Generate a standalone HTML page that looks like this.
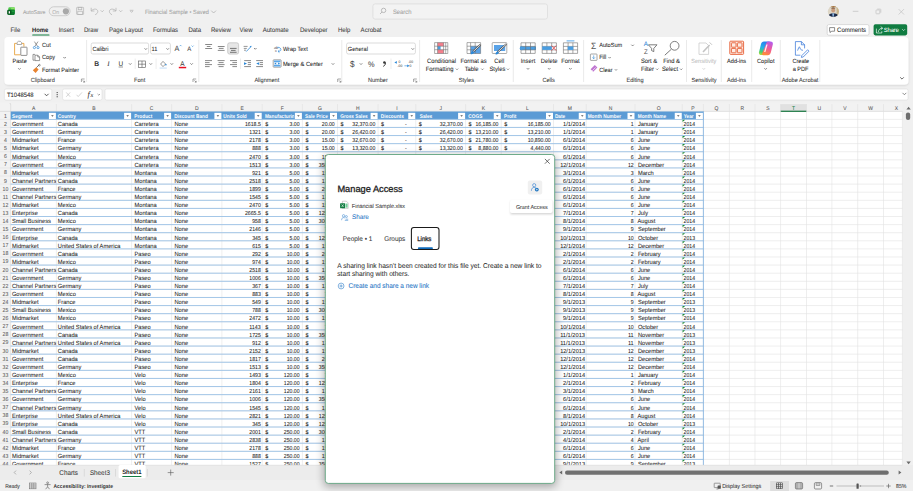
<!DOCTYPE html>
<html><head><meta charset="utf-8"><title>Excel - Manage Access</title>
<style>
html,body{margin:0;padding:0;width:913px;height:491px;overflow:hidden;background:#f0f0f0;}
svg{display:block;font-family:"Liberation Sans", sans-serif;text-rendering:geometricPrecision;}
</style></head><body>
<svg width="913" height="491" viewBox="0 0 913 491">
<defs>
<filter id="shd" x="-15%" y="-15%" width="130%" height="130%"><feGaussianBlur stdDeviation="4"/></filter>
<filter id="shd2" x="-20%" y="-20%" width="140%" height="140%"><feGaussianBlur stdDeviation="1.2"/></filter>
</defs>
<rect x="0.00" y="0.00" width="913.00" height="491.00" fill="#f0f0f0"/>
<rect x="8.40" y="7.30" width="6.50" height="3.40" fill="#52cc4a" rx="1.0"/>
<rect x="11.20" y="7.60" width="3.70" height="2.20" fill="#8ee36a" rx="0.6"/>
<rect x="7.60" y="9.50" width="7.30" height="5.40" fill="#0e7a2e" rx="1.1"/>
<rect x="11.40" y="10.60" width="3.50" height="1.40" fill="#1a9a3a"/>
<rect x="7.20" y="10.20" width="4.20" height="4.20" fill="#0a5a20" rx="0.6"/>
<rect x="8.70" y="11.20" width="1.30" height="2.30" fill="#f2f2f2"/>
<text x="22.90" y="13.80" font-size="5.584" fill="#a3a3a3" textLength="22.42" lengthAdjust="spacingAndGlyphs" stroke="#a3a3a3" stroke-width="0.06">AutoSave</text>
<rect x="49.20" y="6.80" width="20.90" height="8.90" fill="none" rx="4.45" stroke="#bdbdbd" stroke-width="0.7"/>
<text x="52.20" y="13.60" font-size="5.616" fill="#b5b5b5" textLength="6.94" lengthAdjust="spacingAndGlyphs" stroke="#b5b5b5" stroke-width="0.06">On</text>
<circle cx="65.9" cy="11.3" r="3.1" fill="#a9a9a9"/>
<g fill="none" stroke="#b3b3b3" stroke-width="0.7"><rect x="76.6" y="7.3" width="7" height="7.2" rx="0.6"/><rect x="78.2" y="7.3" width="3.6" height="2.4"/><rect x="77.8" y="11.2" width="4.6" height="3.3"/></g>
<g fill="none" stroke="#b3b3b3" stroke-width="0.75" stroke-linecap="round"><path d="M91.2 8.2 L91.2 11 L94 11"/><path d="M91.4 10.8 C93.5 8.2 97.8 8.5 97.8 11.6 C97.8 13 96.6 14 95.5 14.6"/><path d="M101 10.6 L102.2 11.8 L103.4 10.6"/><path d="M116 8.2 L116 11 L113.2 11"/><path d="M115.8 10.8 C113.7 8.2 109.4 8.5 109.4 11.6 C109.4 13 110.6 14 111.7 14.6"/><path d="M119.5 10.6 L120.7 11.8 L121.9 10.6"/><path d="M130.2 10.3 L133 10.3 M130.6 11.3 L131.6 12.4 L132.6 11.3"/></g>
<text x="144.90" y="13.90" font-size="6.059" fill="#a3a3a3" textLength="64.02" lengthAdjust="spacingAndGlyphs" stroke="#a3a3a3" stroke-width="0.06">Financial Sample • Saved</text>
<path d="M211.2 10.6 L213.6 13 L216 10.6" fill="none" stroke="#a8a8a8" stroke-width="0.7"/>
<rect x="372.90" y="3.90" width="174.60" height="15.20" fill="#f3f3f3" rx="2.2" stroke="#dadada" stroke-width="0.7"/>
<g fill="none" stroke="#a8a8a8" stroke-width="0.75"><circle cx="383.6" cy="10.4" r="2.2"/><path d="M382 12 L380 14"/></g>
<text x="392.90" y="13.60" font-size="6.34" fill="#a0a0a0" textLength="18.60" lengthAdjust="spacingAndGlyphs" stroke="#a0a0a0" stroke-width="0.06">Search</text>
<defs><clipPath id="avc"><circle cx="833.4" cy="11.6" r="5.6"/></clipPath></defs>
<g clip-path="url(#avc)"><rect x="827" y="5" width="13" height="13" fill="#ddd6c6"/><rect x="827" y="5" width="13" height="2.2" fill="#a7753f"/><rect x="836.6" y="7" width="3" height="8" fill="#c9b48a"/><ellipse cx="833.2" cy="10.2" rx="1.9" ry="2.4" fill="#c89a7c"/><path d="M831.2 8.6 C831.4 7.2 835 7.2 835.2 8.6 Z" fill="#6b4a33"/><path d="M828.4 16.8 C828.8 14.0 830.4 13.2 833.2 13.2 C836.0 13.2 837.8 14.0 838.4 16.8 Z" fill="#1a2a4a"/><path d="M832.2 13.3 L834.2 13.3 L833.8 16.8 L832.6 16.8 Z" fill="#8fb4dc"/></g>
<line x1="852.80" y1="11.30" x2="858.40" y2="11.30" stroke="#bfbfbf" stroke-width="0.7"/>
<g fill="none" stroke="#c2c2c2" stroke-width="0.7"><rect x="876" y="10" width="3.8" height="3.8" rx="0.5"/><path d="M877.2 9.1 L880.3 9.1 Q880.8 9.1 880.8 9.6 L880.8 12.7"/></g>
<path d="M898.6 9.1 L904 14.5 M904 9.1 L898.6 14.5" stroke="#c2c2c2" stroke-width="0.7"/>
<rect x="827.20" y="24.60" width="41.80" height="10.60" fill="#ffffff" rx="1.6" stroke="#c6c6c6" stroke-width="0.6"/>
<path d="M829.6 27.6 L834.6 27.6 L834.6 31.2 L831.6 31.2 L830.2 32.6 L830.2 31.2 L829.6 31.2 Z" fill="none" stroke="#424242" stroke-width="0.6"/>
<text x="837.10" y="32.00" font-size="6.48" fill="#242424" textLength="29.01" lengthAdjust="spacingAndGlyphs" stroke="#242424" stroke-width="0.06">Comments</text>
<rect x="873.60" y="24.20" width="33.60" height="11.20" fill="#107c41" rx="1.8"/>
<g fill="none" stroke="#fff" stroke-width="0.65" stroke-linecap="round" stroke-linejoin="round"><path d="M876.4 29.0 V33.0 H881.8 V31.6"/><path d="M878.4 31.6 C878.6 29.4 880.0 28.2 882.4 28.2"/><path d="M881.0 26.8 L882.5 28.2 L881.0 29.6"/></g>
<text x="883.70" y="32.00" font-size="6.188" fill="#ffffff" textLength="15.29" lengthAdjust="spacingAndGlyphs" stroke="#ffffff" stroke-width="0.06">Share</text>
<path d="M902.2 29.2 L903.6 30.6 L905 29.2" fill="none" stroke="#fff" stroke-width="0.6"/>
<text x="10.50" y="32.30" font-size="6.534" fill="#3b3b3b" textLength="9.75" lengthAdjust="spacingAndGlyphs" stroke="#3b3b3b" stroke-width="0.06">File</text>
<text x="58.70" y="32.30" font-size="6.534" fill="#3b3b3b" textLength="15.13" lengthAdjust="spacingAndGlyphs" stroke="#3b3b3b" stroke-width="0.06">Insert</text>
<text x="83.90" y="32.30" font-size="6.534" fill="#3b3b3b" textLength="14.12" lengthAdjust="spacingAndGlyphs" stroke="#3b3b3b" stroke-width="0.06">Draw</text>
<text x="108.90" y="32.30" font-size="6.534" fill="#3b3b3b" textLength="33.98" lengthAdjust="spacingAndGlyphs" stroke="#3b3b3b" stroke-width="0.06">Page Layout</text>
<text x="152.90" y="32.30" font-size="6.534" fill="#3b3b3b" textLength="25.21" lengthAdjust="spacingAndGlyphs" stroke="#3b3b3b" stroke-width="0.06">Formulas</text>
<text x="188.40" y="32.30" font-size="6.534" fill="#3b3b3b" textLength="12.78" lengthAdjust="spacingAndGlyphs" stroke="#3b3b3b" stroke-width="0.06">Data</text>
<text x="211.00" y="32.30" font-size="6.534" fill="#3b3b3b" textLength="19.84" lengthAdjust="spacingAndGlyphs" stroke="#3b3b3b" stroke-width="0.06">Review</text>
<text x="239.50" y="32.30" font-size="6.534" fill="#3b3b3b" textLength="13.00" lengthAdjust="spacingAndGlyphs" stroke="#3b3b3b" stroke-width="0.06">View</text>
<text x="262.70" y="32.30" font-size="6.534" fill="#3b3b3b" textLength="25.90" lengthAdjust="spacingAndGlyphs" stroke="#3b3b3b" stroke-width="0.06">Automate</text>
<text x="300.00" y="32.30" font-size="6.534" fill="#3b3b3b" textLength="27.58" lengthAdjust="spacingAndGlyphs" stroke="#3b3b3b" stroke-width="0.06">Developer</text>
<text x="338.00" y="32.30" font-size="6.534" fill="#3b3b3b" textLength="12.44" lengthAdjust="spacingAndGlyphs" stroke="#3b3b3b" stroke-width="0.06">Help</text>
<text x="360.60" y="32.30" font-size="6.534" fill="#3b3b3b" textLength="20.85" lengthAdjust="spacingAndGlyphs" stroke="#3b3b3b" stroke-width="0.06">Acrobat</text>
<text x="32.00" y="32.30" font-size="6.318" fill="#242424" font-weight="700" textLength="16.25" lengthAdjust="spacingAndGlyphs">Home</text>
<rect x="32.20" y="34.50" width="17.30" height="1.10" fill="#107c41" rx="0.5"/>
<rect x="5.00" y="38.80" width="903.60" height="46.80" fill="#000" rx="4" opacity="0.12" filter="url(#shd2)"/>
<rect x="4.30" y="37.00" width="904.30" height="47.80" fill="#ffffff" rx="3.8"/>
<line x1="86.60" y1="40.00" x2="86.60" y2="82.00" stroke="#e1e1e1" stroke-width="0.7"/>
<line x1="198.80" y1="40.00" x2="198.80" y2="82.00" stroke="#e1e1e1" stroke-width="0.7"/>
<line x1="341.80" y1="40.00" x2="341.80" y2="82.00" stroke="#e1e1e1" stroke-width="0.7"/>
<line x1="419.60" y1="40.00" x2="419.60" y2="82.00" stroke="#e1e1e1" stroke-width="0.7"/>
<line x1="513.30" y1="40.00" x2="513.30" y2="82.00" stroke="#e1e1e1" stroke-width="0.7"/>
<line x1="583.60" y1="40.00" x2="583.60" y2="82.00" stroke="#e1e1e1" stroke-width="0.7"/>
<line x1="686.50" y1="40.00" x2="686.50" y2="82.00" stroke="#e1e1e1" stroke-width="0.7"/>
<line x1="721.30" y1="40.00" x2="721.30" y2="82.00" stroke="#e1e1e1" stroke-width="0.7"/>
<line x1="751.70" y1="40.00" x2="751.70" y2="82.00" stroke="#e1e1e1" stroke-width="0.7"/>
<line x1="780.30" y1="40.00" x2="780.30" y2="82.00" stroke="#e1e1e1" stroke-width="0.7"/>
<line x1="819.80" y1="40.00" x2="819.80" y2="82.00" stroke="#e1e1e1" stroke-width="0.7"/>
<text x="30.80" y="82.20" font-size="6.048" fill="#3a3a3a" textLength="23.97" lengthAdjust="spacingAndGlyphs" stroke="#3a3a3a" stroke-width="0.06">Clipboard</text>
<text x="134.00" y="82.20" font-size="6.048" fill="#3a3a3a" textLength="11.21" lengthAdjust="spacingAndGlyphs" stroke="#3a3a3a" stroke-width="0.06">Font</text>
<text x="254.40" y="82.20" font-size="6.048" fill="#3a3a3a" textLength="24.90" lengthAdjust="spacingAndGlyphs" stroke="#3a3a3a" stroke-width="0.06">Alignment</text>
<text x="367.90" y="82.20" font-size="6.048" fill="#3a3a3a" textLength="19.92" lengthAdjust="spacingAndGlyphs" stroke="#3a3a3a" stroke-width="0.06">Number</text>
<text x="466.40" y="82.20" font-size="6.048" fill="#3a3a3a" text-anchor="middle" textLength="15.25" lengthAdjust="spacingAndGlyphs" stroke="#3a3a3a" stroke-width="0.06">Styles</text>
<text x="548.60" y="82.20" font-size="6.048" fill="#3a3a3a" text-anchor="middle" textLength="12.45" lengthAdjust="spacingAndGlyphs" stroke="#3a3a3a" stroke-width="0.06">Cells</text>
<text x="635.00" y="82.20" font-size="6.048" fill="#3a3a3a" text-anchor="middle" textLength="17.12" lengthAdjust="spacingAndGlyphs" stroke="#3a3a3a" stroke-width="0.06">Editing</text>
<text x="704.00" y="82.20" font-size="6.048" fill="#3a3a3a" text-anchor="middle" textLength="25.21" lengthAdjust="spacingAndGlyphs" stroke="#3a3a3a" stroke-width="0.06">Sensitivity</text>
<text x="736.50" y="82.20" font-size="6.048" fill="#3a3a3a" text-anchor="middle" textLength="18.99" lengthAdjust="spacingAndGlyphs" stroke="#3a3a3a" stroke-width="0.06">Add-ins</text>
<text x="800.00" y="82.20" font-size="6.048" fill="#3a3a3a" text-anchor="middle" textLength="36.74" lengthAdjust="spacingAndGlyphs" stroke="#3a3a3a" stroke-width="0.06">Adobe Acrobat</text>
<g fill="none" stroke="#6b6b6b" stroke-width="0.6"><path d="M81.4 82 L81.4 79 L84.6 79"/><path d="M82.8 80.4 L84.6 82.2 M84.6 80.8 L84.6 82.2 L83.2 82.2"/></g>
<g fill="none" stroke="#6b6b6b" stroke-width="0.6"><path d="M193.0 82 L193.0 79 L196.2 79"/><path d="M194.4 80.4 L196.2 82.2 M196.2 80.8 L196.2 82.2 L194.8 82.2"/></g>
<g fill="none" stroke="#6b6b6b" stroke-width="0.6"><path d="M337.7 82 L337.7 79 L340.9 79"/><path d="M339.1 80.4 L340.9 82.2 M340.9 80.8 L340.9 82.2 L339.5 82.2"/></g>
<g fill="none" stroke="#6b6b6b" stroke-width="0.6"><path d="M413.6 82 L413.6 79 L416.8 79"/><path d="M415.0 80.4 L416.8 82.2 M416.8 80.8 L416.8 82.2 L415.4 82.2"/></g>
<g fill="none" stroke-width="0.9"><path d="M16.8 43.4 L14.6 43.4 L14.6 54.8 L20.4 54.8" stroke="#e8a33d"/><path d="M21.8 43.4 L23.9 43.4 L23.9 46.6" stroke="#e8a33d"/><path d="M17 44.5 L17 42.6 L18.4 41.3 L20.3 41.3 L21.6 42.6 L21.6 44.5 Z" stroke="#8a8a8a" stroke-width="0.7"/><rect x="20.8" y="47.2" width="6.2" height="8.2" rx="0.4" stroke="#6e6e6e" stroke-width="0.75"/></g>
<text x="19.60" y="63.20" font-size="6.048" fill="#262626" text-anchor="middle" textLength="14.32" lengthAdjust="spacingAndGlyphs" stroke="#262626" stroke-width="0.06">Paste</text>
<path d="M18.15 68.20 L19.40 69.45 L20.65 68.20" fill="none" stroke="#5c5c5c" stroke-width="0.7"/>
<g fill="none" stroke-width="0.7"><path d="M34.4 41.6 L37.6 46.4 M38 41.6 L34.8 46.4" stroke="#6b6b6b"/><circle cx="34.4" cy="47.6" r="1.1" stroke="#2b88d8"/><circle cx="38.0" cy="47.6" r="1.1" stroke="#2b88d8"/></g>
<text x="42.00" y="47.20" font-size="6.048" fill="#262626" textLength="8.71" lengthAdjust="spacingAndGlyphs" stroke="#262626" stroke-width="0.06">Cut</text>
<g fill="none" stroke="#6b6b6b" stroke-width="0.7"><path d="M35 54.4 L33 54.4 L33 60.2 L34.8 60.2"/><path d="M35 55.2 L37.8 55.2 L39.6 57 L39.6 60.6 L35 60.6 Z"/><path d="M37.8 55.2 L37.8 57 L39.6 57"/></g>
<text x="42.00" y="59.40" font-size="6.048" fill="#262626" textLength="13.07" lengthAdjust="spacingAndGlyphs" stroke="#262626" stroke-width="0.06">Copy</text>
<path d="M63.35 57.00 L64.60 58.25 L65.85 57.00" fill="none" stroke="#5c5c5c" stroke-width="0.7"/>
<g><path d="M32.8 70.2 L36.2 67.2 L38.6 69.6 L35.6 73 Z" fill="#e8832f"/><path d="M36.4 67.6 L39.4 64.6" stroke="#555" stroke-width="0.8"/><circle cx="39.4" cy="65.2" r="0.9" fill="none" stroke="#555" stroke-width="0.5"/></g>
<text x="42.00" y="71.80" font-size="6.048" fill="#262626" textLength="37.03" lengthAdjust="spacingAndGlyphs" stroke="#262626" stroke-width="0.06">Format Painter</text>
<rect x="91.20" y="43.00" width="57.40" height="11.00" fill="#fff" rx="1.6" stroke="#c4c4c4" stroke-width="0.6"/>
<text x="92.40" y="50.60" font-size="6.102" fill="#262626" textLength="16.01" lengthAdjust="spacingAndGlyphs" stroke="#262626" stroke-width="0.06">Calibri</text>
<path d="M144.55 48.30 L145.80 49.55 L147.05 48.30" fill="none" stroke="#555" stroke-width="0.7"/>
<rect x="150.60" y="43.00" width="19.80" height="11.00" fill="#fff" rx="1.6" stroke="#c4c4c4" stroke-width="0.6"/>
<text x="151.60" y="50.60" font-size="6.102" fill="#262626" textLength="5.87" lengthAdjust="spacingAndGlyphs" stroke="#262626" stroke-width="0.06">11</text>
<path d="M166.45 48.30 L167.70 49.55 L168.95 48.30" fill="none" stroke="#555" stroke-width="0.7"/>
<text x="176.90" y="51.00" font-size="7.776" fill="#4a4a4a" text-anchor="middle" textLength="4.80" lengthAdjust="spacingAndGlyphs" stroke="#4a4a4a" stroke-width="0.06">A</text>
<path d="M179.6 46.2 L180.6 45.2 L181.6 46.2" fill="none" stroke="#2b88d8" stroke-width="0.6"/>
<text x="189.20" y="51.00" font-size="6.48" fill="#4a4a4a" text-anchor="middle" textLength="4.00" lengthAdjust="spacingAndGlyphs" stroke="#4a4a4a" stroke-width="0.06">A</text>
<path d="M191.6 45.6 L192.6 46.6 L193.6 45.6" fill="none" stroke="#2b88d8" stroke-width="0.6"/>
<text x="96.60" y="66.20" font-size="6.8" fill="#3a3a3a" font-weight="700" text-anchor="middle">B</text>
<text x="108.40" y="66.20" font-size="7.0" fill="#3a3a3a" text-anchor="middle" font-style="italic" font-family="Liberation Serif" stroke="#3a3a3a" stroke-width="0.06">I</text>
<text x="120.80" y="65.80" font-size="6.4" fill="#3a3a3a" text-anchor="middle" stroke="#3a3a3a" stroke-width="0.06">U</text>
<line x1="118.60" y1="67.00" x2="123.00" y2="67.00" stroke="#333" stroke-width="0.5"/>
<path d="M128.95 63.30 L130.20 64.55 L131.45 63.30" fill="none" stroke="#555" stroke-width="0.7"/>
<line x1="135.20" y1="58.50" x2="135.20" y2="69.00" stroke="#e1e1e1" stroke-width="0.6"/>
<g fill="none" stroke="#555" stroke-width="0.6"><rect x="138.4" y="61" width="7.2" height="6.4"/><path d="M142 61 L142 67.4 M138.4 64.2 L145.6 64.2"/></g>
<path d="M149.55 63.30 L150.80 64.55 L152.05 63.30" fill="none" stroke="#555" stroke-width="0.7"/>
<line x1="156.10" y1="58.50" x2="156.10" y2="69.00" stroke="#e1e1e1" stroke-width="0.6"/>
<g fill="none" stroke="#555" stroke-width="0.6"><path d="M160.6 64 L163 61.4 L165.6 64 L163 66.6 Z"/></g><circle cx="165.9" cy="64.8" r="0.8" fill="#2b88d8"/>
<rect x="159.60" y="67.60" width="7.20" height="0.90" fill="#b9d7f5"/>
<path d="M170.55 63.30 L171.80 64.55 L173.05 63.30" fill="none" stroke="#555" stroke-width="0.7"/>
<text x="182.50" y="66.00" font-size="6.912" fill="#333" text-anchor="middle" textLength="4.27" lengthAdjust="spacingAndGlyphs" stroke="#333" stroke-width="0.06">A</text>
<rect x="178.80" y="66.80" width="7.40" height="1.50" fill="#e81123"/>
<path d="M190.35 63.30 L191.60 64.55 L192.85 63.30" fill="none" stroke="#555" stroke-width="0.7"/>
<path d="M205.20 44.50 L212.10 44.50 M206.80 46.50 L210.50 46.50 M205.20 48.50 L212.10 48.50 " fill="none" stroke="#6a6a6a" stroke-width="0.8"/>
<path d="M217.80 46.50 L224.60 46.50 M218.80 48.40 L223.60 48.40 M217.80 50.40 L224.60 50.40 " fill="none" stroke="#6a6a6a" stroke-width="0.8"/>
<rect x="227.70" y="42.80" width="10.90" height="11.30" fill="#e6e6e6" rx="1.8" stroke="#bcbcbc" stroke-width="0.7"/>
<path d="M230.00 48.40 L236.60 48.40 M231.00 50.40 L235.60 50.40 M230.00 52.30 L236.60 52.30 " fill="none" stroke="#555" stroke-width="0.8"/>
<g fill="none" stroke-width="0.7"><path d="M243.6 46.4 L247.6 46.4 M243.8 48.4 L246.8 48.4 M244 50.2 L246 50.2" stroke="#6a6a6a"/><path d="M246.2 51.6 L251 46.6" stroke="#2b88d8" stroke-width="0.8"/></g><path d="M251.4 45.8 L249.6 46.2 L251 47.6Z" fill="#2b88d8"/>
<path d="M254.05 48.00 L255.30 49.25 L256.55 48.00" fill="none" stroke="#555" stroke-width="0.7"/>
<path d="M205.00 60.60 L212.00 60.60 M205.00 62.60 L209.60 62.60 M205.00 64.60 L212.00 64.60 M205.00 66.60 L209.60 66.60 " fill="none" stroke="#6a6a6a" stroke-width="0.8"/>
<path d="M217.60 60.60 L224.60 60.60 M218.60 62.60 L223.60 62.60 M217.60 64.60 L224.60 64.60 M218.60 66.60 L223.60 66.60 " fill="none" stroke="#6a6a6a" stroke-width="0.8"/>
<path d="M230.00 60.60 L237.00 60.60 M232.40 62.60 L237.00 62.60 M230.00 64.60 L237.00 64.60 M232.40 66.60 L237.00 66.60 " fill="none" stroke="#6a6a6a" stroke-width="0.8"/>
<line x1="240.50" y1="58.50" x2="240.50" y2="69.00" stroke="#e1e1e1" stroke-width="0.6"/>
<path d="M244.20 60.60 L251.00 60.60 M247.80 62.60 L251.00 62.60 M247.80 64.60 L251.00 64.60 M244.20 66.60 L251.00 66.60 " fill="none" stroke="#6a6a6a" stroke-width="0.8"/>
<path d="M244.0 62.2 L247.0 63.6 L244.0 65.0Z" fill="#2b88d8"/>
<path d="M256.20 60.60 L263.00 60.60 M259.80 62.60 L263.00 62.60 M259.80 64.60 L263.00 64.60 M256.20 66.60 L263.00 66.60 " fill="none" stroke="#6a6a6a" stroke-width="0.8"/>
<path d="M259.2 62.2 L256.2 63.6 L259.2 65.0Z" fill="#2b88d8"/>
<text x="274.00" y="48.60" font-size="3.8" fill="#6a6a6a" stroke="#6a6a6a" stroke-width="0.06">ab</text>
<text x="275.00" y="52.40" font-size="3.8" fill="#6a6a6a" stroke="#6a6a6a" stroke-width="0.06">c</text>
<path d="M277.4 47.2 C281.8 47.2 282.0 51.4 278.4 51.4" fill="none" stroke="#2b88d8" stroke-width="0.7"/><path d="M279.4 50.2 L278.0 51.4 L279.4 52.6" fill="none" stroke="#2b88d8" stroke-width="0.7"/>
<text x="282.90" y="51.20" font-size="5.994" fill="#262626" textLength="24.78" lengthAdjust="spacingAndGlyphs" stroke="#262626" stroke-width="0.06">Wrap Text</text>
<rect x="273.20" y="59.80" width="7.90" height="7.40" fill="#ffffff" rx="0.6" stroke="#6a6a6a" stroke-width="0.6"/>
<rect x="273.90" y="60.50" width="6.50" height="1.80" fill="#5aa7ea"/>
<rect x="273.90" y="64.70" width="6.50" height="1.80" fill="#5aa7ea"/>
<path d="M274.2 63.5 L276.2 62.6 L276.2 64.4Z M280.1 63.5 L278.1 62.6 L278.1 64.4Z" fill="#2b88d8"/>
<text x="282.90" y="65.90" font-size="6.124" fill="#262626" textLength="40.02" lengthAdjust="spacingAndGlyphs" stroke="#262626" stroke-width="0.06">Merge &amp; Center</text>
<path d="M331.75 63.30 L333.00 64.55 L334.25 63.30" fill="none" stroke="#555" stroke-width="0.7"/>
<rect x="346.60" y="43.00" width="68.80" height="11.00" fill="#fff" rx="1.6" stroke="#c4c4c4" stroke-width="0.6"/>
<text x="347.80" y="50.60" font-size="6.102" fill="#262626" textLength="20.10" lengthAdjust="spacingAndGlyphs" stroke="#262626" stroke-width="0.06">General</text>
<path d="M411.55 48.30 L412.80 49.55 L414.05 48.30" fill="none" stroke="#555" stroke-width="0.7"/>
<text x="352.20" y="66.90" font-size="8.856" fill="#4a4a4a" text-anchor="middle" textLength="4.56" lengthAdjust="spacingAndGlyphs" stroke="#4a4a4a" stroke-width="0.06">$</text>
<path d="M359.75 63.30 L361.00 64.55 L362.25 63.30" fill="none" stroke="#555" stroke-width="0.7"/>
<text x="371.40" y="66.60" font-size="7.992" fill="#4a4a4a" text-anchor="middle" textLength="6.58" lengthAdjust="spacingAndGlyphs" stroke="#4a4a4a" stroke-width="0.06">%</text>
<circle cx="384.4" cy="62.4" r="1.25" fill="#333"/><path d="M385.5 62.6 C385.6 64.6 384.6 65.8 383.2 66.4" fill="none" stroke="#333" stroke-width="0.9"/>
<line x1="391.00" y1="58.50" x2="391.00" y2="69.00" stroke="#e1e1e1" stroke-width="0.6"/>
<path d="M394.4 62.4 L396.8 61 L396.8 63.8Z" fill="#2b88d8"/>
<text x="398.40" y="63.00" font-size="3.672" fill="#555" textLength="1.89" lengthAdjust="spacingAndGlyphs" stroke="#555" stroke-width="0.06">0</text>
<text x="397.60" y="67.20" font-size="3.672" fill="#555" textLength="4.73" lengthAdjust="spacingAndGlyphs" stroke="#555" stroke-width="0.06">.00</text>
<text x="408.40" y="63.00" font-size="3.672" fill="#555" textLength="4.73" lengthAdjust="spacingAndGlyphs" stroke="#555" stroke-width="0.06">.00</text>
<text x="409.60" y="67.20" font-size="3.672" fill="#555" textLength="1.89" lengthAdjust="spacingAndGlyphs" stroke="#555" stroke-width="0.06">0</text>
<path d="M409.6 65.8 L407.2 64.4 L407.2 67.2Z" fill="#2b88d8"/>
<line x1="404.40" y1="65.80" x2="407.40" y2="65.80" stroke="#2b88d8" stroke-width="0.6"/>
<g><rect x="437.6" y="42.6" width="6.0" height="3.6" fill="#f47f8c"/><rect x="437.6" y="46.2" width="3.0" height="3.5" fill="#4a9de0"/><rect x="437.6" y="49.7" width="6.0" height="3.8" fill="#f47f8c"/><path d="M434.6 42.6 H447.8 V53.5 H434.6 Z M434.6 46.2 H447.8 M434.6 49.7 H447.8 M437.6 42.6 V53.5 M443.6 42.6 V53.5 M445.7 42.6 V53.5" fill="none" stroke="#6b6b6b" stroke-width="0.55"/></g>
<text x="441.50" y="63.20" font-size="6.264" fill="#262626" text-anchor="middle" textLength="29.02" lengthAdjust="spacingAndGlyphs" stroke="#262626" stroke-width="0.06">Conditional</text>
<text x="439.60" y="71.00" font-size="6.264" fill="#262626" text-anchor="middle" textLength="27.72" lengthAdjust="spacingAndGlyphs" stroke="#262626" stroke-width="0.06">Formatting</text>
<path d="M455.85 68.62 L457.00 69.78 L458.15 68.62" fill="none" stroke="#555" stroke-width="0.65"/>
<g><rect x="470.6" y="46.2" width="10.0" height="7.3" fill="#5aa3e8"/><path d="M467 42.6 H480.6 V53.5 H467 Z M467 46.2 H480.6 M467 49.8 H476 M470.6 42.6 V53.5 M475.2 42.6 V53.5" fill="none" stroke="#6b6b6b" stroke-width="0.55"/><path d="M473.2 51.6 L480.2 45.0" stroke="#555" stroke-width="1.9" stroke-linecap="round"/><path d="M473.2 51.6 L480.2 45.0" stroke="#fff" stroke-width="0.8" stroke-linecap="round"/><path d="M470.8 54.2 C470.6 52.4 471.6 51.0 473.2 51.2 C474.0 51.4 474.2 52.4 473.6 53.2 C472.8 54.0 471.8 54.4 470.8 54.2Z" fill="#2b88d8"/></g>
<text x="473.60" y="63.20" font-size="6.264" fill="#262626" text-anchor="middle" textLength="26.11" lengthAdjust="spacingAndGlyphs" stroke="#262626" stroke-width="0.06">Format as</text>
<text x="471.60" y="71.00" font-size="6.264" fill="#262626" text-anchor="middle" textLength="13.87" lengthAdjust="spacingAndGlyphs" stroke="#262626" stroke-width="0.06">Table</text>
<path d="M481.25 68.62 L482.40 69.78 L483.55 68.62" fill="none" stroke="#555" stroke-width="0.65"/>
<g><rect x="492.2" y="42.6" width="14.6" height="10.9" rx="0.8" fill="#fff" stroke="#6b6b6b" stroke-width="0.55"/><rect x="494.0" y="45.0" width="11.2" height="6.0" fill="#5aa3e8"/><path d="M498.0 51.8 L505.8 44.6" stroke="#555" stroke-width="1.9" stroke-linecap="round"/><path d="M498.0 51.8 L505.8 44.6" stroke="#fff" stroke-width="0.8" stroke-linecap="round"/><path d="M495.6 54.4 C495.4 52.6 496.4 51.2 498.0 51.4 C498.8 51.6 499.0 52.6 498.4 53.4 C497.6 54.2 496.6 54.6 495.6 54.4Z" fill="#2b88d8"/></g>
<text x="499.20" y="63.20" font-size="6.264" fill="#262626" text-anchor="middle" textLength="9.99" lengthAdjust="spacingAndGlyphs" stroke="#262626" stroke-width="0.06">Cell</text>
<text x="497.40" y="71.00" font-size="6.264" fill="#262626" text-anchor="middle" textLength="15.79" lengthAdjust="spacingAndGlyphs" stroke="#262626" stroke-width="0.06">Styles</text>
<path d="M506.85 68.62 L508.00 69.78 L509.15 68.62" fill="none" stroke="#555" stroke-width="0.65"/>
<rect x="520.00" y="46.40" width="16.00" height="3.50" fill="#4a9de0"/>
<path d="M521.00 42.8 H535.20 V53.4 H521.00 Z M521.00 46.4 H535.20 M521.00 49.9 H535.20 M525.70 42.8 V53.4 M530.50 42.8 V53.4" fill="none" stroke="#6b6b6b" stroke-width="0.6"/>
<path d="M519.4 48.15 L522.2 45.8 L522.2 50.5Z" fill="#4a9de0"/>
<path d="M542.20 42.8 H556.40 V53.4 H542.20 Z M542.20 46.4 H556.40 M542.20 49.9 H556.40 M546.90 42.8 V53.4 M551.70 42.8 V53.4" fill="none" stroke="#6b6b6b" stroke-width="0.6"/>
<rect x="542.20" y="46.40" width="9.50" height="3.50" fill="#4a9de0"/>
<path d="M551.6 45.6 L556.2 50.6 M556.2 45.6 L551.6 50.6" stroke="#e8474c" stroke-width="0.8"/>
<path d="M563.40 42.8 H577.60 V53.4 H563.40 Z M563.40 46.4 H577.60 M563.40 49.9 H577.60 M568.10 42.8 V53.4 M572.90 42.8 V53.4" fill="none" stroke="#6b6b6b" stroke-width="0.6"/>
<rect x="567.70" y="46.40" width="5.60" height="3.50" fill="#4a9de0"/>
<rect x="566.60" y="40.40" width="7.80" height="1.00" fill="#5aa7ea"/>
<text x="528.00" y="63.20" font-size="6.264" fill="#262626" text-anchor="middle" textLength="14.51" lengthAdjust="spacingAndGlyphs" stroke="#262626" stroke-width="0.06">Insert</text>
<path d="M526.75 68.10 L528.00 69.35 L529.25 68.10" fill="none" stroke="#555" stroke-width="0.7"/>
<text x="549.20" y="63.20" font-size="6.264" fill="#262626" text-anchor="middle" textLength="16.77" lengthAdjust="spacingAndGlyphs" stroke="#262626" stroke-width="0.06">Delete</text>
<path d="M547.95 68.10 L549.20 69.35 L550.45 68.10" fill="none" stroke="#555" stroke-width="0.7"/>
<text x="570.40" y="63.20" font-size="6.264" fill="#262626" text-anchor="middle" textLength="18.37" lengthAdjust="spacingAndGlyphs" stroke="#262626" stroke-width="0.06">Format</text>
<path d="M569.15 68.10 L570.40 69.35 L571.65 68.10" fill="none" stroke="#555" stroke-width="0.7"/>
<text x="593.60" y="48.60" font-size="9.072" fill="#555" text-anchor="middle" textLength="5.19" lengthAdjust="spacingAndGlyphs" stroke="#555" stroke-width="0.06">Σ</text>
<text x="599.20" y="47.40" font-size="6.048" fill="#262626" textLength="23.03" lengthAdjust="spacingAndGlyphs" stroke="#262626" stroke-width="0.06">AutoSum</text>
<path d="M631.35 44.70 L632.60 45.95 L633.85 44.70" fill="none" stroke="#555" stroke-width="0.7"/>
<rect x="590.4" y="54" width="6.6" height="6.4" rx="0.6" fill="none" stroke="#6b6b6b" stroke-width="0.6"/><path d="M593.7 55.4 L593.7 58.6 M592.4 57.4 L593.7 58.8 L595 57.4" fill="none" stroke="#2b88d8" stroke-width="0.6"/>
<text x="599.20" y="59.40" font-size="6.048" fill="#262626" textLength="7.15" lengthAdjust="spacingAndGlyphs" stroke="#262626" stroke-width="0.06">Fill</text>
<path d="M608.45 57.02 L609.60 58.18 L610.75 57.02" fill="none" stroke="#555" stroke-width="0.65"/>
<path d="M590.6 69.2 L594.8 65.0 L597.4 67.6 L593.2 71.8 Z" fill="#b45cc9" opacity="0.85"/><path d="M592.2 70.8 L595.6 67.4" stroke="#fff" stroke-width="0.6"/>
<text x="599.20" y="71.60" font-size="6.048" fill="#262626" textLength="13.38" lengthAdjust="spacingAndGlyphs" stroke="#262626" stroke-width="0.06">Clear</text>
<path d="M614.85 69.22 L616.00 70.38 L617.15 69.22" fill="none" stroke="#555" stroke-width="0.65"/>
<text x="645.80" y="46.40" font-size="6.696" fill="#2b88d8" text-anchor="middle" textLength="4.14" lengthAdjust="spacingAndGlyphs" stroke="#2b88d8" stroke-width="0.06">A</text>
<text x="645.80" y="54.20" font-size="6.696" fill="#555" text-anchor="middle" textLength="3.79" lengthAdjust="spacingAndGlyphs" stroke="#555" stroke-width="0.06">Z</text>
<path d="M648.4 44.8 L657.0 44.8 L653.8 48.4 L653.8 51.6 L651.6 50.6 L651.6 48.4 Z" fill="none" stroke="#555" stroke-width="0.75" stroke-linejoin="round"/>
<text x="649.00" y="63.20" font-size="6.264" fill="#262626" text-anchor="middle" textLength="16.12" lengthAdjust="spacingAndGlyphs" stroke="#262626" stroke-width="0.06">Sort &amp;</text>
<text x="647.40" y="71.00" font-size="6.264" fill="#262626" text-anchor="middle" textLength="12.89" lengthAdjust="spacingAndGlyphs" stroke="#262626" stroke-width="0.06">Filter</text>
<path d="M656.05 68.62 L657.20 69.78 L658.35 68.62" fill="none" stroke="#555" stroke-width="0.65"/>
<circle cx="674.6" cy="45.8" r="4.4" fill="none" stroke="#555" stroke-width="0.75"/><path d="M671.4 49.2 L664.8 55.2" stroke="#555" stroke-width="0.8"/>
<text x="671.60" y="63.20" font-size="6.264" fill="#262626" text-anchor="middle" textLength="16.76" lengthAdjust="spacingAndGlyphs" stroke="#262626" stroke-width="0.06">Find &amp;</text>
<text x="670.00" y="71.00" font-size="6.264" fill="#262626" text-anchor="middle" textLength="16.12" lengthAdjust="spacingAndGlyphs" stroke="#262626" stroke-width="0.06">Select</text>
<path d="M680.05 68.62 L681.20 69.78 L682.35 68.62" fill="none" stroke="#555" stroke-width="0.65"/>
<g fill="none" stroke="#c4c4c4" stroke-width="0.7"><path d="M699 43 L706 43 L708.6 45.6 L708.6 54.4 L699 54.4 Z"/><path d="M703 52 L709.6 45" stroke-width="1.6"/><path d="M709.6 42.4 L712 44.8" stroke-width="1.0"/></g>
<text x="703.80" y="63.20" font-size="5.994" fill="#bdbdbd" text-anchor="middle" textLength="24.98" lengthAdjust="spacingAndGlyphs" stroke="#bdbdbd" stroke-width="0.06">Sensitivity</text>
<path d="M702.55 68.20 L703.80 69.45 L705.05 68.20" fill="none" stroke="#c4c4c4" stroke-width="0.7"/>
<rect x="729.8" y="41.2" width="13.8" height="13.2" rx="0.8" fill="#fdebe3"/><g fill="none" stroke="#e8663f" stroke-width="0.95"><rect x="729.8" y="41.2" width="13.8" height="13.2" rx="0.8"/><rect x="731.4" y="42.8" width="4.6" height="4.4" rx="0.5"/><rect x="737.4" y="42.8" width="4.6" height="4.4" rx="0.5"/><rect x="731.4" y="48.4" width="4.6" height="4.4" rx="0.5"/><rect x="737.4" y="48.4" width="4.6" height="4.4" rx="0.5"/></g>
<text x="736.60" y="63.20" font-size="6.048" fill="#262626" text-anchor="middle" textLength="18.99" lengthAdjust="spacingAndGlyphs" stroke="#262626" stroke-width="0.06">Add-ins</text>
<defs><linearGradient id="cp1" x1="0.5" y1="0" x2="0.2" y2="1"><stop offset="0" stop-color="#2b7cf0"/><stop offset="0.45" stop-color="#22b0e8"/><stop offset="0.8" stop-color="#48cf6a"/><stop offset="1" stop-color="#b8dd3c"/></linearGradient><linearGradient id="cp2" x1="0.8" y1="0" x2="0.4" y2="1"><stop offset="0" stop-color="#b25cf0"/><stop offset="0.5" stop-color="#f0589a"/><stop offset="1" stop-color="#ff8a3a"/></linearGradient></defs>
<path d="M764.0 41.4 L768.8 41.4 C769.8 41.4 770.2 42.0 769.8 42.9 L765.4 53.6 C765.0 54.6 764.2 55.0 763.2 55.0 L761.2 55.0 C759.6 55.0 758.6 53.8 759.0 52.2 L761.0 44.0 C761.4 42.4 762.4 41.4 764.0 41.4Z" fill="url(#cp1)"/>
<path d="M767.8 55.2 L763.0 55.2 C762.0 55.2 761.6 54.6 762.0 53.7 L766.4 43.0 C766.8 42.0 767.6 41.6 768.6 41.6 L770.6 41.6 C772.2 41.6 773.2 42.8 772.8 44.4 L770.8 52.6 C770.4 54.2 769.4 55.2 767.8 55.2Z" fill="url(#cp2)"/>
<path d="M766.3 44.6 L767.6 44.6 L765.4 52.0 L764.1 52.0 Z" fill="#fff" opacity="0.9"/>
<text x="765.80" y="63.20" font-size="6.048" fill="#262626" text-anchor="middle" textLength="17.43" lengthAdjust="spacingAndGlyphs" stroke="#262626" stroke-width="0.06">Copilot</text>
<path d="M764.35 68.20 L765.60 69.45 L766.85 68.20" fill="none" stroke="#555" stroke-width="0.7"/>
<g fill="none" stroke="#2b6fd6" stroke-width="0.7"><path d="M795.4 41.6 L801.4 41.6 L804.6 44.8 L804.6 48.4 M795.4 41.6 L795.4 55.2 L800.4 55.2"/><path d="M801.4 41.6 L801.4 44.8 L804.6 44.8"/><path d="M797.6 50.6 C798.6 47.6 799.6 45.6 799.8 47.6 C800 49.6 802 50.4 803 50.2"/><path d="M801.8 55.6 L807.6 49.8 L809 51.2 L803.2 57 L801.4 57.4 Z"/></g>
<text x="800.80" y="63.20" font-size="6.048" fill="#262626" text-anchor="middle" textLength="16.81" lengthAdjust="spacingAndGlyphs" stroke="#262626" stroke-width="0.06">Create</text>
<text x="800.60" y="70.90" font-size="6.048" fill="#262626" text-anchor="middle" textLength="15.87" lengthAdjust="spacingAndGlyphs" stroke="#262626" stroke-width="0.06">a PDF</text>
<path d="M900.20 77.30 L902.00 79.10 L903.80 77.30" fill="none" stroke="#444" stroke-width="0.8"/>
<rect x="4.40" y="89.00" width="47.40" height="11.10" fill="#fff" rx="1.6" stroke="#d6d6d6" stroke-width="0.5"/>
<text x="7.00" y="96.90" font-size="6.35" fill="#262626" textLength="26.48" lengthAdjust="spacingAndGlyphs" stroke="#262626" stroke-width="0.06">T1048548</text>
<path d="M44.60 93.80 L46.60 95.80 L48.60 93.80" fill="none" stroke="#333" stroke-width="0.8"/>
<g fill="#555"><rect x="56.6" y="92.0" width="1.2" height="1.1"/><rect x="56.6" y="94.1" width="1.2" height="1.1"/><rect x="56.6" y="96.2" width="1.2" height="1.1"/></g>
<rect x="62.60" y="89.00" width="39.40" height="11.10" fill="#fff" rx="1.6" stroke="#d6d6d6" stroke-width="0.5"/>
<path d="M66.2 92.4 L70.2 96.8 M70.2 92.4 L66.2 96.8" stroke="#b8b8b8" stroke-width="0.6"/>
<path d="M76.6 94.8 L78.2 96.6 L82 92.4" fill="none" stroke="#b8b8b8" stroke-width="0.6"/>
<text x="87.60" y="97.40" font-size="8.0" fill="#333" font-style="italic" font-family="Liberation Serif" stroke="#333" stroke-width="0.06">f</text>
<text x="90.40" y="97.40" font-size="6.2" fill="#333" font-style="italic" font-family="Liberation Serif" stroke="#333" stroke-width="0.06">x</text>
<path d="M97.60 94.00 L98.80 95.20 L100.00 94.00" fill="none" stroke="#666" stroke-width="0.65"/>
<rect x="105.00" y="89.00" width="803.00" height="11.00" fill="#fff" rx="1.6" stroke="#d6d6d6" stroke-width="0.5"/>
<path d="M902.50 92.85 L904.40 94.75 L906.30 92.85" fill="none" stroke="#666" stroke-width="0.75"/>
<rect x="0.00" y="102.60" width="902.40" height="8.65" fill="#f2f2f2"/>
<rect x="0.00" y="111.25" width="10.70" height="353.95" fill="#f2f2f2"/>
<rect x="10.70" y="111.25" width="891.70" height="353.95" fill="#ffffff"/>
<rect x="780.60" y="104.10" width="25.90" height="7.50" fill="#e1e1e1"/>
<rect x="780.60" y="110.80" width="25.90" height="1.00" fill="#1e7b45"/>
<text x="33.55" y="109.90" font-size="5.4" fill="#555" text-anchor="middle" textLength="3.33" lengthAdjust="spacingAndGlyphs" stroke="#555" stroke-width="0.06">A</text>
<text x="94.00" y="109.90" font-size="5.4" fill="#555" text-anchor="middle" textLength="3.33" lengthAdjust="spacingAndGlyphs" stroke="#555" stroke-width="0.06">B</text>
<text x="151.60" y="109.90" font-size="5.4" fill="#555" text-anchor="middle" textLength="3.61" lengthAdjust="spacingAndGlyphs" stroke="#555" stroke-width="0.06">C</text>
<text x="196.75" y="109.90" font-size="5.4" fill="#555" text-anchor="middle" textLength="3.61" lengthAdjust="spacingAndGlyphs" stroke="#555" stroke-width="0.06">D</text>
<text x="242.05" y="109.90" font-size="5.4" fill="#555" text-anchor="middle" textLength="3.33" lengthAdjust="spacingAndGlyphs" stroke="#555" stroke-width="0.06">E</text>
<text x="282.30" y="109.90" font-size="5.4" fill="#555" text-anchor="middle" textLength="3.05" lengthAdjust="spacingAndGlyphs" stroke="#555" stroke-width="0.06">F</text>
<text x="319.95" y="109.90" font-size="5.4" fill="#555" text-anchor="middle" textLength="3.89" lengthAdjust="spacingAndGlyphs" stroke="#555" stroke-width="0.06">G</text>
<text x="357.80" y="109.90" font-size="5.4" fill="#555" text-anchor="middle" textLength="3.61" lengthAdjust="spacingAndGlyphs" stroke="#555" stroke-width="0.06">H</text>
<text x="396.93" y="109.90" font-size="5.4" fill="#555" text-anchor="middle" textLength="1.39" lengthAdjust="spacingAndGlyphs" stroke="#555" stroke-width="0.06">I</text>
<text x="440.68" y="109.90" font-size="5.4" fill="#555" text-anchor="middle" textLength="2.50" lengthAdjust="spacingAndGlyphs" stroke="#555" stroke-width="0.06">J</text>
<text x="483.43" y="109.90" font-size="5.4" fill="#555" text-anchor="middle" textLength="3.33" lengthAdjust="spacingAndGlyphs" stroke="#555" stroke-width="0.06">K</text>
<text x="527.38" y="109.90" font-size="5.4" fill="#555" text-anchor="middle" textLength="2.78" lengthAdjust="spacingAndGlyphs" stroke="#555" stroke-width="0.06">L</text>
<text x="569.88" y="109.90" font-size="5.4" fill="#555" text-anchor="middle" textLength="4.17" lengthAdjust="spacingAndGlyphs" stroke="#555" stroke-width="0.06">M</text>
<text x="610.62" y="109.90" font-size="5.4" fill="#555" text-anchor="middle" textLength="3.61" lengthAdjust="spacingAndGlyphs" stroke="#555" stroke-width="0.06">N</text>
<text x="658.62" y="109.90" font-size="5.4" fill="#555" text-anchor="middle" textLength="3.89" lengthAdjust="spacingAndGlyphs" stroke="#555" stroke-width="0.06">O</text>
<text x="692.83" y="109.90" font-size="5.4" fill="#555" text-anchor="middle" textLength="3.33" lengthAdjust="spacingAndGlyphs" stroke="#555" stroke-width="0.06">P</text>
<text x="716.40" y="109.90" font-size="5.4" fill="#555" text-anchor="middle" textLength="3.89" lengthAdjust="spacingAndGlyphs" stroke="#555" stroke-width="0.06">Q</text>
<text x="742.20" y="109.90" font-size="5.4" fill="#555" text-anchor="middle" textLength="3.61" lengthAdjust="spacingAndGlyphs" stroke="#555" stroke-width="0.06">R</text>
<text x="767.80" y="109.90" font-size="5.4" fill="#555" text-anchor="middle" textLength="3.33" lengthAdjust="spacingAndGlyphs" stroke="#555" stroke-width="0.06">S</text>
<text x="793.55" y="109.90" font-size="5.4" fill="#107c41" text-anchor="middle" textLength="3.05" lengthAdjust="spacingAndGlyphs" stroke="#107c41" stroke-width="0.06">T</text>
<text x="819.20" y="109.90" font-size="5.4" fill="#555" text-anchor="middle" textLength="3.61" lengthAdjust="spacingAndGlyphs" stroke="#555" stroke-width="0.06">U</text>
<text x="844.80" y="109.90" font-size="5.4" fill="#555" text-anchor="middle" textLength="3.33" lengthAdjust="spacingAndGlyphs" stroke="#555" stroke-width="0.06">V</text>
<text x="870.60" y="109.90" font-size="5.4" fill="#555" text-anchor="middle" textLength="4.72" lengthAdjust="spacingAndGlyphs" stroke="#555" stroke-width="0.06">W</text>
<text x="896.40" y="109.90" font-size="5.4" fill="#555" text-anchor="middle" textLength="3.33" lengthAdjust="spacingAndGlyphs" stroke="#555" stroke-width="0.06">X</text>
<line x1="56.40" y1="104.10" x2="56.40" y2="111.25" stroke="#dcdcdc" stroke-width="0.5"/>
<line x1="131.60" y1="104.10" x2="131.60" y2="111.25" stroke="#dcdcdc" stroke-width="0.5"/>
<line x1="171.60" y1="104.10" x2="171.60" y2="111.25" stroke="#dcdcdc" stroke-width="0.5"/>
<line x1="221.90" y1="104.10" x2="221.90" y2="111.25" stroke="#dcdcdc" stroke-width="0.5"/>
<line x1="262.20" y1="104.10" x2="262.20" y2="111.25" stroke="#dcdcdc" stroke-width="0.5"/>
<line x1="302.40" y1="104.10" x2="302.40" y2="111.25" stroke="#dcdcdc" stroke-width="0.5"/>
<line x1="337.50" y1="104.10" x2="337.50" y2="111.25" stroke="#dcdcdc" stroke-width="0.5"/>
<line x1="378.10" y1="104.10" x2="378.10" y2="111.25" stroke="#dcdcdc" stroke-width="0.5"/>
<line x1="415.75" y1="104.10" x2="415.75" y2="111.25" stroke="#dcdcdc" stroke-width="0.5"/>
<line x1="465.60" y1="104.10" x2="465.60" y2="111.25" stroke="#dcdcdc" stroke-width="0.5"/>
<line x1="501.25" y1="104.10" x2="501.25" y2="111.25" stroke="#dcdcdc" stroke-width="0.5"/>
<line x1="553.50" y1="104.10" x2="553.50" y2="111.25" stroke="#dcdcdc" stroke-width="0.5"/>
<line x1="586.25" y1="104.10" x2="586.25" y2="111.25" stroke="#dcdcdc" stroke-width="0.5"/>
<line x1="635.00" y1="104.10" x2="635.00" y2="111.25" stroke="#dcdcdc" stroke-width="0.5"/>
<line x1="682.25" y1="104.10" x2="682.25" y2="111.25" stroke="#dcdcdc" stroke-width="0.5"/>
<line x1="703.40" y1="104.10" x2="703.40" y2="111.25" stroke="#dcdcdc" stroke-width="0.5"/>
<line x1="729.40" y1="104.10" x2="729.40" y2="111.25" stroke="#dcdcdc" stroke-width="0.5"/>
<line x1="755.00" y1="104.10" x2="755.00" y2="111.25" stroke="#dcdcdc" stroke-width="0.5"/>
<line x1="780.60" y1="104.10" x2="780.60" y2="111.25" stroke="#dcdcdc" stroke-width="0.5"/>
<line x1="806.50" y1="104.10" x2="806.50" y2="111.25" stroke="#dcdcdc" stroke-width="0.5"/>
<line x1="831.90" y1="104.10" x2="831.90" y2="111.25" stroke="#dcdcdc" stroke-width="0.5"/>
<line x1="857.70" y1="104.10" x2="857.70" y2="111.25" stroke="#dcdcdc" stroke-width="0.5"/>
<line x1="883.50" y1="104.10" x2="883.50" y2="111.25" stroke="#dcdcdc" stroke-width="0.5"/>
<line x1="10.70" y1="104.10" x2="10.70" y2="465.20" stroke="#d0d0d0" stroke-width="0.5"/>
<line x1="0.00" y1="111.40" x2="902.40" y2="111.40" stroke="#cfcfcf" stroke-width="0.6"/>
<rect x="780.60" y="110.80" width="25.90" height="1.05" fill="#1e7b45"/>
<path d="M9.6 103.6 L10.4 103.6 L10.4 104.4Z" fill="#9a9a9a"/>
<line x1="56.40" y1="111.25" x2="56.40" y2="465.20" stroke="#e2e2e2" stroke-width="0.6"/>
<line x1="131.60" y1="111.25" x2="131.60" y2="465.20" stroke="#e2e2e2" stroke-width="0.6"/>
<line x1="171.60" y1="111.25" x2="171.60" y2="465.20" stroke="#e2e2e2" stroke-width="0.6"/>
<line x1="221.90" y1="111.25" x2="221.90" y2="465.20" stroke="#e2e2e2" stroke-width="0.6"/>
<line x1="262.20" y1="111.25" x2="262.20" y2="465.20" stroke="#e2e2e2" stroke-width="0.6"/>
<line x1="302.40" y1="111.25" x2="302.40" y2="465.20" stroke="#e2e2e2" stroke-width="0.6"/>
<line x1="337.50" y1="111.25" x2="337.50" y2="465.20" stroke="#e2e2e2" stroke-width="0.6"/>
<line x1="378.10" y1="111.25" x2="378.10" y2="465.20" stroke="#e2e2e2" stroke-width="0.6"/>
<line x1="415.75" y1="111.25" x2="415.75" y2="465.20" stroke="#e2e2e2" stroke-width="0.6"/>
<line x1="465.60" y1="111.25" x2="465.60" y2="465.20" stroke="#e2e2e2" stroke-width="0.6"/>
<line x1="501.25" y1="111.25" x2="501.25" y2="465.20" stroke="#e2e2e2" stroke-width="0.6"/>
<line x1="553.50" y1="111.25" x2="553.50" y2="465.20" stroke="#e2e2e2" stroke-width="0.6"/>
<line x1="586.25" y1="111.25" x2="586.25" y2="465.20" stroke="#e2e2e2" stroke-width="0.6"/>
<line x1="635.00" y1="111.25" x2="635.00" y2="465.20" stroke="#e2e2e2" stroke-width="0.6"/>
<line x1="682.25" y1="111.25" x2="682.25" y2="465.20" stroke="#e2e2e2" stroke-width="0.6"/>
<line x1="703.40" y1="111.25" x2="703.40" y2="465.20" stroke="#e2e2e2" stroke-width="0.6"/>
<line x1="729.40" y1="111.25" x2="729.40" y2="465.20" stroke="#e2e2e2" stroke-width="0.6"/>
<line x1="755.00" y1="111.25" x2="755.00" y2="465.20" stroke="#e2e2e2" stroke-width="0.6"/>
<line x1="780.60" y1="111.25" x2="780.60" y2="465.20" stroke="#e2e2e2" stroke-width="0.6"/>
<line x1="806.50" y1="111.25" x2="806.50" y2="465.20" stroke="#e2e2e2" stroke-width="0.6"/>
<line x1="831.90" y1="111.25" x2="831.90" y2="465.20" stroke="#e2e2e2" stroke-width="0.6"/>
<line x1="857.70" y1="111.25" x2="857.70" y2="465.20" stroke="#e2e2e2" stroke-width="0.6"/>
<line x1="883.50" y1="111.25" x2="883.50" y2="465.20" stroke="#e2e2e2" stroke-width="0.6"/>
<line x1="902.40" y1="111.25" x2="902.40" y2="465.20" stroke="#e2e2e2" stroke-width="0.6"/>
<path d="M10.70 119.35 L902.40 119.35 M10.70 127.44 L902.40 127.44 M10.70 135.54 L902.40 135.54 M10.70 143.64 L902.40 143.64 M10.70 151.74 L902.40 151.74 M10.70 159.83 L902.40 159.83 M10.70 167.93 L902.40 167.93 M10.70 176.03 L902.40 176.03 M10.70 184.12 L902.40 184.12 M10.70 192.22 L902.40 192.22 M10.70 200.32 L902.40 200.32 M10.70 208.41 L902.40 208.41 M10.70 216.51 L902.40 216.51 M10.70 224.61 L902.40 224.61 M10.70 232.70 L902.40 232.70 M10.70 240.80 L902.40 240.80 M10.70 248.90 L902.40 248.90 M10.70 257.00 L902.40 257.00 M10.70 265.09 L902.40 265.09 M10.70 273.19 L902.40 273.19 M10.70 281.29 L902.40 281.29 M10.70 289.38 L902.40 289.38 M10.70 297.48 L902.40 297.48 M10.70 305.58 L902.40 305.58 M10.70 313.67 L902.40 313.67 M10.70 321.77 L902.40 321.77 M10.70 329.87 L902.40 329.87 M10.70 337.97 L902.40 337.97 M10.70 346.06 L902.40 346.06 M10.70 354.16 L902.40 354.16 M10.70 362.26 L902.40 362.26 M10.70 370.35 L902.40 370.35 M10.70 378.45 L902.40 378.45 M10.70 386.55 L902.40 386.55 M10.70 394.64 L902.40 394.64 M10.70 402.74 L902.40 402.74 M10.70 410.84 L902.40 410.84 M10.70 418.94 L902.40 418.94 M10.70 427.03 L902.40 427.03 M10.70 435.13 L902.40 435.13 M10.70 443.23 L902.40 443.23 M10.70 451.32 L902.40 451.32 M10.70 459.42 L902.40 459.42 " stroke="#e2e2e2" stroke-width="0.6" fill="none"/>
<text x="5.40" y="117.75" font-size="5.72" fill="#606060" text-anchor="middle" textLength="2.89" lengthAdjust="spacingAndGlyphs" stroke="#606060" stroke-width="0.06">1</text>
<text x="5.40" y="125.84" font-size="5.72" fill="#606060" text-anchor="middle" textLength="2.89" lengthAdjust="spacingAndGlyphs" stroke="#606060" stroke-width="0.06">2</text>
<text x="5.40" y="133.94" font-size="5.72" fill="#606060" text-anchor="middle" textLength="2.89" lengthAdjust="spacingAndGlyphs" stroke="#606060" stroke-width="0.06">3</text>
<text x="5.40" y="142.04" font-size="5.72" fill="#606060" text-anchor="middle" textLength="2.89" lengthAdjust="spacingAndGlyphs" stroke="#606060" stroke-width="0.06">4</text>
<text x="5.40" y="150.14" font-size="5.72" fill="#606060" text-anchor="middle" textLength="2.89" lengthAdjust="spacingAndGlyphs" stroke="#606060" stroke-width="0.06">5</text>
<text x="5.40" y="158.23" font-size="5.72" fill="#606060" text-anchor="middle" textLength="2.89" lengthAdjust="spacingAndGlyphs" stroke="#606060" stroke-width="0.06">6</text>
<text x="5.40" y="166.33" font-size="5.72" fill="#606060" text-anchor="middle" textLength="2.89" lengthAdjust="spacingAndGlyphs" stroke="#606060" stroke-width="0.06">7</text>
<text x="5.40" y="174.43" font-size="5.72" fill="#606060" text-anchor="middle" textLength="2.89" lengthAdjust="spacingAndGlyphs" stroke="#606060" stroke-width="0.06">8</text>
<text x="5.40" y="182.52" font-size="5.72" fill="#606060" text-anchor="middle" textLength="2.89" lengthAdjust="spacingAndGlyphs" stroke="#606060" stroke-width="0.06">9</text>
<text x="5.40" y="190.62" font-size="5.72" fill="#606060" text-anchor="middle" textLength="5.78" lengthAdjust="spacingAndGlyphs" stroke="#606060" stroke-width="0.06">10</text>
<text x="5.40" y="198.72" font-size="5.72" fill="#606060" text-anchor="middle" textLength="5.40" lengthAdjust="spacingAndGlyphs" stroke="#606060" stroke-width="0.06">11</text>
<text x="5.40" y="206.81" font-size="5.72" fill="#606060" text-anchor="middle" textLength="5.78" lengthAdjust="spacingAndGlyphs" stroke="#606060" stroke-width="0.06">12</text>
<text x="5.40" y="214.91" font-size="5.72" fill="#606060" text-anchor="middle" textLength="5.78" lengthAdjust="spacingAndGlyphs" stroke="#606060" stroke-width="0.06">13</text>
<text x="5.40" y="223.01" font-size="5.72" fill="#606060" text-anchor="middle" textLength="5.78" lengthAdjust="spacingAndGlyphs" stroke="#606060" stroke-width="0.06">14</text>
<text x="5.40" y="231.10" font-size="5.72" fill="#606060" text-anchor="middle" textLength="5.78" lengthAdjust="spacingAndGlyphs" stroke="#606060" stroke-width="0.06">15</text>
<text x="5.40" y="239.20" font-size="5.72" fill="#606060" text-anchor="middle" textLength="5.78" lengthAdjust="spacingAndGlyphs" stroke="#606060" stroke-width="0.06">16</text>
<text x="5.40" y="247.30" font-size="5.72" fill="#606060" text-anchor="middle" textLength="5.78" lengthAdjust="spacingAndGlyphs" stroke="#606060" stroke-width="0.06">17</text>
<text x="5.40" y="255.40" font-size="5.72" fill="#606060" text-anchor="middle" textLength="5.78" lengthAdjust="spacingAndGlyphs" stroke="#606060" stroke-width="0.06">18</text>
<text x="5.40" y="263.49" font-size="5.72" fill="#606060" text-anchor="middle" textLength="5.78" lengthAdjust="spacingAndGlyphs" stroke="#606060" stroke-width="0.06">19</text>
<text x="5.40" y="271.59" font-size="5.72" fill="#606060" text-anchor="middle" textLength="5.78" lengthAdjust="spacingAndGlyphs" stroke="#606060" stroke-width="0.06">20</text>
<text x="5.40" y="279.69" font-size="5.72" fill="#606060" text-anchor="middle" textLength="5.78" lengthAdjust="spacingAndGlyphs" stroke="#606060" stroke-width="0.06">21</text>
<text x="5.40" y="287.78" font-size="5.72" fill="#606060" text-anchor="middle" textLength="5.78" lengthAdjust="spacingAndGlyphs" stroke="#606060" stroke-width="0.06">22</text>
<text x="5.40" y="295.88" font-size="5.72" fill="#606060" text-anchor="middle" textLength="5.78" lengthAdjust="spacingAndGlyphs" stroke="#606060" stroke-width="0.06">23</text>
<text x="5.40" y="303.98" font-size="5.72" fill="#606060" text-anchor="middle" textLength="5.78" lengthAdjust="spacingAndGlyphs" stroke="#606060" stroke-width="0.06">24</text>
<text x="5.40" y="312.07" font-size="5.72" fill="#606060" text-anchor="middle" textLength="5.78" lengthAdjust="spacingAndGlyphs" stroke="#606060" stroke-width="0.06">25</text>
<text x="5.40" y="320.17" font-size="5.72" fill="#606060" text-anchor="middle" textLength="5.78" lengthAdjust="spacingAndGlyphs" stroke="#606060" stroke-width="0.06">26</text>
<text x="5.40" y="328.27" font-size="5.72" fill="#606060" text-anchor="middle" textLength="5.78" lengthAdjust="spacingAndGlyphs" stroke="#606060" stroke-width="0.06">27</text>
<text x="5.40" y="336.37" font-size="5.72" fill="#606060" text-anchor="middle" textLength="5.78" lengthAdjust="spacingAndGlyphs" stroke="#606060" stroke-width="0.06">28</text>
<text x="5.40" y="344.46" font-size="5.72" fill="#606060" text-anchor="middle" textLength="5.78" lengthAdjust="spacingAndGlyphs" stroke="#606060" stroke-width="0.06">29</text>
<text x="5.40" y="352.56" font-size="5.72" fill="#606060" text-anchor="middle" textLength="5.78" lengthAdjust="spacingAndGlyphs" stroke="#606060" stroke-width="0.06">30</text>
<text x="5.40" y="360.66" font-size="5.72" fill="#606060" text-anchor="middle" textLength="5.78" lengthAdjust="spacingAndGlyphs" stroke="#606060" stroke-width="0.06">31</text>
<text x="5.40" y="368.75" font-size="5.72" fill="#606060" text-anchor="middle" textLength="5.78" lengthAdjust="spacingAndGlyphs" stroke="#606060" stroke-width="0.06">32</text>
<text x="5.40" y="376.85" font-size="5.72" fill="#606060" text-anchor="middle" textLength="5.78" lengthAdjust="spacingAndGlyphs" stroke="#606060" stroke-width="0.06">33</text>
<text x="5.40" y="384.95" font-size="5.72" fill="#606060" text-anchor="middle" textLength="5.78" lengthAdjust="spacingAndGlyphs" stroke="#606060" stroke-width="0.06">34</text>
<text x="5.40" y="393.04" font-size="5.72" fill="#606060" text-anchor="middle" textLength="5.78" lengthAdjust="spacingAndGlyphs" stroke="#606060" stroke-width="0.06">35</text>
<text x="5.40" y="401.14" font-size="5.72" fill="#606060" text-anchor="middle" textLength="5.78" lengthAdjust="spacingAndGlyphs" stroke="#606060" stroke-width="0.06">36</text>
<text x="5.40" y="409.24" font-size="5.72" fill="#606060" text-anchor="middle" textLength="5.78" lengthAdjust="spacingAndGlyphs" stroke="#606060" stroke-width="0.06">37</text>
<text x="5.40" y="417.34" font-size="5.72" fill="#606060" text-anchor="middle" textLength="5.78" lengthAdjust="spacingAndGlyphs" stroke="#606060" stroke-width="0.06">38</text>
<text x="5.40" y="425.43" font-size="5.72" fill="#606060" text-anchor="middle" textLength="5.78" lengthAdjust="spacingAndGlyphs" stroke="#606060" stroke-width="0.06">39</text>
<text x="5.40" y="433.53" font-size="5.72" fill="#606060" text-anchor="middle" textLength="5.78" lengthAdjust="spacingAndGlyphs" stroke="#606060" stroke-width="0.06">40</text>
<text x="5.40" y="441.63" font-size="5.72" fill="#606060" text-anchor="middle" textLength="5.78" lengthAdjust="spacingAndGlyphs" stroke="#606060" stroke-width="0.06">41</text>
<text x="5.40" y="449.72" font-size="5.72" fill="#606060" text-anchor="middle" textLength="5.78" lengthAdjust="spacingAndGlyphs" stroke="#606060" stroke-width="0.06">42</text>
<text x="5.40" y="457.82" font-size="5.72" fill="#606060" text-anchor="middle" textLength="5.78" lengthAdjust="spacingAndGlyphs" stroke="#606060" stroke-width="0.06">43</text>
<text x="5.40" y="465.92" font-size="5.72" fill="#606060" text-anchor="middle" textLength="5.78" lengthAdjust="spacingAndGlyphs" stroke="#606060" stroke-width="0.06">44</text>
<path d="M0 119.35 L10.70 119.35 M0 127.44 L10.70 127.44 M0 135.54 L10.70 135.54 M0 143.64 L10.70 143.64 M0 151.74 L10.70 151.74 M0 159.83 L10.70 159.83 M0 167.93 L10.70 167.93 M0 176.03 L10.70 176.03 M0 184.12 L10.70 184.12 M0 192.22 L10.70 192.22 M0 200.32 L10.70 200.32 M0 208.41 L10.70 208.41 M0 216.51 L10.70 216.51 M0 224.61 L10.70 224.61 M0 232.70 L10.70 232.70 M0 240.80 L10.70 240.80 M0 248.90 L10.70 248.90 M0 257.00 L10.70 257.00 M0 265.09 L10.70 265.09 M0 273.19 L10.70 273.19 M0 281.29 L10.70 281.29 M0 289.38 L10.70 289.38 M0 297.48 L10.70 297.48 M0 305.58 L10.70 305.58 M0 313.67 L10.70 313.67 M0 321.77 L10.70 321.77 M0 329.87 L10.70 329.87 M0 337.97 L10.70 337.97 M0 346.06 L10.70 346.06 M0 354.16 L10.70 354.16 M0 362.26 L10.70 362.26 M0 370.35 L10.70 370.35 M0 378.45 L10.70 378.45 M0 386.55 L10.70 386.55 M0 394.64 L10.70 394.64 M0 402.74 L10.70 402.74 M0 410.84 L10.70 410.84 M0 418.94 L10.70 418.94 M0 427.03 L10.70 427.03 M0 435.13 L10.70 435.13 M0 443.23 L10.70 443.23 M0 451.32 L10.70 451.32 M0 459.42 L10.70 459.42 " stroke="#dedede" stroke-width="0.5" fill="none"/>
<rect x="10.70" y="111.50" width="692.70" height="7.85" fill="#5b9bd5"/>
<path d="M10.70 119.35 L703.40 119.35 M10.70 127.44 L703.40 127.44 M10.70 135.54 L703.40 135.54 M10.70 143.64 L703.40 143.64 M10.70 151.74 L703.40 151.74 M10.70 159.83 L703.40 159.83 M10.70 167.93 L703.40 167.93 M10.70 176.03 L703.40 176.03 M10.70 184.12 L703.40 184.12 M10.70 192.22 L703.40 192.22 M10.70 200.32 L703.40 200.32 M10.70 208.41 L703.40 208.41 M10.70 216.51 L703.40 216.51 M10.70 224.61 L703.40 224.61 M10.70 232.70 L703.40 232.70 M10.70 240.80 L703.40 240.80 M10.70 248.90 L703.40 248.90 M10.70 257.00 L703.40 257.00 M10.70 265.09 L703.40 265.09 M10.70 273.19 L703.40 273.19 M10.70 281.29 L703.40 281.29 M10.70 289.38 L703.40 289.38 M10.70 297.48 L703.40 297.48 M10.70 305.58 L703.40 305.58 M10.70 313.67 L703.40 313.67 M10.70 321.77 L703.40 321.77 M10.70 329.87 L703.40 329.87 M10.70 337.97 L703.40 337.97 M10.70 346.06 L703.40 346.06 M10.70 354.16 L703.40 354.16 M10.70 362.26 L703.40 362.26 M10.70 370.35 L703.40 370.35 M10.70 378.45 L703.40 378.45 M10.70 386.55 L703.40 386.55 M10.70 394.64 L703.40 394.64 M10.70 402.74 L703.40 402.74 M10.70 410.84 L703.40 410.84 M10.70 418.94 L703.40 418.94 M10.70 427.03 L703.40 427.03 M10.70 435.13 L703.40 435.13 M10.70 443.23 L703.40 443.23 M10.70 451.32 L703.40 451.32 M10.70 459.42 L703.40 459.42 " stroke="#9bc2e6" stroke-width="0.9" fill="none"/>
<line x1="703.40" y1="111.25" x2="703.40" y2="465.20" stroke="#7fb0e0" stroke-width="0.8"/>
<defs><clipPath id="hc0"><rect x="10.70" y="111.25" width="37.70" height="8.10"/></clipPath><clipPath id="hc1"><rect x="56.40" y="111.25" width="67.20" height="8.10"/></clipPath><clipPath id="hc2"><rect x="131.60" y="111.25" width="32.00" height="8.10"/></clipPath><clipPath id="hc3"><rect x="171.60" y="111.25" width="42.30" height="8.10"/></clipPath><clipPath id="hc4"><rect x="221.90" y="111.25" width="32.30" height="8.10"/></clipPath><clipPath id="hc5"><rect x="262.20" y="111.25" width="32.20" height="8.10"/></clipPath><clipPath id="hc6"><rect x="302.40" y="111.25" width="27.10" height="8.10"/></clipPath><clipPath id="hc7"><rect x="337.50" y="111.25" width="32.60" height="8.10"/></clipPath><clipPath id="hc8"><rect x="378.10" y="111.25" width="29.65" height="8.10"/></clipPath><clipPath id="hc9"><rect x="415.75" y="111.25" width="41.85" height="8.10"/></clipPath><clipPath id="hc10"><rect x="465.60" y="111.25" width="27.65" height="8.10"/></clipPath><clipPath id="hc11"><rect x="501.25" y="111.25" width="44.25" height="8.10"/></clipPath><clipPath id="hc12"><rect x="553.50" y="111.25" width="24.75" height="8.10"/></clipPath><clipPath id="hc13"><rect x="586.25" y="111.25" width="40.75" height="8.10"/></clipPath><clipPath id="hc14"><rect x="635.00" y="111.25" width="39.25" height="8.10"/></clipPath><clipPath id="hc15"><rect x="682.25" y="111.25" width="13.15" height="8.10"/></clipPath></defs>
<text x="12.10" y="117.75" font-size="5.32" fill="#ffffff" font-weight="700" clip-path="url(#hc0)" xml:space="preserve" textLength="20.06" lengthAdjust="spacingAndGlyphs">Segment</text>
<rect x="48.90" y="112.80" width="7.00" height="6.30" fill="#ffffff"/>
<path d="M51.10 115.2 L53.70 115.2 L52.40 116.8Z" fill="#555"/>
<text x="57.80" y="117.75" font-size="5.32" fill="#ffffff" font-weight="700" clip-path="url(#hc1)" xml:space="preserve" textLength="18.21" lengthAdjust="spacingAndGlyphs">Country</text>
<rect x="124.10" y="112.80" width="7.00" height="6.30" fill="#ffffff"/>
<path d="M126.30 115.2 L128.90 115.2 L127.60 116.8Z" fill="#555"/>
<text x="133.00" y="117.75" font-size="5.32" fill="#ffffff" font-weight="700" clip-path="url(#hc2)" xml:space="preserve" textLength="19.26" lengthAdjust="spacingAndGlyphs"> Product</text>
<rect x="164.10" y="112.80" width="7.00" height="6.30" fill="#ffffff"/>
<path d="M166.30 115.2 L168.90 115.2 L167.60 116.8Z" fill="#555"/>
<text x="173.00" y="117.75" font-size="5.32" fill="#ffffff" font-weight="700" clip-path="url(#hc3)" xml:space="preserve" textLength="34.83" lengthAdjust="spacingAndGlyphs"> Discount Band</text>
<rect x="214.40" y="112.80" width="7.00" height="6.30" fill="#ffffff"/>
<path d="M216.60 115.2 L219.20 115.2 L217.90 116.8Z" fill="#555"/>
<text x="223.30" y="117.75" font-size="5.32" fill="#ffffff" font-weight="700" clip-path="url(#hc4)" xml:space="preserve" textLength="23.49" lengthAdjust="spacingAndGlyphs">Units Sold</text>
<rect x="254.70" y="112.80" width="7.00" height="6.30" fill="#ffffff"/>
<path d="M256.90 115.2 L259.50 115.2 L258.20 116.8Z" fill="#555"/>
<text x="263.60" y="117.75" font-size="5.32" fill="#ffffff" font-weight="700" clip-path="url(#hc5)" xml:space="preserve" textLength="46.98" lengthAdjust="spacingAndGlyphs"> Manufacturing Price</text>
<rect x="294.90" y="112.80" width="7.00" height="6.30" fill="#ffffff"/>
<path d="M297.10 115.2 L299.70 115.2 L298.40 116.8Z" fill="#555"/>
<text x="303.80" y="117.75" font-size="5.32" fill="#ffffff" font-weight="700" clip-path="url(#hc6)" xml:space="preserve" textLength="24.03" lengthAdjust="spacingAndGlyphs"> Sale Price</text>
<rect x="330.00" y="112.80" width="7.00" height="6.30" fill="#ffffff"/>
<path d="M332.20 115.2 L334.80 115.2 L333.50 116.8Z" fill="#555"/>
<text x="338.90" y="117.75" font-size="5.32" fill="#ffffff" font-weight="700" clip-path="url(#hc7)" xml:space="preserve" textLength="28.78" lengthAdjust="spacingAndGlyphs"> Gross Sales</text>
<rect x="370.60" y="112.80" width="7.00" height="6.30" fill="#ffffff"/>
<path d="M372.80 115.2 L375.40 115.2 L374.10 116.8Z" fill="#555"/>
<text x="379.50" y="117.75" font-size="5.32" fill="#ffffff" font-weight="700" clip-path="url(#hc8)" xml:space="preserve" textLength="24.28" lengthAdjust="spacingAndGlyphs"> Discounts</text>
<rect x="408.25" y="112.80" width="7.00" height="6.30" fill="#ffffff"/>
<path d="M410.45 115.2 L413.05 115.2 L411.75 116.8Z" fill="#555"/>
<text x="417.15" y="117.75" font-size="5.32" fill="#ffffff" font-weight="700" clip-path="url(#hc9)" xml:space="preserve" textLength="15.05" lengthAdjust="spacingAndGlyphs">  Sales</text>
<rect x="458.10" y="112.80" width="7.00" height="6.30" fill="#ffffff"/>
<path d="M460.30 115.2 L462.90 115.2 L461.60 116.8Z" fill="#555"/>
<text x="467.00" y="117.75" font-size="5.32" fill="#ffffff" font-weight="700" clip-path="url(#hc10)" xml:space="preserve" textLength="15.31" lengthAdjust="spacingAndGlyphs"> COGS</text>
<rect x="493.75" y="112.80" width="7.00" height="6.30" fill="#ffffff"/>
<path d="M495.95 115.2 L498.55 115.2 L497.25 116.8Z" fill="#555"/>
<text x="502.65" y="117.75" font-size="5.32" fill="#ffffff" font-weight="700" clip-path="url(#hc11)" xml:space="preserve" textLength="13.72" lengthAdjust="spacingAndGlyphs"> Profit</text>
<rect x="546.00" y="112.80" width="7.00" height="6.30" fill="#ffffff"/>
<path d="M548.20 115.2 L550.80 115.2 L549.50 116.8Z" fill="#555"/>
<text x="554.90" y="117.75" font-size="5.32" fill="#ffffff" font-weight="700" clip-path="url(#hc12)" xml:space="preserve" textLength="10.30" lengthAdjust="spacingAndGlyphs">Date</text>
<rect x="578.75" y="112.80" width="7.00" height="6.30" fill="#ffffff"/>
<path d="M580.95 115.2 L583.55 115.2 L582.25 116.8Z" fill="#555"/>
<text x="587.65" y="117.75" font-size="5.32" fill="#ffffff" font-weight="700" clip-path="url(#hc13)" xml:space="preserve" textLength="33.51" lengthAdjust="spacingAndGlyphs">Month Number</text>
<rect x="627.50" y="112.80" width="7.00" height="6.30" fill="#ffffff"/>
<path d="M629.70 115.2 L632.30 115.2 L631.00 116.8Z" fill="#555"/>
<text x="636.40" y="117.75" font-size="5.32" fill="#ffffff" font-weight="700" clip-path="url(#hc14)" xml:space="preserve" textLength="29.82" lengthAdjust="spacingAndGlyphs"> Month Name</text>
<rect x="674.75" y="112.80" width="7.00" height="6.30" fill="#ffffff"/>
<path d="M676.95 115.2 L679.55 115.2 L678.25 116.8Z" fill="#555"/>
<text x="683.65" y="117.75" font-size="5.32" fill="#ffffff" font-weight="700" clip-path="url(#hc15)" xml:space="preserve" textLength="10.04" lengthAdjust="spacingAndGlyphs">Year</text>
<rect x="695.90" y="112.80" width="7.00" height="6.30" fill="#ffffff"/>
<path d="M698.10 115.2 L700.70 115.2 L699.40 116.8Z" fill="#555"/>
<defs><clipPath id="cc0"><rect x="10.70" y="111.25" width="45.70" height="353.95"/></clipPath><clipPath id="cc1"><rect x="56.40" y="111.25" width="75.20" height="353.95"/></clipPath><clipPath id="cc2"><rect x="131.60" y="111.25" width="40.00" height="353.95"/></clipPath><clipPath id="cc3"><rect x="171.60" y="111.25" width="50.30" height="353.95"/></clipPath><clipPath id="cc4"><rect x="221.90" y="111.25" width="40.30" height="353.95"/></clipPath><clipPath id="cc5"><rect x="262.20" y="111.25" width="40.20" height="353.95"/></clipPath><clipPath id="cc6"><rect x="302.40" y="111.25" width="35.10" height="353.95"/></clipPath><clipPath id="cc7"><rect x="337.50" y="111.25" width="40.60" height="353.95"/></clipPath><clipPath id="cc8"><rect x="378.10" y="111.25" width="37.65" height="353.95"/></clipPath><clipPath id="cc9"><rect x="415.75" y="111.25" width="49.85" height="353.95"/></clipPath><clipPath id="cc10"><rect x="465.60" y="111.25" width="35.65" height="353.95"/></clipPath><clipPath id="cc11"><rect x="501.25" y="111.25" width="52.25" height="353.95"/></clipPath><clipPath id="cc12"><rect x="553.50" y="111.25" width="32.75" height="353.95"/></clipPath><clipPath id="cc13"><rect x="586.25" y="111.25" width="48.75" height="353.95"/></clipPath><clipPath id="cc14"><rect x="635.00" y="111.25" width="47.25" height="353.95"/></clipPath><clipPath id="cc15"><rect x="682.25" y="111.25" width="21.15" height="353.95"/></clipPath><clipPath id="cc16"><rect x="703.40" y="111.25" width="26.00" height="353.95"/></clipPath><clipPath id="cc17"><rect x="729.40" y="111.25" width="25.60" height="353.95"/></clipPath><clipPath id="cc18"><rect x="755.00" y="111.25" width="25.60" height="353.95"/></clipPath><clipPath id="cc19"><rect x="780.60" y="111.25" width="25.90" height="353.95"/></clipPath><clipPath id="cc20"><rect x="806.50" y="111.25" width="25.40" height="353.95"/></clipPath><clipPath id="cc21"><rect x="831.90" y="111.25" width="25.80" height="353.95"/></clipPath><clipPath id="cc22"><rect x="857.70" y="111.25" width="25.80" height="353.95"/></clipPath><clipPath id="cc23"><rect x="883.50" y="111.25" width="18.90" height="353.95"/></clipPath></defs>
<g clip-path="url(#gridclip)">
<defs><clipPath id="gridclip"><rect x="10.7" y="111.25" width="891.6999999999999" height="353.95"/></clipPath></defs>
<text x="11.90" y="126.14" font-size="5.985" fill="#1a1a1a" clip-path="url(#cc0)" textLength="31.36" lengthAdjust="spacingAndGlyphs" stroke="#1a1a1a" stroke-width="0.05">Government</text>
<text x="57.80" y="126.14" font-size="5.985" fill="#1a1a1a" clip-path="url(#cc1)" textLength="19.97" lengthAdjust="spacingAndGlyphs" stroke="#1a1a1a" stroke-width="0.05">Canada</text>
<text x="132.90" y="126.14" font-size="5.985" fill="#1a1a1a" xml:space="preserve" textLength="25.66" lengthAdjust="spacingAndGlyphs" stroke="#1a1a1a" stroke-width="0.05"> Carretera</text>
<text x="172.90" y="126.14" font-size="5.985" fill="#1a1a1a" xml:space="preserve" textLength="15.21" lengthAdjust="spacingAndGlyphs" stroke="#1a1a1a" stroke-width="0.05"> None</text>
<text x="260.80" y="126.14" font-size="5.7225" fill="#1a1a1a" text-anchor="end" textLength="15.83" lengthAdjust="spacingAndGlyphs" stroke="#1a1a1a" stroke-width="0.05">1618.5</text>
<text x="265.20" y="126.14" font-size="5.723" fill="#1a1a1a" textLength="3.03" lengthAdjust="spacingAndGlyphs" stroke="#1a1a1a" stroke-width="0.05">$</text>
<text x="299.60" y="126.14" font-size="5.7225" fill="#1a1a1a" text-anchor="end" textLength="10.07" lengthAdjust="spacingAndGlyphs" stroke="#1a1a1a" stroke-width="0.05">3.00</text>
<text x="305.40" y="126.14" font-size="5.723" fill="#1a1a1a" textLength="3.03" lengthAdjust="spacingAndGlyphs" stroke="#1a1a1a" stroke-width="0.05">$</text>
<text x="334.70" y="126.14" font-size="5.7225" fill="#1a1a1a" text-anchor="end" textLength="12.95" lengthAdjust="spacingAndGlyphs" stroke="#1a1a1a" stroke-width="0.05">20.00</text>
<text x="340.50" y="126.14" font-size="5.723" fill="#1a1a1a" textLength="3.03" lengthAdjust="spacingAndGlyphs" stroke="#1a1a1a" stroke-width="0.05">$</text>
<text x="375.30" y="126.14" font-size="5.7225" fill="#1a1a1a" text-anchor="end" textLength="23.00" lengthAdjust="spacingAndGlyphs" stroke="#1a1a1a" stroke-width="0.05">32,370.00</text>
<text x="418.75" y="126.14" font-size="5.723" fill="#1a1a1a" textLength="3.03" lengthAdjust="spacingAndGlyphs" stroke="#1a1a1a" stroke-width="0.05">$</text>
<text x="462.80" y="126.14" font-size="5.7225" fill="#1a1a1a" text-anchor="end" textLength="23.00" lengthAdjust="spacingAndGlyphs" stroke="#1a1a1a" stroke-width="0.05">32,370.00</text>
<text x="381.10" y="126.14" font-size="5.723" fill="#1a1a1a" textLength="3.03" lengthAdjust="spacingAndGlyphs" stroke="#1a1a1a" stroke-width="0.05">$</text>
<text x="406.75" y="126.14" font-size="5.7225" fill="#1a1a1a" text-anchor="end" textLength="1.74" lengthAdjust="spacingAndGlyphs" stroke="#1a1a1a" stroke-width="0.05">-</text>
<text x="468.60" y="126.14" font-size="5.723" fill="#1a1a1a" textLength="3.03" lengthAdjust="spacingAndGlyphs" stroke="#1a1a1a" stroke-width="0.05">$</text>
<text x="498.45" y="126.14" font-size="5.7225" fill="#1a1a1a" text-anchor="end" textLength="23.00" lengthAdjust="spacingAndGlyphs" stroke="#1a1a1a" stroke-width="0.05">16,185.00</text>
<text x="504.25" y="126.14" font-size="5.723" fill="#1a1a1a" textLength="3.03" lengthAdjust="spacingAndGlyphs" stroke="#1a1a1a" stroke-width="0.05">$</text>
<text x="550.70" y="126.14" font-size="5.7225" fill="#1a1a1a" text-anchor="end" textLength="23.00" lengthAdjust="spacingAndGlyphs" stroke="#1a1a1a" stroke-width="0.05">16,185.00</text>
<text x="585.05" y="126.14" font-size="5.7225" fill="#1a1a1a" text-anchor="end" textLength="22.04" lengthAdjust="spacingAndGlyphs" stroke="#1a1a1a" stroke-width="0.05">1/1/2014</text>
<text x="633.70" y="126.14" font-size="5.7225" fill="#1a1a1a" text-anchor="end" textLength="2.88" lengthAdjust="spacingAndGlyphs" stroke="#1a1a1a" stroke-width="0.05">1</text>
<text x="636.30" y="126.14" font-size="5.985" fill="#1a1a1a" xml:space="preserve" textLength="21.86" lengthAdjust="spacingAndGlyphs" stroke="#1a1a1a" stroke-width="0.05"> January</text>
<text x="683.55" y="126.14" font-size="5.7225" fill="#1a1a1a" textLength="11.51" lengthAdjust="spacingAndGlyphs" stroke="#1a1a1a" stroke-width="0.05">2014</text>
<path d="M682.55 119.80 L685.15 119.80 L682.55 121.95Z" fill="#1a8a36"/>
<text x="11.90" y="134.24" font-size="5.985" fill="#1a1a1a" clip-path="url(#cc0)" textLength="31.36" lengthAdjust="spacingAndGlyphs" stroke="#1a1a1a" stroke-width="0.05">Government</text>
<text x="57.80" y="134.24" font-size="5.985" fill="#1a1a1a" clip-path="url(#cc1)" textLength="23.44" lengthAdjust="spacingAndGlyphs" stroke="#1a1a1a" stroke-width="0.05">Germany</text>
<text x="132.90" y="134.24" font-size="5.985" fill="#1a1a1a" xml:space="preserve" textLength="25.66" lengthAdjust="spacingAndGlyphs" stroke="#1a1a1a" stroke-width="0.05"> Carretera</text>
<text x="172.90" y="134.24" font-size="5.985" fill="#1a1a1a" xml:space="preserve" textLength="15.21" lengthAdjust="spacingAndGlyphs" stroke="#1a1a1a" stroke-width="0.05"> None</text>
<text x="260.80" y="134.24" font-size="5.7225" fill="#1a1a1a" text-anchor="end" textLength="11.51" lengthAdjust="spacingAndGlyphs" stroke="#1a1a1a" stroke-width="0.05">1321</text>
<text x="265.20" y="134.24" font-size="5.723" fill="#1a1a1a" textLength="3.03" lengthAdjust="spacingAndGlyphs" stroke="#1a1a1a" stroke-width="0.05">$</text>
<text x="299.60" y="134.24" font-size="5.7225" fill="#1a1a1a" text-anchor="end" textLength="10.07" lengthAdjust="spacingAndGlyphs" stroke="#1a1a1a" stroke-width="0.05">3.00</text>
<text x="305.40" y="134.24" font-size="5.723" fill="#1a1a1a" textLength="3.03" lengthAdjust="spacingAndGlyphs" stroke="#1a1a1a" stroke-width="0.05">$</text>
<text x="334.70" y="134.24" font-size="5.7225" fill="#1a1a1a" text-anchor="end" textLength="12.95" lengthAdjust="spacingAndGlyphs" stroke="#1a1a1a" stroke-width="0.05">20.00</text>
<text x="340.50" y="134.24" font-size="5.723" fill="#1a1a1a" textLength="3.03" lengthAdjust="spacingAndGlyphs" stroke="#1a1a1a" stroke-width="0.05">$</text>
<text x="375.30" y="134.24" font-size="5.7225" fill="#1a1a1a" text-anchor="end" textLength="23.00" lengthAdjust="spacingAndGlyphs" stroke="#1a1a1a" stroke-width="0.05">26,420.00</text>
<text x="418.75" y="134.24" font-size="5.723" fill="#1a1a1a" textLength="3.03" lengthAdjust="spacingAndGlyphs" stroke="#1a1a1a" stroke-width="0.05">$</text>
<text x="462.80" y="134.24" font-size="5.7225" fill="#1a1a1a" text-anchor="end" textLength="23.00" lengthAdjust="spacingAndGlyphs" stroke="#1a1a1a" stroke-width="0.05">26,420.00</text>
<text x="381.10" y="134.24" font-size="5.723" fill="#1a1a1a" textLength="3.03" lengthAdjust="spacingAndGlyphs" stroke="#1a1a1a" stroke-width="0.05">$</text>
<text x="406.75" y="134.24" font-size="5.7225" fill="#1a1a1a" text-anchor="end" textLength="1.74" lengthAdjust="spacingAndGlyphs" stroke="#1a1a1a" stroke-width="0.05">-</text>
<text x="468.60" y="134.24" font-size="5.723" fill="#1a1a1a" textLength="3.03" lengthAdjust="spacingAndGlyphs" stroke="#1a1a1a" stroke-width="0.05">$</text>
<text x="498.45" y="134.24" font-size="5.7225" fill="#1a1a1a" text-anchor="end" textLength="23.00" lengthAdjust="spacingAndGlyphs" stroke="#1a1a1a" stroke-width="0.05">13,210.00</text>
<text x="504.25" y="134.24" font-size="5.723" fill="#1a1a1a" textLength="3.03" lengthAdjust="spacingAndGlyphs" stroke="#1a1a1a" stroke-width="0.05">$</text>
<text x="550.70" y="134.24" font-size="5.7225" fill="#1a1a1a" text-anchor="end" textLength="23.00" lengthAdjust="spacingAndGlyphs" stroke="#1a1a1a" stroke-width="0.05">13,210.00</text>
<text x="585.05" y="134.24" font-size="5.7225" fill="#1a1a1a" text-anchor="end" textLength="22.04" lengthAdjust="spacingAndGlyphs" stroke="#1a1a1a" stroke-width="0.05">1/1/2014</text>
<text x="633.70" y="134.24" font-size="5.7225" fill="#1a1a1a" text-anchor="end" textLength="2.88" lengthAdjust="spacingAndGlyphs" stroke="#1a1a1a" stroke-width="0.05">1</text>
<text x="636.30" y="134.24" font-size="5.985" fill="#1a1a1a" xml:space="preserve" textLength="21.86" lengthAdjust="spacingAndGlyphs" stroke="#1a1a1a" stroke-width="0.05"> January</text>
<text x="683.55" y="134.24" font-size="5.7225" fill="#1a1a1a" textLength="11.51" lengthAdjust="spacingAndGlyphs" stroke="#1a1a1a" stroke-width="0.05">2014</text>
<path d="M682.55 127.89 L685.15 127.89 L682.55 130.04Z" fill="#1a8a36"/>
<text x="11.90" y="142.34" font-size="5.985" fill="#1a1a1a" clip-path="url(#cc0)" textLength="26.60" lengthAdjust="spacingAndGlyphs" stroke="#1a1a1a" stroke-width="0.05">Midmarket</text>
<text x="57.80" y="142.34" font-size="5.985" fill="#1a1a1a" clip-path="url(#cc1)" textLength="17.74" lengthAdjust="spacingAndGlyphs" stroke="#1a1a1a" stroke-width="0.05">France</text>
<text x="132.90" y="142.34" font-size="5.985" fill="#1a1a1a" xml:space="preserve" textLength="25.66" lengthAdjust="spacingAndGlyphs" stroke="#1a1a1a" stroke-width="0.05"> Carretera</text>
<text x="172.90" y="142.34" font-size="5.985" fill="#1a1a1a" xml:space="preserve" textLength="15.21" lengthAdjust="spacingAndGlyphs" stroke="#1a1a1a" stroke-width="0.05"> None</text>
<text x="260.80" y="142.34" font-size="5.7225" fill="#1a1a1a" text-anchor="end" textLength="11.51" lengthAdjust="spacingAndGlyphs" stroke="#1a1a1a" stroke-width="0.05">2178</text>
<text x="265.20" y="142.34" font-size="5.723" fill="#1a1a1a" textLength="3.03" lengthAdjust="spacingAndGlyphs" stroke="#1a1a1a" stroke-width="0.05">$</text>
<text x="299.60" y="142.34" font-size="5.7225" fill="#1a1a1a" text-anchor="end" textLength="10.07" lengthAdjust="spacingAndGlyphs" stroke="#1a1a1a" stroke-width="0.05">3.00</text>
<text x="305.40" y="142.34" font-size="5.723" fill="#1a1a1a" textLength="3.03" lengthAdjust="spacingAndGlyphs" stroke="#1a1a1a" stroke-width="0.05">$</text>
<text x="334.70" y="142.34" font-size="5.7225" fill="#1a1a1a" text-anchor="end" textLength="12.95" lengthAdjust="spacingAndGlyphs" stroke="#1a1a1a" stroke-width="0.05">15.00</text>
<text x="340.50" y="142.34" font-size="5.723" fill="#1a1a1a" textLength="3.03" lengthAdjust="spacingAndGlyphs" stroke="#1a1a1a" stroke-width="0.05">$</text>
<text x="375.30" y="142.34" font-size="5.7225" fill="#1a1a1a" text-anchor="end" textLength="23.00" lengthAdjust="spacingAndGlyphs" stroke="#1a1a1a" stroke-width="0.05">32,670.00</text>
<text x="418.75" y="142.34" font-size="5.723" fill="#1a1a1a" textLength="3.03" lengthAdjust="spacingAndGlyphs" stroke="#1a1a1a" stroke-width="0.05">$</text>
<text x="462.80" y="142.34" font-size="5.7225" fill="#1a1a1a" text-anchor="end" textLength="23.00" lengthAdjust="spacingAndGlyphs" stroke="#1a1a1a" stroke-width="0.05">32,670.00</text>
<text x="381.10" y="142.34" font-size="5.723" fill="#1a1a1a" textLength="3.03" lengthAdjust="spacingAndGlyphs" stroke="#1a1a1a" stroke-width="0.05">$</text>
<text x="406.75" y="142.34" font-size="5.7225" fill="#1a1a1a" text-anchor="end" textLength="1.74" lengthAdjust="spacingAndGlyphs" stroke="#1a1a1a" stroke-width="0.05">-</text>
<text x="468.60" y="142.34" font-size="5.723" fill="#1a1a1a" textLength="3.03" lengthAdjust="spacingAndGlyphs" stroke="#1a1a1a" stroke-width="0.05">$</text>
<text x="498.45" y="142.34" font-size="5.7225" fill="#1a1a1a" text-anchor="end" textLength="23.00" lengthAdjust="spacingAndGlyphs" stroke="#1a1a1a" stroke-width="0.05">21,780.00</text>
<text x="504.25" y="142.34" font-size="5.723" fill="#1a1a1a" textLength="3.03" lengthAdjust="spacingAndGlyphs" stroke="#1a1a1a" stroke-width="0.05">$</text>
<text x="550.70" y="142.34" font-size="5.7225" fill="#1a1a1a" text-anchor="end" textLength="23.00" lengthAdjust="spacingAndGlyphs" stroke="#1a1a1a" stroke-width="0.05">10,890.00</text>
<text x="585.05" y="142.34" font-size="5.7225" fill="#1a1a1a" text-anchor="end" textLength="22.04" lengthAdjust="spacingAndGlyphs" stroke="#1a1a1a" stroke-width="0.05">6/1/2014</text>
<text x="633.70" y="142.34" font-size="5.7225" fill="#1a1a1a" text-anchor="end" textLength="2.88" lengthAdjust="spacingAndGlyphs" stroke="#1a1a1a" stroke-width="0.05">6</text>
<text x="636.30" y="142.34" font-size="5.985" fill="#1a1a1a" xml:space="preserve" textLength="13.94" lengthAdjust="spacingAndGlyphs" stroke="#1a1a1a" stroke-width="0.05"> June</text>
<text x="683.55" y="142.34" font-size="5.7225" fill="#1a1a1a" textLength="11.51" lengthAdjust="spacingAndGlyphs" stroke="#1a1a1a" stroke-width="0.05">2014</text>
<path d="M682.55 135.99 L685.15 135.99 L682.55 138.14Z" fill="#1a8a36"/>
<text x="11.90" y="150.44" font-size="5.985" fill="#1a1a1a" clip-path="url(#cc0)" textLength="26.60" lengthAdjust="spacingAndGlyphs" stroke="#1a1a1a" stroke-width="0.05">Midmarket</text>
<text x="57.80" y="150.44" font-size="5.985" fill="#1a1a1a" clip-path="url(#cc1)" textLength="23.44" lengthAdjust="spacingAndGlyphs" stroke="#1a1a1a" stroke-width="0.05">Germany</text>
<text x="132.90" y="150.44" font-size="5.985" fill="#1a1a1a" xml:space="preserve" textLength="25.66" lengthAdjust="spacingAndGlyphs" stroke="#1a1a1a" stroke-width="0.05"> Carretera</text>
<text x="172.90" y="150.44" font-size="5.985" fill="#1a1a1a" xml:space="preserve" textLength="15.21" lengthAdjust="spacingAndGlyphs" stroke="#1a1a1a" stroke-width="0.05"> None</text>
<text x="260.80" y="150.44" font-size="5.7225" fill="#1a1a1a" text-anchor="end" textLength="8.64" lengthAdjust="spacingAndGlyphs" stroke="#1a1a1a" stroke-width="0.05">888</text>
<text x="265.20" y="150.44" font-size="5.723" fill="#1a1a1a" textLength="3.03" lengthAdjust="spacingAndGlyphs" stroke="#1a1a1a" stroke-width="0.05">$</text>
<text x="299.60" y="150.44" font-size="5.7225" fill="#1a1a1a" text-anchor="end" textLength="10.07" lengthAdjust="spacingAndGlyphs" stroke="#1a1a1a" stroke-width="0.05">3.00</text>
<text x="305.40" y="150.44" font-size="5.723" fill="#1a1a1a" textLength="3.03" lengthAdjust="spacingAndGlyphs" stroke="#1a1a1a" stroke-width="0.05">$</text>
<text x="334.70" y="150.44" font-size="5.7225" fill="#1a1a1a" text-anchor="end" textLength="12.95" lengthAdjust="spacingAndGlyphs" stroke="#1a1a1a" stroke-width="0.05">15.00</text>
<text x="340.50" y="150.44" font-size="5.723" fill="#1a1a1a" textLength="3.03" lengthAdjust="spacingAndGlyphs" stroke="#1a1a1a" stroke-width="0.05">$</text>
<text x="375.30" y="150.44" font-size="5.7225" fill="#1a1a1a" text-anchor="end" textLength="23.00" lengthAdjust="spacingAndGlyphs" stroke="#1a1a1a" stroke-width="0.05">13,320.00</text>
<text x="418.75" y="150.44" font-size="5.723" fill="#1a1a1a" textLength="3.03" lengthAdjust="spacingAndGlyphs" stroke="#1a1a1a" stroke-width="0.05">$</text>
<text x="462.80" y="150.44" font-size="5.7225" fill="#1a1a1a" text-anchor="end" textLength="23.00" lengthAdjust="spacingAndGlyphs" stroke="#1a1a1a" stroke-width="0.05">13,320.00</text>
<text x="381.10" y="150.44" font-size="5.723" fill="#1a1a1a" textLength="3.03" lengthAdjust="spacingAndGlyphs" stroke="#1a1a1a" stroke-width="0.05">$</text>
<text x="406.75" y="150.44" font-size="5.7225" fill="#1a1a1a" text-anchor="end" textLength="1.74" lengthAdjust="spacingAndGlyphs" stroke="#1a1a1a" stroke-width="0.05">-</text>
<text x="468.60" y="150.44" font-size="5.723" fill="#1a1a1a" textLength="3.03" lengthAdjust="spacingAndGlyphs" stroke="#1a1a1a" stroke-width="0.05">$</text>
<text x="498.45" y="150.44" font-size="5.7225" fill="#1a1a1a" text-anchor="end" textLength="20.12" lengthAdjust="spacingAndGlyphs" stroke="#1a1a1a" stroke-width="0.05">8,880.00</text>
<text x="504.25" y="150.44" font-size="5.723" fill="#1a1a1a" textLength="3.03" lengthAdjust="spacingAndGlyphs" stroke="#1a1a1a" stroke-width="0.05">$</text>
<text x="550.70" y="150.44" font-size="5.7225" fill="#1a1a1a" text-anchor="end" textLength="20.12" lengthAdjust="spacingAndGlyphs" stroke="#1a1a1a" stroke-width="0.05">4,440.00</text>
<text x="585.05" y="150.44" font-size="5.7225" fill="#1a1a1a" text-anchor="end" textLength="22.04" lengthAdjust="spacingAndGlyphs" stroke="#1a1a1a" stroke-width="0.05">6/1/2014</text>
<text x="633.70" y="150.44" font-size="5.7225" fill="#1a1a1a" text-anchor="end" textLength="2.88" lengthAdjust="spacingAndGlyphs" stroke="#1a1a1a" stroke-width="0.05">6</text>
<text x="636.30" y="150.44" font-size="5.985" fill="#1a1a1a" xml:space="preserve" textLength="13.94" lengthAdjust="spacingAndGlyphs" stroke="#1a1a1a" stroke-width="0.05"> June</text>
<text x="683.55" y="150.44" font-size="5.7225" fill="#1a1a1a" textLength="11.51" lengthAdjust="spacingAndGlyphs" stroke="#1a1a1a" stroke-width="0.05">2014</text>
<path d="M682.55 144.09 L685.15 144.09 L682.55 146.24Z" fill="#1a8a36"/>
<text x="11.90" y="158.53" font-size="5.985" fill="#1a1a1a" clip-path="url(#cc0)" textLength="26.60" lengthAdjust="spacingAndGlyphs" stroke="#1a1a1a" stroke-width="0.05">Midmarket</text>
<text x="57.80" y="158.53" font-size="5.985" fill="#1a1a1a" clip-path="url(#cc1)" textLength="18.05" lengthAdjust="spacingAndGlyphs" stroke="#1a1a1a" stroke-width="0.05">Mexico</text>
<text x="132.90" y="158.53" font-size="5.985" fill="#1a1a1a" xml:space="preserve" textLength="25.66" lengthAdjust="spacingAndGlyphs" stroke="#1a1a1a" stroke-width="0.05"> Carretera</text>
<text x="172.90" y="158.53" font-size="5.985" fill="#1a1a1a" xml:space="preserve" textLength="15.21" lengthAdjust="spacingAndGlyphs" stroke="#1a1a1a" stroke-width="0.05"> None</text>
<text x="260.80" y="158.53" font-size="5.7225" fill="#1a1a1a" text-anchor="end" textLength="11.51" lengthAdjust="spacingAndGlyphs" stroke="#1a1a1a" stroke-width="0.05">2470</text>
<text x="265.20" y="158.53" font-size="5.723" fill="#1a1a1a" textLength="3.03" lengthAdjust="spacingAndGlyphs" stroke="#1a1a1a" stroke-width="0.05">$</text>
<text x="299.60" y="158.53" font-size="5.7225" fill="#1a1a1a" text-anchor="end" textLength="10.07" lengthAdjust="spacingAndGlyphs" stroke="#1a1a1a" stroke-width="0.05">3.00</text>
<text x="305.40" y="158.53" font-size="5.723" fill="#1a1a1a" textLength="3.03" lengthAdjust="spacingAndGlyphs" stroke="#1a1a1a" stroke-width="0.05">$</text>
<text x="334.70" y="158.53" font-size="5.7225" fill="#1a1a1a" text-anchor="end" textLength="12.95" lengthAdjust="spacingAndGlyphs" stroke="#1a1a1a" stroke-width="0.05">15.00</text>
<text x="340.50" y="158.53" font-size="5.723" fill="#1a1a1a" textLength="3.03" lengthAdjust="spacingAndGlyphs" stroke="#1a1a1a" stroke-width="0.05">$</text>
<text x="375.30" y="158.53" font-size="5.7225" fill="#1a1a1a" text-anchor="end" textLength="23.00" lengthAdjust="spacingAndGlyphs" stroke="#1a1a1a" stroke-width="0.05">37,050.00</text>
<text x="418.75" y="158.53" font-size="5.723" fill="#1a1a1a" textLength="3.03" lengthAdjust="spacingAndGlyphs" stroke="#1a1a1a" stroke-width="0.05">$</text>
<text x="462.80" y="158.53" font-size="5.7225" fill="#1a1a1a" text-anchor="end" textLength="23.00" lengthAdjust="spacingAndGlyphs" stroke="#1a1a1a" stroke-width="0.05">37,050.00</text>
<text x="381.10" y="158.53" font-size="5.723" fill="#1a1a1a" textLength="3.03" lengthAdjust="spacingAndGlyphs" stroke="#1a1a1a" stroke-width="0.05">$</text>
<text x="406.75" y="158.53" font-size="5.7225" fill="#1a1a1a" text-anchor="end" textLength="1.74" lengthAdjust="spacingAndGlyphs" stroke="#1a1a1a" stroke-width="0.05">-</text>
<text x="468.60" y="158.53" font-size="5.723" fill="#1a1a1a" textLength="3.03" lengthAdjust="spacingAndGlyphs" stroke="#1a1a1a" stroke-width="0.05">$</text>
<text x="498.45" y="158.53" font-size="5.7225" fill="#1a1a1a" text-anchor="end" textLength="23.00" lengthAdjust="spacingAndGlyphs" stroke="#1a1a1a" stroke-width="0.05">24,700.00</text>
<text x="504.25" y="158.53" font-size="5.723" fill="#1a1a1a" textLength="3.03" lengthAdjust="spacingAndGlyphs" stroke="#1a1a1a" stroke-width="0.05">$</text>
<text x="550.70" y="158.53" font-size="5.7225" fill="#1a1a1a" text-anchor="end" textLength="23.00" lengthAdjust="spacingAndGlyphs" stroke="#1a1a1a" stroke-width="0.05">12,350.00</text>
<text x="585.05" y="158.53" font-size="5.7225" fill="#1a1a1a" text-anchor="end" textLength="22.04" lengthAdjust="spacingAndGlyphs" stroke="#1a1a1a" stroke-width="0.05">6/1/2014</text>
<text x="633.70" y="158.53" font-size="5.7225" fill="#1a1a1a" text-anchor="end" textLength="2.88" lengthAdjust="spacingAndGlyphs" stroke="#1a1a1a" stroke-width="0.05">6</text>
<text x="636.30" y="158.53" font-size="5.985" fill="#1a1a1a" xml:space="preserve" textLength="13.94" lengthAdjust="spacingAndGlyphs" stroke="#1a1a1a" stroke-width="0.05"> June</text>
<text x="683.55" y="158.53" font-size="5.7225" fill="#1a1a1a" textLength="11.51" lengthAdjust="spacingAndGlyphs" stroke="#1a1a1a" stroke-width="0.05">2014</text>
<path d="M682.55 152.19 L685.15 152.19 L682.55 154.34Z" fill="#1a8a36"/>
<text x="11.90" y="166.63" font-size="5.985" fill="#1a1a1a" clip-path="url(#cc0)" textLength="31.36" lengthAdjust="spacingAndGlyphs" stroke="#1a1a1a" stroke-width="0.05">Government</text>
<text x="57.80" y="166.63" font-size="5.985" fill="#1a1a1a" clip-path="url(#cc1)" textLength="23.44" lengthAdjust="spacingAndGlyphs" stroke="#1a1a1a" stroke-width="0.05">Germany</text>
<text x="132.90" y="166.63" font-size="5.985" fill="#1a1a1a" xml:space="preserve" textLength="25.66" lengthAdjust="spacingAndGlyphs" stroke="#1a1a1a" stroke-width="0.05"> Carretera</text>
<text x="172.90" y="166.63" font-size="5.985" fill="#1a1a1a" xml:space="preserve" textLength="15.21" lengthAdjust="spacingAndGlyphs" stroke="#1a1a1a" stroke-width="0.05"> None</text>
<text x="260.80" y="166.63" font-size="5.7225" fill="#1a1a1a" text-anchor="end" textLength="11.51" lengthAdjust="spacingAndGlyphs" stroke="#1a1a1a" stroke-width="0.05">1513</text>
<text x="265.20" y="166.63" font-size="5.723" fill="#1a1a1a" textLength="3.03" lengthAdjust="spacingAndGlyphs" stroke="#1a1a1a" stroke-width="0.05">$</text>
<text x="299.60" y="166.63" font-size="5.7225" fill="#1a1a1a" text-anchor="end" textLength="10.07" lengthAdjust="spacingAndGlyphs" stroke="#1a1a1a" stroke-width="0.05">3.00</text>
<text x="305.40" y="166.63" font-size="5.723" fill="#1a1a1a" textLength="3.03" lengthAdjust="spacingAndGlyphs" stroke="#1a1a1a" stroke-width="0.05">$</text>
<text x="334.70" y="166.63" font-size="5.7225" fill="#1a1a1a" text-anchor="end" textLength="15.83" lengthAdjust="spacingAndGlyphs" stroke="#1a1a1a" stroke-width="0.05">350.00</text>
<text x="340.50" y="166.63" font-size="5.723" fill="#1a1a1a" textLength="3.03" lengthAdjust="spacingAndGlyphs" stroke="#1a1a1a" stroke-width="0.05">$</text>
<text x="375.30" y="166.63" font-size="5.7225" fill="#1a1a1a" text-anchor="end" textLength="25.88" lengthAdjust="spacingAndGlyphs" stroke="#1a1a1a" stroke-width="0.05">529,550.00</text>
<text x="418.75" y="166.63" font-size="5.723" fill="#1a1a1a" textLength="3.03" lengthAdjust="spacingAndGlyphs" stroke="#1a1a1a" stroke-width="0.05">$</text>
<text x="462.80" y="166.63" font-size="5.7225" fill="#1a1a1a" text-anchor="end" textLength="25.88" lengthAdjust="spacingAndGlyphs" stroke="#1a1a1a" stroke-width="0.05">529,550.00</text>
<text x="381.10" y="166.63" font-size="5.723" fill="#1a1a1a" textLength="3.03" lengthAdjust="spacingAndGlyphs" stroke="#1a1a1a" stroke-width="0.05">$</text>
<text x="406.75" y="166.63" font-size="5.7225" fill="#1a1a1a" text-anchor="end" textLength="1.74" lengthAdjust="spacingAndGlyphs" stroke="#1a1a1a" stroke-width="0.05">-</text>
<text x="468.60" y="166.63" font-size="5.723" fill="#1a1a1a" textLength="3.03" lengthAdjust="spacingAndGlyphs" stroke="#1a1a1a" stroke-width="0.05">$</text>
<text x="498.45" y="166.63" font-size="5.7225" fill="#1a1a1a" text-anchor="end" textLength="23.00" lengthAdjust="spacingAndGlyphs" stroke="#1a1a1a" stroke-width="0.05">15,130.00</text>
<text x="504.25" y="166.63" font-size="5.723" fill="#1a1a1a" textLength="3.03" lengthAdjust="spacingAndGlyphs" stroke="#1a1a1a" stroke-width="0.05">$</text>
<text x="550.70" y="166.63" font-size="5.7225" fill="#1a1a1a" text-anchor="end" textLength="25.88" lengthAdjust="spacingAndGlyphs" stroke="#1a1a1a" stroke-width="0.05">514,420.00</text>
<text x="585.05" y="166.63" font-size="5.7225" fill="#1a1a1a" text-anchor="end" textLength="24.92" lengthAdjust="spacingAndGlyphs" stroke="#1a1a1a" stroke-width="0.05">12/1/2014</text>
<text x="633.70" y="166.63" font-size="5.7225" fill="#1a1a1a" text-anchor="end" textLength="5.76" lengthAdjust="spacingAndGlyphs" stroke="#1a1a1a" stroke-width="0.05">12</text>
<text x="636.30" y="166.63" font-size="5.985" fill="#1a1a1a" xml:space="preserve" textLength="27.88" lengthAdjust="spacingAndGlyphs" stroke="#1a1a1a" stroke-width="0.05"> December</text>
<text x="683.55" y="166.63" font-size="5.7225" fill="#1a1a1a" textLength="11.51" lengthAdjust="spacingAndGlyphs" stroke="#1a1a1a" stroke-width="0.05">2014</text>
<path d="M682.55 160.28 L685.15 160.28 L682.55 162.43Z" fill="#1a8a36"/>
<text x="11.90" y="174.73" font-size="5.985" fill="#1a1a1a" clip-path="url(#cc0)" textLength="26.60" lengthAdjust="spacingAndGlyphs" stroke="#1a1a1a" stroke-width="0.05">Midmarket</text>
<text x="57.80" y="174.73" font-size="5.985" fill="#1a1a1a" clip-path="url(#cc1)" textLength="23.44" lengthAdjust="spacingAndGlyphs" stroke="#1a1a1a" stroke-width="0.05">Germany</text>
<text x="132.90" y="174.73" font-size="5.985" fill="#1a1a1a" xml:space="preserve" textLength="23.77" lengthAdjust="spacingAndGlyphs" stroke="#1a1a1a" stroke-width="0.05"> Montana</text>
<text x="172.90" y="174.73" font-size="5.985" fill="#1a1a1a" xml:space="preserve" textLength="15.21" lengthAdjust="spacingAndGlyphs" stroke="#1a1a1a" stroke-width="0.05"> None</text>
<text x="260.80" y="174.73" font-size="5.7225" fill="#1a1a1a" text-anchor="end" textLength="8.64" lengthAdjust="spacingAndGlyphs" stroke="#1a1a1a" stroke-width="0.05">921</text>
<text x="265.20" y="174.73" font-size="5.723" fill="#1a1a1a" textLength="3.03" lengthAdjust="spacingAndGlyphs" stroke="#1a1a1a" stroke-width="0.05">$</text>
<text x="299.60" y="174.73" font-size="5.7225" fill="#1a1a1a" text-anchor="end" textLength="10.07" lengthAdjust="spacingAndGlyphs" stroke="#1a1a1a" stroke-width="0.05">5.00</text>
<text x="305.40" y="174.73" font-size="5.723" fill="#1a1a1a" textLength="3.03" lengthAdjust="spacingAndGlyphs" stroke="#1a1a1a" stroke-width="0.05">$</text>
<text x="334.70" y="174.73" font-size="5.7225" fill="#1a1a1a" text-anchor="end" textLength="12.95" lengthAdjust="spacingAndGlyphs" stroke="#1a1a1a" stroke-width="0.05">15.00</text>
<text x="340.50" y="174.73" font-size="5.723" fill="#1a1a1a" textLength="3.03" lengthAdjust="spacingAndGlyphs" stroke="#1a1a1a" stroke-width="0.05">$</text>
<text x="375.30" y="174.73" font-size="5.7225" fill="#1a1a1a" text-anchor="end" textLength="23.00" lengthAdjust="spacingAndGlyphs" stroke="#1a1a1a" stroke-width="0.05">13,815.00</text>
<text x="418.75" y="174.73" font-size="5.723" fill="#1a1a1a" textLength="3.03" lengthAdjust="spacingAndGlyphs" stroke="#1a1a1a" stroke-width="0.05">$</text>
<text x="462.80" y="174.73" font-size="5.7225" fill="#1a1a1a" text-anchor="end" textLength="23.00" lengthAdjust="spacingAndGlyphs" stroke="#1a1a1a" stroke-width="0.05">13,815.00</text>
<text x="381.10" y="174.73" font-size="5.723" fill="#1a1a1a" textLength="3.03" lengthAdjust="spacingAndGlyphs" stroke="#1a1a1a" stroke-width="0.05">$</text>
<text x="406.75" y="174.73" font-size="5.7225" fill="#1a1a1a" text-anchor="end" textLength="1.74" lengthAdjust="spacingAndGlyphs" stroke="#1a1a1a" stroke-width="0.05">-</text>
<text x="468.60" y="174.73" font-size="5.723" fill="#1a1a1a" textLength="3.03" lengthAdjust="spacingAndGlyphs" stroke="#1a1a1a" stroke-width="0.05">$</text>
<text x="498.45" y="174.73" font-size="5.7225" fill="#1a1a1a" text-anchor="end" textLength="20.12" lengthAdjust="spacingAndGlyphs" stroke="#1a1a1a" stroke-width="0.05">4,605.00</text>
<text x="504.25" y="174.73" font-size="5.723" fill="#1a1a1a" textLength="3.03" lengthAdjust="spacingAndGlyphs" stroke="#1a1a1a" stroke-width="0.05">$</text>
<text x="550.70" y="174.73" font-size="5.7225" fill="#1a1a1a" text-anchor="end" textLength="20.12" lengthAdjust="spacingAndGlyphs" stroke="#1a1a1a" stroke-width="0.05">9,210.00</text>
<text x="585.05" y="174.73" font-size="5.7225" fill="#1a1a1a" text-anchor="end" textLength="22.04" lengthAdjust="spacingAndGlyphs" stroke="#1a1a1a" stroke-width="0.05">3/1/2014</text>
<text x="633.70" y="174.73" font-size="5.7225" fill="#1a1a1a" text-anchor="end" textLength="2.88" lengthAdjust="spacingAndGlyphs" stroke="#1a1a1a" stroke-width="0.05">3</text>
<text x="636.30" y="174.73" font-size="5.985" fill="#1a1a1a" xml:space="preserve" textLength="17.42" lengthAdjust="spacingAndGlyphs" stroke="#1a1a1a" stroke-width="0.05"> March</text>
<text x="683.55" y="174.73" font-size="5.7225" fill="#1a1a1a" textLength="11.51" lengthAdjust="spacingAndGlyphs" stroke="#1a1a1a" stroke-width="0.05">2014</text>
<path d="M682.55 168.38 L685.15 168.38 L682.55 170.53Z" fill="#1a8a36"/>
<text x="11.90" y="182.82" font-size="5.985" fill="#1a1a1a" clip-path="url(#cc0)" textLength="44.36" lengthAdjust="spacingAndGlyphs" stroke="#1a1a1a" stroke-width="0.05">Channel Partners</text>
<text x="57.80" y="182.82" font-size="5.985" fill="#1a1a1a" clip-path="url(#cc1)" textLength="19.97" lengthAdjust="spacingAndGlyphs" stroke="#1a1a1a" stroke-width="0.05">Canada</text>
<text x="132.90" y="182.82" font-size="5.985" fill="#1a1a1a" xml:space="preserve" textLength="23.77" lengthAdjust="spacingAndGlyphs" stroke="#1a1a1a" stroke-width="0.05"> Montana</text>
<text x="172.90" y="182.82" font-size="5.985" fill="#1a1a1a" xml:space="preserve" textLength="15.21" lengthAdjust="spacingAndGlyphs" stroke="#1a1a1a" stroke-width="0.05"> None</text>
<text x="260.80" y="182.82" font-size="5.7225" fill="#1a1a1a" text-anchor="end" textLength="11.51" lengthAdjust="spacingAndGlyphs" stroke="#1a1a1a" stroke-width="0.05">2518</text>
<text x="265.20" y="182.82" font-size="5.723" fill="#1a1a1a" textLength="3.03" lengthAdjust="spacingAndGlyphs" stroke="#1a1a1a" stroke-width="0.05">$</text>
<text x="299.60" y="182.82" font-size="5.7225" fill="#1a1a1a" text-anchor="end" textLength="10.07" lengthAdjust="spacingAndGlyphs" stroke="#1a1a1a" stroke-width="0.05">5.00</text>
<text x="305.40" y="182.82" font-size="5.723" fill="#1a1a1a" textLength="3.03" lengthAdjust="spacingAndGlyphs" stroke="#1a1a1a" stroke-width="0.05">$</text>
<text x="334.70" y="182.82" font-size="5.7225" fill="#1a1a1a" text-anchor="end" textLength="12.95" lengthAdjust="spacingAndGlyphs" stroke="#1a1a1a" stroke-width="0.05">12.00</text>
<text x="340.50" y="182.82" font-size="5.723" fill="#1a1a1a" textLength="3.03" lengthAdjust="spacingAndGlyphs" stroke="#1a1a1a" stroke-width="0.05">$</text>
<text x="375.30" y="182.82" font-size="5.7225" fill="#1a1a1a" text-anchor="end" textLength="23.00" lengthAdjust="spacingAndGlyphs" stroke="#1a1a1a" stroke-width="0.05">30,216.00</text>
<text x="418.75" y="182.82" font-size="5.723" fill="#1a1a1a" textLength="3.03" lengthAdjust="spacingAndGlyphs" stroke="#1a1a1a" stroke-width="0.05">$</text>
<text x="462.80" y="182.82" font-size="5.7225" fill="#1a1a1a" text-anchor="end" textLength="23.00" lengthAdjust="spacingAndGlyphs" stroke="#1a1a1a" stroke-width="0.05">30,216.00</text>
<text x="381.10" y="182.82" font-size="5.723" fill="#1a1a1a" textLength="3.03" lengthAdjust="spacingAndGlyphs" stroke="#1a1a1a" stroke-width="0.05">$</text>
<text x="406.75" y="182.82" font-size="5.7225" fill="#1a1a1a" text-anchor="end" textLength="1.74" lengthAdjust="spacingAndGlyphs" stroke="#1a1a1a" stroke-width="0.05">-</text>
<text x="468.60" y="182.82" font-size="5.723" fill="#1a1a1a" textLength="3.03" lengthAdjust="spacingAndGlyphs" stroke="#1a1a1a" stroke-width="0.05">$</text>
<text x="498.45" y="182.82" font-size="5.7225" fill="#1a1a1a" text-anchor="end" textLength="23.00" lengthAdjust="spacingAndGlyphs" stroke="#1a1a1a" stroke-width="0.05">12,590.00</text>
<text x="504.25" y="182.82" font-size="5.723" fill="#1a1a1a" textLength="3.03" lengthAdjust="spacingAndGlyphs" stroke="#1a1a1a" stroke-width="0.05">$</text>
<text x="550.70" y="182.82" font-size="5.7225" fill="#1a1a1a" text-anchor="end" textLength="23.00" lengthAdjust="spacingAndGlyphs" stroke="#1a1a1a" stroke-width="0.05">17,626.00</text>
<text x="585.05" y="182.82" font-size="5.7225" fill="#1a1a1a" text-anchor="end" textLength="22.04" lengthAdjust="spacingAndGlyphs" stroke="#1a1a1a" stroke-width="0.05">6/1/2014</text>
<text x="633.70" y="182.82" font-size="5.7225" fill="#1a1a1a" text-anchor="end" textLength="2.88" lengthAdjust="spacingAndGlyphs" stroke="#1a1a1a" stroke-width="0.05">6</text>
<text x="636.30" y="182.82" font-size="5.985" fill="#1a1a1a" xml:space="preserve" textLength="13.94" lengthAdjust="spacingAndGlyphs" stroke="#1a1a1a" stroke-width="0.05"> June</text>
<text x="683.55" y="182.82" font-size="5.7225" fill="#1a1a1a" textLength="11.51" lengthAdjust="spacingAndGlyphs" stroke="#1a1a1a" stroke-width="0.05">2014</text>
<path d="M682.55 176.48 L685.15 176.48 L682.55 178.63Z" fill="#1a8a36"/>
<text x="11.90" y="190.92" font-size="5.985" fill="#1a1a1a" clip-path="url(#cc0)" textLength="31.36" lengthAdjust="spacingAndGlyphs" stroke="#1a1a1a" stroke-width="0.05">Government</text>
<text x="57.80" y="190.92" font-size="5.985" fill="#1a1a1a" clip-path="url(#cc1)" textLength="17.74" lengthAdjust="spacingAndGlyphs" stroke="#1a1a1a" stroke-width="0.05">France</text>
<text x="132.90" y="190.92" font-size="5.985" fill="#1a1a1a" xml:space="preserve" textLength="23.77" lengthAdjust="spacingAndGlyphs" stroke="#1a1a1a" stroke-width="0.05"> Montana</text>
<text x="172.90" y="190.92" font-size="5.985" fill="#1a1a1a" xml:space="preserve" textLength="15.21" lengthAdjust="spacingAndGlyphs" stroke="#1a1a1a" stroke-width="0.05"> None</text>
<text x="260.80" y="190.92" font-size="5.7225" fill="#1a1a1a" text-anchor="end" textLength="11.51" lengthAdjust="spacingAndGlyphs" stroke="#1a1a1a" stroke-width="0.05">1899</text>
<text x="265.20" y="190.92" font-size="5.723" fill="#1a1a1a" textLength="3.03" lengthAdjust="spacingAndGlyphs" stroke="#1a1a1a" stroke-width="0.05">$</text>
<text x="299.60" y="190.92" font-size="5.7225" fill="#1a1a1a" text-anchor="end" textLength="10.07" lengthAdjust="spacingAndGlyphs" stroke="#1a1a1a" stroke-width="0.05">5.00</text>
<text x="305.40" y="190.92" font-size="5.723" fill="#1a1a1a" textLength="3.03" lengthAdjust="spacingAndGlyphs" stroke="#1a1a1a" stroke-width="0.05">$</text>
<text x="334.70" y="190.92" font-size="5.7225" fill="#1a1a1a" text-anchor="end" textLength="12.95" lengthAdjust="spacingAndGlyphs" stroke="#1a1a1a" stroke-width="0.05">20.00</text>
<text x="340.50" y="190.92" font-size="5.723" fill="#1a1a1a" textLength="3.03" lengthAdjust="spacingAndGlyphs" stroke="#1a1a1a" stroke-width="0.05">$</text>
<text x="375.30" y="190.92" font-size="5.7225" fill="#1a1a1a" text-anchor="end" textLength="23.00" lengthAdjust="spacingAndGlyphs" stroke="#1a1a1a" stroke-width="0.05">37,980.00</text>
<text x="418.75" y="190.92" font-size="5.723" fill="#1a1a1a" textLength="3.03" lengthAdjust="spacingAndGlyphs" stroke="#1a1a1a" stroke-width="0.05">$</text>
<text x="462.80" y="190.92" font-size="5.7225" fill="#1a1a1a" text-anchor="end" textLength="23.00" lengthAdjust="spacingAndGlyphs" stroke="#1a1a1a" stroke-width="0.05">37,980.00</text>
<text x="381.10" y="190.92" font-size="5.723" fill="#1a1a1a" textLength="3.03" lengthAdjust="spacingAndGlyphs" stroke="#1a1a1a" stroke-width="0.05">$</text>
<text x="406.75" y="190.92" font-size="5.7225" fill="#1a1a1a" text-anchor="end" textLength="1.74" lengthAdjust="spacingAndGlyphs" stroke="#1a1a1a" stroke-width="0.05">-</text>
<text x="468.60" y="190.92" font-size="5.723" fill="#1a1a1a" textLength="3.03" lengthAdjust="spacingAndGlyphs" stroke="#1a1a1a" stroke-width="0.05">$</text>
<text x="498.45" y="190.92" font-size="5.7225" fill="#1a1a1a" text-anchor="end" textLength="20.12" lengthAdjust="spacingAndGlyphs" stroke="#1a1a1a" stroke-width="0.05">9,495.00</text>
<text x="504.25" y="190.92" font-size="5.723" fill="#1a1a1a" textLength="3.03" lengthAdjust="spacingAndGlyphs" stroke="#1a1a1a" stroke-width="0.05">$</text>
<text x="550.70" y="190.92" font-size="5.7225" fill="#1a1a1a" text-anchor="end" textLength="23.00" lengthAdjust="spacingAndGlyphs" stroke="#1a1a1a" stroke-width="0.05">28,485.00</text>
<text x="585.05" y="190.92" font-size="5.7225" fill="#1a1a1a" text-anchor="end" textLength="22.04" lengthAdjust="spacingAndGlyphs" stroke="#1a1a1a" stroke-width="0.05">6/1/2014</text>
<text x="633.70" y="190.92" font-size="5.7225" fill="#1a1a1a" text-anchor="end" textLength="2.88" lengthAdjust="spacingAndGlyphs" stroke="#1a1a1a" stroke-width="0.05">6</text>
<text x="636.30" y="190.92" font-size="5.985" fill="#1a1a1a" xml:space="preserve" textLength="13.94" lengthAdjust="spacingAndGlyphs" stroke="#1a1a1a" stroke-width="0.05"> June</text>
<text x="683.55" y="190.92" font-size="5.7225" fill="#1a1a1a" textLength="11.51" lengthAdjust="spacingAndGlyphs" stroke="#1a1a1a" stroke-width="0.05">2014</text>
<path d="M682.55 184.57 L685.15 184.57 L682.55 186.72Z" fill="#1a8a36"/>
<text x="11.90" y="199.02" font-size="5.985" fill="#1a1a1a" clip-path="url(#cc0)" textLength="44.36" lengthAdjust="spacingAndGlyphs" stroke="#1a1a1a" stroke-width="0.05">Channel Partners</text>
<text x="57.80" y="199.02" font-size="5.985" fill="#1a1a1a" clip-path="url(#cc1)" textLength="23.44" lengthAdjust="spacingAndGlyphs" stroke="#1a1a1a" stroke-width="0.05">Germany</text>
<text x="132.90" y="199.02" font-size="5.985" fill="#1a1a1a" xml:space="preserve" textLength="23.77" lengthAdjust="spacingAndGlyphs" stroke="#1a1a1a" stroke-width="0.05"> Montana</text>
<text x="172.90" y="199.02" font-size="5.985" fill="#1a1a1a" xml:space="preserve" textLength="15.21" lengthAdjust="spacingAndGlyphs" stroke="#1a1a1a" stroke-width="0.05"> None</text>
<text x="260.80" y="199.02" font-size="5.7225" fill="#1a1a1a" text-anchor="end" textLength="11.51" lengthAdjust="spacingAndGlyphs" stroke="#1a1a1a" stroke-width="0.05">1545</text>
<text x="265.20" y="199.02" font-size="5.723" fill="#1a1a1a" textLength="3.03" lengthAdjust="spacingAndGlyphs" stroke="#1a1a1a" stroke-width="0.05">$</text>
<text x="299.60" y="199.02" font-size="5.7225" fill="#1a1a1a" text-anchor="end" textLength="10.07" lengthAdjust="spacingAndGlyphs" stroke="#1a1a1a" stroke-width="0.05">5.00</text>
<text x="305.40" y="199.02" font-size="5.723" fill="#1a1a1a" textLength="3.03" lengthAdjust="spacingAndGlyphs" stroke="#1a1a1a" stroke-width="0.05">$</text>
<text x="334.70" y="199.02" font-size="5.7225" fill="#1a1a1a" text-anchor="end" textLength="12.95" lengthAdjust="spacingAndGlyphs" stroke="#1a1a1a" stroke-width="0.05">12.00</text>
<text x="340.50" y="199.02" font-size="5.723" fill="#1a1a1a" textLength="3.03" lengthAdjust="spacingAndGlyphs" stroke="#1a1a1a" stroke-width="0.05">$</text>
<text x="375.30" y="199.02" font-size="5.7225" fill="#1a1a1a" text-anchor="end" textLength="23.00" lengthAdjust="spacingAndGlyphs" stroke="#1a1a1a" stroke-width="0.05">18,540.00</text>
<text x="418.75" y="199.02" font-size="5.723" fill="#1a1a1a" textLength="3.03" lengthAdjust="spacingAndGlyphs" stroke="#1a1a1a" stroke-width="0.05">$</text>
<text x="462.80" y="199.02" font-size="5.7225" fill="#1a1a1a" text-anchor="end" textLength="23.00" lengthAdjust="spacingAndGlyphs" stroke="#1a1a1a" stroke-width="0.05">18,540.00</text>
<text x="381.10" y="199.02" font-size="5.723" fill="#1a1a1a" textLength="3.03" lengthAdjust="spacingAndGlyphs" stroke="#1a1a1a" stroke-width="0.05">$</text>
<text x="406.75" y="199.02" font-size="5.7225" fill="#1a1a1a" text-anchor="end" textLength="1.74" lengthAdjust="spacingAndGlyphs" stroke="#1a1a1a" stroke-width="0.05">-</text>
<text x="468.60" y="199.02" font-size="5.723" fill="#1a1a1a" textLength="3.03" lengthAdjust="spacingAndGlyphs" stroke="#1a1a1a" stroke-width="0.05">$</text>
<text x="498.45" y="199.02" font-size="5.7225" fill="#1a1a1a" text-anchor="end" textLength="20.12" lengthAdjust="spacingAndGlyphs" stroke="#1a1a1a" stroke-width="0.05">7,725.00</text>
<text x="504.25" y="199.02" font-size="5.723" fill="#1a1a1a" textLength="3.03" lengthAdjust="spacingAndGlyphs" stroke="#1a1a1a" stroke-width="0.05">$</text>
<text x="550.70" y="199.02" font-size="5.7225" fill="#1a1a1a" text-anchor="end" textLength="23.00" lengthAdjust="spacingAndGlyphs" stroke="#1a1a1a" stroke-width="0.05">10,815.00</text>
<text x="585.05" y="199.02" font-size="5.7225" fill="#1a1a1a" text-anchor="end" textLength="22.04" lengthAdjust="spacingAndGlyphs" stroke="#1a1a1a" stroke-width="0.05">6/1/2014</text>
<text x="633.70" y="199.02" font-size="5.7225" fill="#1a1a1a" text-anchor="end" textLength="2.88" lengthAdjust="spacingAndGlyphs" stroke="#1a1a1a" stroke-width="0.05">6</text>
<text x="636.30" y="199.02" font-size="5.985" fill="#1a1a1a" xml:space="preserve" textLength="13.94" lengthAdjust="spacingAndGlyphs" stroke="#1a1a1a" stroke-width="0.05"> June</text>
<text x="683.55" y="199.02" font-size="5.7225" fill="#1a1a1a" textLength="11.51" lengthAdjust="spacingAndGlyphs" stroke="#1a1a1a" stroke-width="0.05">2014</text>
<path d="M682.55 192.67 L685.15 192.67 L682.55 194.82Z" fill="#1a8a36"/>
<text x="11.90" y="207.11" font-size="5.985" fill="#1a1a1a" clip-path="url(#cc0)" textLength="26.60" lengthAdjust="spacingAndGlyphs" stroke="#1a1a1a" stroke-width="0.05">Midmarket</text>
<text x="57.80" y="207.11" font-size="5.985" fill="#1a1a1a" clip-path="url(#cc1)" textLength="18.05" lengthAdjust="spacingAndGlyphs" stroke="#1a1a1a" stroke-width="0.05">Mexico</text>
<text x="132.90" y="207.11" font-size="5.985" fill="#1a1a1a" xml:space="preserve" textLength="23.77" lengthAdjust="spacingAndGlyphs" stroke="#1a1a1a" stroke-width="0.05"> Montana</text>
<text x="172.90" y="207.11" font-size="5.985" fill="#1a1a1a" xml:space="preserve" textLength="15.21" lengthAdjust="spacingAndGlyphs" stroke="#1a1a1a" stroke-width="0.05"> None</text>
<text x="260.80" y="207.11" font-size="5.7225" fill="#1a1a1a" text-anchor="end" textLength="11.51" lengthAdjust="spacingAndGlyphs" stroke="#1a1a1a" stroke-width="0.05">2470</text>
<text x="265.20" y="207.11" font-size="5.723" fill="#1a1a1a" textLength="3.03" lengthAdjust="spacingAndGlyphs" stroke="#1a1a1a" stroke-width="0.05">$</text>
<text x="299.60" y="207.11" font-size="5.7225" fill="#1a1a1a" text-anchor="end" textLength="10.07" lengthAdjust="spacingAndGlyphs" stroke="#1a1a1a" stroke-width="0.05">5.00</text>
<text x="305.40" y="207.11" font-size="5.723" fill="#1a1a1a" textLength="3.03" lengthAdjust="spacingAndGlyphs" stroke="#1a1a1a" stroke-width="0.05">$</text>
<text x="334.70" y="207.11" font-size="5.7225" fill="#1a1a1a" text-anchor="end" textLength="12.95" lengthAdjust="spacingAndGlyphs" stroke="#1a1a1a" stroke-width="0.05">15.00</text>
<text x="340.50" y="207.11" font-size="5.723" fill="#1a1a1a" textLength="3.03" lengthAdjust="spacingAndGlyphs" stroke="#1a1a1a" stroke-width="0.05">$</text>
<text x="375.30" y="207.11" font-size="5.7225" fill="#1a1a1a" text-anchor="end" textLength="23.00" lengthAdjust="spacingAndGlyphs" stroke="#1a1a1a" stroke-width="0.05">37,050.00</text>
<text x="418.75" y="207.11" font-size="5.723" fill="#1a1a1a" textLength="3.03" lengthAdjust="spacingAndGlyphs" stroke="#1a1a1a" stroke-width="0.05">$</text>
<text x="462.80" y="207.11" font-size="5.7225" fill="#1a1a1a" text-anchor="end" textLength="23.00" lengthAdjust="spacingAndGlyphs" stroke="#1a1a1a" stroke-width="0.05">37,050.00</text>
<text x="381.10" y="207.11" font-size="5.723" fill="#1a1a1a" textLength="3.03" lengthAdjust="spacingAndGlyphs" stroke="#1a1a1a" stroke-width="0.05">$</text>
<text x="406.75" y="207.11" font-size="5.7225" fill="#1a1a1a" text-anchor="end" textLength="1.74" lengthAdjust="spacingAndGlyphs" stroke="#1a1a1a" stroke-width="0.05">-</text>
<text x="468.60" y="207.11" font-size="5.723" fill="#1a1a1a" textLength="3.03" lengthAdjust="spacingAndGlyphs" stroke="#1a1a1a" stroke-width="0.05">$</text>
<text x="498.45" y="207.11" font-size="5.7225" fill="#1a1a1a" text-anchor="end" textLength="23.00" lengthAdjust="spacingAndGlyphs" stroke="#1a1a1a" stroke-width="0.05">12,350.00</text>
<text x="504.25" y="207.11" font-size="5.723" fill="#1a1a1a" textLength="3.03" lengthAdjust="spacingAndGlyphs" stroke="#1a1a1a" stroke-width="0.05">$</text>
<text x="550.70" y="207.11" font-size="5.7225" fill="#1a1a1a" text-anchor="end" textLength="23.00" lengthAdjust="spacingAndGlyphs" stroke="#1a1a1a" stroke-width="0.05">24,700.00</text>
<text x="585.05" y="207.11" font-size="5.7225" fill="#1a1a1a" text-anchor="end" textLength="22.04" lengthAdjust="spacingAndGlyphs" stroke="#1a1a1a" stroke-width="0.05">6/1/2014</text>
<text x="633.70" y="207.11" font-size="5.7225" fill="#1a1a1a" text-anchor="end" textLength="2.88" lengthAdjust="spacingAndGlyphs" stroke="#1a1a1a" stroke-width="0.05">6</text>
<text x="636.30" y="207.11" font-size="5.985" fill="#1a1a1a" xml:space="preserve" textLength="13.94" lengthAdjust="spacingAndGlyphs" stroke="#1a1a1a" stroke-width="0.05"> June</text>
<text x="683.55" y="207.11" font-size="5.7225" fill="#1a1a1a" textLength="11.51" lengthAdjust="spacingAndGlyphs" stroke="#1a1a1a" stroke-width="0.05">2014</text>
<path d="M682.55 200.77 L685.15 200.77 L682.55 202.92Z" fill="#1a8a36"/>
<text x="11.90" y="215.21" font-size="5.985" fill="#1a1a1a" clip-path="url(#cc0)" textLength="25.98" lengthAdjust="spacingAndGlyphs" stroke="#1a1a1a" stroke-width="0.05">Enterprise</text>
<text x="57.80" y="215.21" font-size="5.985" fill="#1a1a1a" clip-path="url(#cc1)" textLength="19.97" lengthAdjust="spacingAndGlyphs" stroke="#1a1a1a" stroke-width="0.05">Canada</text>
<text x="132.90" y="215.21" font-size="5.985" fill="#1a1a1a" xml:space="preserve" textLength="23.77" lengthAdjust="spacingAndGlyphs" stroke="#1a1a1a" stroke-width="0.05"> Montana</text>
<text x="172.90" y="215.21" font-size="5.985" fill="#1a1a1a" xml:space="preserve" textLength="15.21" lengthAdjust="spacingAndGlyphs" stroke="#1a1a1a" stroke-width="0.05"> None</text>
<text x="260.80" y="215.21" font-size="5.7225" fill="#1a1a1a" text-anchor="end" textLength="15.83" lengthAdjust="spacingAndGlyphs" stroke="#1a1a1a" stroke-width="0.05">2665.5</text>
<text x="265.20" y="215.21" font-size="5.723" fill="#1a1a1a" textLength="3.03" lengthAdjust="spacingAndGlyphs" stroke="#1a1a1a" stroke-width="0.05">$</text>
<text x="299.60" y="215.21" font-size="5.7225" fill="#1a1a1a" text-anchor="end" textLength="10.07" lengthAdjust="spacingAndGlyphs" stroke="#1a1a1a" stroke-width="0.05">5.00</text>
<text x="305.40" y="215.21" font-size="5.723" fill="#1a1a1a" textLength="3.03" lengthAdjust="spacingAndGlyphs" stroke="#1a1a1a" stroke-width="0.05">$</text>
<text x="334.70" y="215.21" font-size="5.7225" fill="#1a1a1a" text-anchor="end" textLength="15.83" lengthAdjust="spacingAndGlyphs" stroke="#1a1a1a" stroke-width="0.05">125.00</text>
<text x="340.50" y="215.21" font-size="5.723" fill="#1a1a1a" textLength="3.03" lengthAdjust="spacingAndGlyphs" stroke="#1a1a1a" stroke-width="0.05">$</text>
<text x="375.30" y="215.21" font-size="5.7225" fill="#1a1a1a" text-anchor="end" textLength="25.88" lengthAdjust="spacingAndGlyphs" stroke="#1a1a1a" stroke-width="0.05">333,187.50</text>
<text x="418.75" y="215.21" font-size="5.723" fill="#1a1a1a" textLength="3.03" lengthAdjust="spacingAndGlyphs" stroke="#1a1a1a" stroke-width="0.05">$</text>
<text x="462.80" y="215.21" font-size="5.7225" fill="#1a1a1a" text-anchor="end" textLength="25.88" lengthAdjust="spacingAndGlyphs" stroke="#1a1a1a" stroke-width="0.05">333,187.50</text>
<text x="381.10" y="215.21" font-size="5.723" fill="#1a1a1a" textLength="3.03" lengthAdjust="spacingAndGlyphs" stroke="#1a1a1a" stroke-width="0.05">$</text>
<text x="406.75" y="215.21" font-size="5.7225" fill="#1a1a1a" text-anchor="end" textLength="1.74" lengthAdjust="spacingAndGlyphs" stroke="#1a1a1a" stroke-width="0.05">-</text>
<text x="468.60" y="215.21" font-size="5.723" fill="#1a1a1a" textLength="3.03" lengthAdjust="spacingAndGlyphs" stroke="#1a1a1a" stroke-width="0.05">$</text>
<text x="498.45" y="215.21" font-size="5.7225" fill="#1a1a1a" text-anchor="end" textLength="23.00" lengthAdjust="spacingAndGlyphs" stroke="#1a1a1a" stroke-width="0.05">13,327.50</text>
<text x="504.25" y="215.21" font-size="5.723" fill="#1a1a1a" textLength="3.03" lengthAdjust="spacingAndGlyphs" stroke="#1a1a1a" stroke-width="0.05">$</text>
<text x="550.70" y="215.21" font-size="5.7225" fill="#1a1a1a" text-anchor="end" textLength="25.88" lengthAdjust="spacingAndGlyphs" stroke="#1a1a1a" stroke-width="0.05">319,860.00</text>
<text x="585.05" y="215.21" font-size="5.7225" fill="#1a1a1a" text-anchor="end" textLength="22.04" lengthAdjust="spacingAndGlyphs" stroke="#1a1a1a" stroke-width="0.05">7/1/2014</text>
<text x="633.70" y="215.21" font-size="5.7225" fill="#1a1a1a" text-anchor="end" textLength="2.88" lengthAdjust="spacingAndGlyphs" stroke="#1a1a1a" stroke-width="0.05">7</text>
<text x="636.30" y="215.21" font-size="5.985" fill="#1a1a1a" xml:space="preserve" textLength="11.72" lengthAdjust="spacingAndGlyphs" stroke="#1a1a1a" stroke-width="0.05"> July</text>
<text x="683.55" y="215.21" font-size="5.7225" fill="#1a1a1a" textLength="11.51" lengthAdjust="spacingAndGlyphs" stroke="#1a1a1a" stroke-width="0.05">2014</text>
<path d="M682.55 208.86 L685.15 208.86 L682.55 211.01Z" fill="#1a8a36"/>
<text x="11.90" y="223.31" font-size="5.985" fill="#1a1a1a" clip-path="url(#cc0)" textLength="38.97" lengthAdjust="spacingAndGlyphs" stroke="#1a1a1a" stroke-width="0.05">Small Business</text>
<text x="57.80" y="223.31" font-size="5.985" fill="#1a1a1a" clip-path="url(#cc1)" textLength="18.05" lengthAdjust="spacingAndGlyphs" stroke="#1a1a1a" stroke-width="0.05">Mexico</text>
<text x="132.90" y="223.31" font-size="5.985" fill="#1a1a1a" xml:space="preserve" textLength="23.77" lengthAdjust="spacingAndGlyphs" stroke="#1a1a1a" stroke-width="0.05"> Montana</text>
<text x="172.90" y="223.31" font-size="5.985" fill="#1a1a1a" xml:space="preserve" textLength="15.21" lengthAdjust="spacingAndGlyphs" stroke="#1a1a1a" stroke-width="0.05"> None</text>
<text x="260.80" y="223.31" font-size="5.7225" fill="#1a1a1a" text-anchor="end" textLength="8.64" lengthAdjust="spacingAndGlyphs" stroke="#1a1a1a" stroke-width="0.05">958</text>
<text x="265.20" y="223.31" font-size="5.723" fill="#1a1a1a" textLength="3.03" lengthAdjust="spacingAndGlyphs" stroke="#1a1a1a" stroke-width="0.05">$</text>
<text x="299.60" y="223.31" font-size="5.7225" fill="#1a1a1a" text-anchor="end" textLength="10.07" lengthAdjust="spacingAndGlyphs" stroke="#1a1a1a" stroke-width="0.05">5.00</text>
<text x="305.40" y="223.31" font-size="5.723" fill="#1a1a1a" textLength="3.03" lengthAdjust="spacingAndGlyphs" stroke="#1a1a1a" stroke-width="0.05">$</text>
<text x="334.70" y="223.31" font-size="5.7225" fill="#1a1a1a" text-anchor="end" textLength="15.83" lengthAdjust="spacingAndGlyphs" stroke="#1a1a1a" stroke-width="0.05">300.00</text>
<text x="340.50" y="223.31" font-size="5.723" fill="#1a1a1a" textLength="3.03" lengthAdjust="spacingAndGlyphs" stroke="#1a1a1a" stroke-width="0.05">$</text>
<text x="375.30" y="223.31" font-size="5.7225" fill="#1a1a1a" text-anchor="end" textLength="25.88" lengthAdjust="spacingAndGlyphs" stroke="#1a1a1a" stroke-width="0.05">287,400.00</text>
<text x="418.75" y="223.31" font-size="5.723" fill="#1a1a1a" textLength="3.03" lengthAdjust="spacingAndGlyphs" stroke="#1a1a1a" stroke-width="0.05">$</text>
<text x="462.80" y="223.31" font-size="5.7225" fill="#1a1a1a" text-anchor="end" textLength="25.88" lengthAdjust="spacingAndGlyphs" stroke="#1a1a1a" stroke-width="0.05">287,400.00</text>
<text x="381.10" y="223.31" font-size="5.723" fill="#1a1a1a" textLength="3.03" lengthAdjust="spacingAndGlyphs" stroke="#1a1a1a" stroke-width="0.05">$</text>
<text x="406.75" y="223.31" font-size="5.7225" fill="#1a1a1a" text-anchor="end" textLength="1.74" lengthAdjust="spacingAndGlyphs" stroke="#1a1a1a" stroke-width="0.05">-</text>
<text x="468.60" y="223.31" font-size="5.723" fill="#1a1a1a" textLength="3.03" lengthAdjust="spacingAndGlyphs" stroke="#1a1a1a" stroke-width="0.05">$</text>
<text x="498.45" y="223.31" font-size="5.7225" fill="#1a1a1a" text-anchor="end" textLength="20.12" lengthAdjust="spacingAndGlyphs" stroke="#1a1a1a" stroke-width="0.05">4,790.00</text>
<text x="504.25" y="223.31" font-size="5.723" fill="#1a1a1a" textLength="3.03" lengthAdjust="spacingAndGlyphs" stroke="#1a1a1a" stroke-width="0.05">$</text>
<text x="550.70" y="223.31" font-size="5.7225" fill="#1a1a1a" text-anchor="end" textLength="25.88" lengthAdjust="spacingAndGlyphs" stroke="#1a1a1a" stroke-width="0.05">282,610.00</text>
<text x="585.05" y="223.31" font-size="5.7225" fill="#1a1a1a" text-anchor="end" textLength="22.04" lengthAdjust="spacingAndGlyphs" stroke="#1a1a1a" stroke-width="0.05">8/1/2014</text>
<text x="633.70" y="223.31" font-size="5.7225" fill="#1a1a1a" text-anchor="end" textLength="2.88" lengthAdjust="spacingAndGlyphs" stroke="#1a1a1a" stroke-width="0.05">8</text>
<text x="636.30" y="223.31" font-size="5.985" fill="#1a1a1a" xml:space="preserve" textLength="19.01" lengthAdjust="spacingAndGlyphs" stroke="#1a1a1a" stroke-width="0.05"> August</text>
<text x="683.55" y="223.31" font-size="5.7225" fill="#1a1a1a" textLength="11.51" lengthAdjust="spacingAndGlyphs" stroke="#1a1a1a" stroke-width="0.05">2014</text>
<path d="M682.55 216.96 L685.15 216.96 L682.55 219.11Z" fill="#1a8a36"/>
<text x="11.90" y="231.40" font-size="5.985" fill="#1a1a1a" clip-path="url(#cc0)" textLength="31.36" lengthAdjust="spacingAndGlyphs" stroke="#1a1a1a" stroke-width="0.05">Government</text>
<text x="57.80" y="231.40" font-size="5.985" fill="#1a1a1a" clip-path="url(#cc1)" textLength="23.44" lengthAdjust="spacingAndGlyphs" stroke="#1a1a1a" stroke-width="0.05">Germany</text>
<text x="132.90" y="231.40" font-size="5.985" fill="#1a1a1a" xml:space="preserve" textLength="23.77" lengthAdjust="spacingAndGlyphs" stroke="#1a1a1a" stroke-width="0.05"> Montana</text>
<text x="172.90" y="231.40" font-size="5.985" fill="#1a1a1a" xml:space="preserve" textLength="15.21" lengthAdjust="spacingAndGlyphs" stroke="#1a1a1a" stroke-width="0.05"> None</text>
<text x="260.80" y="231.40" font-size="5.7225" fill="#1a1a1a" text-anchor="end" textLength="11.51" lengthAdjust="spacingAndGlyphs" stroke="#1a1a1a" stroke-width="0.05">2146</text>
<text x="265.20" y="231.40" font-size="5.723" fill="#1a1a1a" textLength="3.03" lengthAdjust="spacingAndGlyphs" stroke="#1a1a1a" stroke-width="0.05">$</text>
<text x="299.60" y="231.40" font-size="5.7225" fill="#1a1a1a" text-anchor="end" textLength="10.07" lengthAdjust="spacingAndGlyphs" stroke="#1a1a1a" stroke-width="0.05">5.00</text>
<text x="305.40" y="231.40" font-size="5.723" fill="#1a1a1a" textLength="3.03" lengthAdjust="spacingAndGlyphs" stroke="#1a1a1a" stroke-width="0.05">$</text>
<text x="334.70" y="231.40" font-size="5.7225" fill="#1a1a1a" text-anchor="end" textLength="10.07" lengthAdjust="spacingAndGlyphs" stroke="#1a1a1a" stroke-width="0.05">7.00</text>
<text x="340.50" y="231.40" font-size="5.723" fill="#1a1a1a" textLength="3.03" lengthAdjust="spacingAndGlyphs" stroke="#1a1a1a" stroke-width="0.05">$</text>
<text x="375.30" y="231.40" font-size="5.7225" fill="#1a1a1a" text-anchor="end" textLength="23.00" lengthAdjust="spacingAndGlyphs" stroke="#1a1a1a" stroke-width="0.05">15,022.00</text>
<text x="418.75" y="231.40" font-size="5.723" fill="#1a1a1a" textLength="3.03" lengthAdjust="spacingAndGlyphs" stroke="#1a1a1a" stroke-width="0.05">$</text>
<text x="462.80" y="231.40" font-size="5.7225" fill="#1a1a1a" text-anchor="end" textLength="23.00" lengthAdjust="spacingAndGlyphs" stroke="#1a1a1a" stroke-width="0.05">15,022.00</text>
<text x="381.10" y="231.40" font-size="5.723" fill="#1a1a1a" textLength="3.03" lengthAdjust="spacingAndGlyphs" stroke="#1a1a1a" stroke-width="0.05">$</text>
<text x="406.75" y="231.40" font-size="5.7225" fill="#1a1a1a" text-anchor="end" textLength="1.74" lengthAdjust="spacingAndGlyphs" stroke="#1a1a1a" stroke-width="0.05">-</text>
<text x="468.60" y="231.40" font-size="5.723" fill="#1a1a1a" textLength="3.03" lengthAdjust="spacingAndGlyphs" stroke="#1a1a1a" stroke-width="0.05">$</text>
<text x="498.45" y="231.40" font-size="5.7225" fill="#1a1a1a" text-anchor="end" textLength="23.00" lengthAdjust="spacingAndGlyphs" stroke="#1a1a1a" stroke-width="0.05">10,730.00</text>
<text x="504.25" y="231.40" font-size="5.723" fill="#1a1a1a" textLength="3.03" lengthAdjust="spacingAndGlyphs" stroke="#1a1a1a" stroke-width="0.05">$</text>
<text x="550.70" y="231.40" font-size="5.7225" fill="#1a1a1a" text-anchor="end" textLength="20.12" lengthAdjust="spacingAndGlyphs" stroke="#1a1a1a" stroke-width="0.05">4,292.00</text>
<text x="585.05" y="231.40" font-size="5.7225" fill="#1a1a1a" text-anchor="end" textLength="22.04" lengthAdjust="spacingAndGlyphs" stroke="#1a1a1a" stroke-width="0.05">9/1/2014</text>
<text x="633.70" y="231.40" font-size="5.7225" fill="#1a1a1a" text-anchor="end" textLength="2.88" lengthAdjust="spacingAndGlyphs" stroke="#1a1a1a" stroke-width="0.05">9</text>
<text x="636.30" y="231.40" font-size="5.985" fill="#1a1a1a" xml:space="preserve" textLength="29.47" lengthAdjust="spacingAndGlyphs" stroke="#1a1a1a" stroke-width="0.05"> September</text>
<text x="683.55" y="231.40" font-size="5.7225" fill="#1a1a1a" textLength="11.51" lengthAdjust="spacingAndGlyphs" stroke="#1a1a1a" stroke-width="0.05">2014</text>
<path d="M682.55 225.06 L685.15 225.06 L682.55 227.21Z" fill="#1a8a36"/>
<text x="11.90" y="239.50" font-size="5.985" fill="#1a1a1a" clip-path="url(#cc0)" textLength="25.98" lengthAdjust="spacingAndGlyphs" stroke="#1a1a1a" stroke-width="0.05">Enterprise</text>
<text x="57.80" y="239.50" font-size="5.985" fill="#1a1a1a" clip-path="url(#cc1)" textLength="19.97" lengthAdjust="spacingAndGlyphs" stroke="#1a1a1a" stroke-width="0.05">Canada</text>
<text x="132.90" y="239.50" font-size="5.985" fill="#1a1a1a" xml:space="preserve" textLength="23.77" lengthAdjust="spacingAndGlyphs" stroke="#1a1a1a" stroke-width="0.05"> Montana</text>
<text x="172.90" y="239.50" font-size="5.985" fill="#1a1a1a" xml:space="preserve" textLength="15.21" lengthAdjust="spacingAndGlyphs" stroke="#1a1a1a" stroke-width="0.05"> None</text>
<text x="260.80" y="239.50" font-size="5.7225" fill="#1a1a1a" text-anchor="end" textLength="8.64" lengthAdjust="spacingAndGlyphs" stroke="#1a1a1a" stroke-width="0.05">345</text>
<text x="265.20" y="239.50" font-size="5.723" fill="#1a1a1a" textLength="3.03" lengthAdjust="spacingAndGlyphs" stroke="#1a1a1a" stroke-width="0.05">$</text>
<text x="299.60" y="239.50" font-size="5.7225" fill="#1a1a1a" text-anchor="end" textLength="10.07" lengthAdjust="spacingAndGlyphs" stroke="#1a1a1a" stroke-width="0.05">5.00</text>
<text x="305.40" y="239.50" font-size="5.723" fill="#1a1a1a" textLength="3.03" lengthAdjust="spacingAndGlyphs" stroke="#1a1a1a" stroke-width="0.05">$</text>
<text x="334.70" y="239.50" font-size="5.7225" fill="#1a1a1a" text-anchor="end" textLength="15.83" lengthAdjust="spacingAndGlyphs" stroke="#1a1a1a" stroke-width="0.05">125.00</text>
<text x="340.50" y="239.50" font-size="5.723" fill="#1a1a1a" textLength="3.03" lengthAdjust="spacingAndGlyphs" stroke="#1a1a1a" stroke-width="0.05">$</text>
<text x="375.30" y="239.50" font-size="5.7225" fill="#1a1a1a" text-anchor="end" textLength="23.00" lengthAdjust="spacingAndGlyphs" stroke="#1a1a1a" stroke-width="0.05">43,125.00</text>
<text x="418.75" y="239.50" font-size="5.723" fill="#1a1a1a" textLength="3.03" lengthAdjust="spacingAndGlyphs" stroke="#1a1a1a" stroke-width="0.05">$</text>
<text x="462.80" y="239.50" font-size="5.7225" fill="#1a1a1a" text-anchor="end" textLength="23.00" lengthAdjust="spacingAndGlyphs" stroke="#1a1a1a" stroke-width="0.05">43,125.00</text>
<text x="381.10" y="239.50" font-size="5.723" fill="#1a1a1a" textLength="3.03" lengthAdjust="spacingAndGlyphs" stroke="#1a1a1a" stroke-width="0.05">$</text>
<text x="406.75" y="239.50" font-size="5.7225" fill="#1a1a1a" text-anchor="end" textLength="1.74" lengthAdjust="spacingAndGlyphs" stroke="#1a1a1a" stroke-width="0.05">-</text>
<text x="468.60" y="239.50" font-size="5.723" fill="#1a1a1a" textLength="3.03" lengthAdjust="spacingAndGlyphs" stroke="#1a1a1a" stroke-width="0.05">$</text>
<text x="498.45" y="239.50" font-size="5.7225" fill="#1a1a1a" text-anchor="end" textLength="20.12" lengthAdjust="spacingAndGlyphs" stroke="#1a1a1a" stroke-width="0.05">1,725.00</text>
<text x="504.25" y="239.50" font-size="5.723" fill="#1a1a1a" textLength="3.03" lengthAdjust="spacingAndGlyphs" stroke="#1a1a1a" stroke-width="0.05">$</text>
<text x="550.70" y="239.50" font-size="5.7225" fill="#1a1a1a" text-anchor="end" textLength="23.00" lengthAdjust="spacingAndGlyphs" stroke="#1a1a1a" stroke-width="0.05">41,400.00</text>
<text x="585.05" y="239.50" font-size="5.7225" fill="#1a1a1a" text-anchor="end" textLength="24.92" lengthAdjust="spacingAndGlyphs" stroke="#1a1a1a" stroke-width="0.05">10/1/2013</text>
<text x="633.70" y="239.50" font-size="5.7225" fill="#1a1a1a" text-anchor="end" textLength="5.76" lengthAdjust="spacingAndGlyphs" stroke="#1a1a1a" stroke-width="0.05">10</text>
<text x="636.30" y="239.50" font-size="5.985" fill="#1a1a1a" xml:space="preserve" textLength="21.86" lengthAdjust="spacingAndGlyphs" stroke="#1a1a1a" stroke-width="0.05"> October</text>
<text x="683.55" y="239.50" font-size="5.7225" fill="#1a1a1a" textLength="11.51" lengthAdjust="spacingAndGlyphs" stroke="#1a1a1a" stroke-width="0.05">2013</text>
<path d="M682.55 233.15 L685.15 233.15 L682.55 235.30Z" fill="#1a8a36"/>
<text x="11.90" y="247.60" font-size="5.985" fill="#1a1a1a" clip-path="url(#cc0)" textLength="26.60" lengthAdjust="spacingAndGlyphs" stroke="#1a1a1a" stroke-width="0.05">Midmarket</text>
<text x="57.80" y="247.60" font-size="5.985" fill="#1a1a1a" clip-path="url(#cc1)" textLength="62.73" lengthAdjust="spacingAndGlyphs" stroke="#1a1a1a" stroke-width="0.05">United States of America</text>
<text x="132.90" y="247.60" font-size="5.985" fill="#1a1a1a" xml:space="preserve" textLength="23.77" lengthAdjust="spacingAndGlyphs" stroke="#1a1a1a" stroke-width="0.05"> Montana</text>
<text x="172.90" y="247.60" font-size="5.985" fill="#1a1a1a" xml:space="preserve" textLength="15.21" lengthAdjust="spacingAndGlyphs" stroke="#1a1a1a" stroke-width="0.05"> None</text>
<text x="260.80" y="247.60" font-size="5.7225" fill="#1a1a1a" text-anchor="end" textLength="8.64" lengthAdjust="spacingAndGlyphs" stroke="#1a1a1a" stroke-width="0.05">615</text>
<text x="265.20" y="247.60" font-size="5.723" fill="#1a1a1a" textLength="3.03" lengthAdjust="spacingAndGlyphs" stroke="#1a1a1a" stroke-width="0.05">$</text>
<text x="299.60" y="247.60" font-size="5.7225" fill="#1a1a1a" text-anchor="end" textLength="10.07" lengthAdjust="spacingAndGlyphs" stroke="#1a1a1a" stroke-width="0.05">5.00</text>
<text x="305.40" y="247.60" font-size="5.723" fill="#1a1a1a" textLength="3.03" lengthAdjust="spacingAndGlyphs" stroke="#1a1a1a" stroke-width="0.05">$</text>
<text x="334.70" y="247.60" font-size="5.7225" fill="#1a1a1a" text-anchor="end" textLength="12.95" lengthAdjust="spacingAndGlyphs" stroke="#1a1a1a" stroke-width="0.05">15.00</text>
<text x="340.50" y="247.60" font-size="5.723" fill="#1a1a1a" textLength="3.03" lengthAdjust="spacingAndGlyphs" stroke="#1a1a1a" stroke-width="0.05">$</text>
<text x="375.30" y="247.60" font-size="5.7225" fill="#1a1a1a" text-anchor="end" textLength="20.12" lengthAdjust="spacingAndGlyphs" stroke="#1a1a1a" stroke-width="0.05">9,225.00</text>
<text x="418.75" y="247.60" font-size="5.723" fill="#1a1a1a" textLength="3.03" lengthAdjust="spacingAndGlyphs" stroke="#1a1a1a" stroke-width="0.05">$</text>
<text x="462.80" y="247.60" font-size="5.7225" fill="#1a1a1a" text-anchor="end" textLength="20.12" lengthAdjust="spacingAndGlyphs" stroke="#1a1a1a" stroke-width="0.05">9,225.00</text>
<text x="381.10" y="247.60" font-size="5.723" fill="#1a1a1a" textLength="3.03" lengthAdjust="spacingAndGlyphs" stroke="#1a1a1a" stroke-width="0.05">$</text>
<text x="406.75" y="247.60" font-size="5.7225" fill="#1a1a1a" text-anchor="end" textLength="1.74" lengthAdjust="spacingAndGlyphs" stroke="#1a1a1a" stroke-width="0.05">-</text>
<text x="468.60" y="247.60" font-size="5.723" fill="#1a1a1a" textLength="3.03" lengthAdjust="spacingAndGlyphs" stroke="#1a1a1a" stroke-width="0.05">$</text>
<text x="498.45" y="247.60" font-size="5.7225" fill="#1a1a1a" text-anchor="end" textLength="20.12" lengthAdjust="spacingAndGlyphs" stroke="#1a1a1a" stroke-width="0.05">3,075.00</text>
<text x="504.25" y="247.60" font-size="5.723" fill="#1a1a1a" textLength="3.03" lengthAdjust="spacingAndGlyphs" stroke="#1a1a1a" stroke-width="0.05">$</text>
<text x="550.70" y="247.60" font-size="5.7225" fill="#1a1a1a" text-anchor="end" textLength="20.12" lengthAdjust="spacingAndGlyphs" stroke="#1a1a1a" stroke-width="0.05">6,150.00</text>
<text x="585.05" y="247.60" font-size="5.7225" fill="#1a1a1a" text-anchor="end" textLength="24.92" lengthAdjust="spacingAndGlyphs" stroke="#1a1a1a" stroke-width="0.05">12/1/2014</text>
<text x="633.70" y="247.60" font-size="5.7225" fill="#1a1a1a" text-anchor="end" textLength="5.76" lengthAdjust="spacingAndGlyphs" stroke="#1a1a1a" stroke-width="0.05">12</text>
<text x="636.30" y="247.60" font-size="5.985" fill="#1a1a1a" xml:space="preserve" textLength="27.88" lengthAdjust="spacingAndGlyphs" stroke="#1a1a1a" stroke-width="0.05"> December</text>
<text x="683.55" y="247.60" font-size="5.7225" fill="#1a1a1a" textLength="11.51" lengthAdjust="spacingAndGlyphs" stroke="#1a1a1a" stroke-width="0.05">2014</text>
<path d="M682.55 241.25 L685.15 241.25 L682.55 243.40Z" fill="#1a8a36"/>
<text x="11.90" y="255.70" font-size="5.985" fill="#1a1a1a" clip-path="url(#cc0)" textLength="31.36" lengthAdjust="spacingAndGlyphs" stroke="#1a1a1a" stroke-width="0.05">Government</text>
<text x="57.80" y="255.70" font-size="5.985" fill="#1a1a1a" clip-path="url(#cc1)" textLength="19.97" lengthAdjust="spacingAndGlyphs" stroke="#1a1a1a" stroke-width="0.05">Canada</text>
<text x="132.90" y="255.70" font-size="5.985" fill="#1a1a1a" xml:space="preserve" textLength="17.75" lengthAdjust="spacingAndGlyphs" stroke="#1a1a1a" stroke-width="0.05"> Paseo</text>
<text x="172.90" y="255.70" font-size="5.985" fill="#1a1a1a" xml:space="preserve" textLength="15.21" lengthAdjust="spacingAndGlyphs" stroke="#1a1a1a" stroke-width="0.05"> None</text>
<text x="260.80" y="255.70" font-size="5.7225" fill="#1a1a1a" text-anchor="end" textLength="8.64" lengthAdjust="spacingAndGlyphs" stroke="#1a1a1a" stroke-width="0.05">292</text>
<text x="265.20" y="255.70" font-size="5.723" fill="#1a1a1a" textLength="3.03" lengthAdjust="spacingAndGlyphs" stroke="#1a1a1a" stroke-width="0.05">$</text>
<text x="299.60" y="255.70" font-size="5.7225" fill="#1a1a1a" text-anchor="end" textLength="12.95" lengthAdjust="spacingAndGlyphs" stroke="#1a1a1a" stroke-width="0.05">10.00</text>
<text x="305.40" y="255.70" font-size="5.723" fill="#1a1a1a" textLength="3.03" lengthAdjust="spacingAndGlyphs" stroke="#1a1a1a" stroke-width="0.05">$</text>
<text x="334.70" y="255.70" font-size="5.7225" fill="#1a1a1a" text-anchor="end" textLength="12.95" lengthAdjust="spacingAndGlyphs" stroke="#1a1a1a" stroke-width="0.05">20.00</text>
<text x="340.50" y="255.70" font-size="5.723" fill="#1a1a1a" textLength="3.03" lengthAdjust="spacingAndGlyphs" stroke="#1a1a1a" stroke-width="0.05">$</text>
<text x="375.30" y="255.70" font-size="5.7225" fill="#1a1a1a" text-anchor="end" textLength="20.12" lengthAdjust="spacingAndGlyphs" stroke="#1a1a1a" stroke-width="0.05">5,840.00</text>
<text x="418.75" y="255.70" font-size="5.723" fill="#1a1a1a" textLength="3.03" lengthAdjust="spacingAndGlyphs" stroke="#1a1a1a" stroke-width="0.05">$</text>
<text x="462.80" y="255.70" font-size="5.7225" fill="#1a1a1a" text-anchor="end" textLength="20.12" lengthAdjust="spacingAndGlyphs" stroke="#1a1a1a" stroke-width="0.05">5,840.00</text>
<text x="381.10" y="255.70" font-size="5.723" fill="#1a1a1a" textLength="3.03" lengthAdjust="spacingAndGlyphs" stroke="#1a1a1a" stroke-width="0.05">$</text>
<text x="406.75" y="255.70" font-size="5.7225" fill="#1a1a1a" text-anchor="end" textLength="1.74" lengthAdjust="spacingAndGlyphs" stroke="#1a1a1a" stroke-width="0.05">-</text>
<text x="468.60" y="255.70" font-size="5.723" fill="#1a1a1a" textLength="3.03" lengthAdjust="spacingAndGlyphs" stroke="#1a1a1a" stroke-width="0.05">$</text>
<text x="498.45" y="255.70" font-size="5.7225" fill="#1a1a1a" text-anchor="end" textLength="20.12" lengthAdjust="spacingAndGlyphs" stroke="#1a1a1a" stroke-width="0.05">1,460.00</text>
<text x="504.25" y="255.70" font-size="5.723" fill="#1a1a1a" textLength="3.03" lengthAdjust="spacingAndGlyphs" stroke="#1a1a1a" stroke-width="0.05">$</text>
<text x="550.70" y="255.70" font-size="5.7225" fill="#1a1a1a" text-anchor="end" textLength="20.12" lengthAdjust="spacingAndGlyphs" stroke="#1a1a1a" stroke-width="0.05">4,380.00</text>
<text x="585.05" y="255.70" font-size="5.7225" fill="#1a1a1a" text-anchor="end" textLength="22.04" lengthAdjust="spacingAndGlyphs" stroke="#1a1a1a" stroke-width="0.05">2/1/2014</text>
<text x="633.70" y="255.70" font-size="5.7225" fill="#1a1a1a" text-anchor="end" textLength="2.88" lengthAdjust="spacingAndGlyphs" stroke="#1a1a1a" stroke-width="0.05">2</text>
<text x="636.30" y="255.70" font-size="5.985" fill="#1a1a1a" xml:space="preserve" textLength="24.39" lengthAdjust="spacingAndGlyphs" stroke="#1a1a1a" stroke-width="0.05"> February</text>
<text x="683.55" y="255.70" font-size="5.7225" fill="#1a1a1a" textLength="11.51" lengthAdjust="spacingAndGlyphs" stroke="#1a1a1a" stroke-width="0.05">2014</text>
<path d="M682.55 249.35 L685.15 249.35 L682.55 251.50Z" fill="#1a8a36"/>
<text x="11.90" y="263.79" font-size="5.985" fill="#1a1a1a" clip-path="url(#cc0)" textLength="26.60" lengthAdjust="spacingAndGlyphs" stroke="#1a1a1a" stroke-width="0.05">Midmarket</text>
<text x="57.80" y="263.79" font-size="5.985" fill="#1a1a1a" clip-path="url(#cc1)" textLength="18.05" lengthAdjust="spacingAndGlyphs" stroke="#1a1a1a" stroke-width="0.05">Mexico</text>
<text x="132.90" y="263.79" font-size="5.985" fill="#1a1a1a" xml:space="preserve" textLength="17.75" lengthAdjust="spacingAndGlyphs" stroke="#1a1a1a" stroke-width="0.05"> Paseo</text>
<text x="172.90" y="263.79" font-size="5.985" fill="#1a1a1a" xml:space="preserve" textLength="15.21" lengthAdjust="spacingAndGlyphs" stroke="#1a1a1a" stroke-width="0.05"> None</text>
<text x="260.80" y="263.79" font-size="5.7225" fill="#1a1a1a" text-anchor="end" textLength="8.64" lengthAdjust="spacingAndGlyphs" stroke="#1a1a1a" stroke-width="0.05">974</text>
<text x="265.20" y="263.79" font-size="5.723" fill="#1a1a1a" textLength="3.03" lengthAdjust="spacingAndGlyphs" stroke="#1a1a1a" stroke-width="0.05">$</text>
<text x="299.60" y="263.79" font-size="5.7225" fill="#1a1a1a" text-anchor="end" textLength="12.95" lengthAdjust="spacingAndGlyphs" stroke="#1a1a1a" stroke-width="0.05">10.00</text>
<text x="305.40" y="263.79" font-size="5.723" fill="#1a1a1a" textLength="3.03" lengthAdjust="spacingAndGlyphs" stroke="#1a1a1a" stroke-width="0.05">$</text>
<text x="334.70" y="263.79" font-size="5.7225" fill="#1a1a1a" text-anchor="end" textLength="12.95" lengthAdjust="spacingAndGlyphs" stroke="#1a1a1a" stroke-width="0.05">15.00</text>
<text x="340.50" y="263.79" font-size="5.723" fill="#1a1a1a" textLength="3.03" lengthAdjust="spacingAndGlyphs" stroke="#1a1a1a" stroke-width="0.05">$</text>
<text x="375.30" y="263.79" font-size="5.7225" fill="#1a1a1a" text-anchor="end" textLength="23.00" lengthAdjust="spacingAndGlyphs" stroke="#1a1a1a" stroke-width="0.05">14,610.00</text>
<text x="418.75" y="263.79" font-size="5.723" fill="#1a1a1a" textLength="3.03" lengthAdjust="spacingAndGlyphs" stroke="#1a1a1a" stroke-width="0.05">$</text>
<text x="462.80" y="263.79" font-size="5.7225" fill="#1a1a1a" text-anchor="end" textLength="23.00" lengthAdjust="spacingAndGlyphs" stroke="#1a1a1a" stroke-width="0.05">14,610.00</text>
<text x="381.10" y="263.79" font-size="5.723" fill="#1a1a1a" textLength="3.03" lengthAdjust="spacingAndGlyphs" stroke="#1a1a1a" stroke-width="0.05">$</text>
<text x="406.75" y="263.79" font-size="5.7225" fill="#1a1a1a" text-anchor="end" textLength="1.74" lengthAdjust="spacingAndGlyphs" stroke="#1a1a1a" stroke-width="0.05">-</text>
<text x="468.60" y="263.79" font-size="5.723" fill="#1a1a1a" textLength="3.03" lengthAdjust="spacingAndGlyphs" stroke="#1a1a1a" stroke-width="0.05">$</text>
<text x="498.45" y="263.79" font-size="5.7225" fill="#1a1a1a" text-anchor="end" textLength="20.12" lengthAdjust="spacingAndGlyphs" stroke="#1a1a1a" stroke-width="0.05">4,870.00</text>
<text x="504.25" y="263.79" font-size="5.723" fill="#1a1a1a" textLength="3.03" lengthAdjust="spacingAndGlyphs" stroke="#1a1a1a" stroke-width="0.05">$</text>
<text x="550.70" y="263.79" font-size="5.7225" fill="#1a1a1a" text-anchor="end" textLength="20.12" lengthAdjust="spacingAndGlyphs" stroke="#1a1a1a" stroke-width="0.05">9,740.00</text>
<text x="585.05" y="263.79" font-size="5.7225" fill="#1a1a1a" text-anchor="end" textLength="22.04" lengthAdjust="spacingAndGlyphs" stroke="#1a1a1a" stroke-width="0.05">2/1/2014</text>
<text x="633.70" y="263.79" font-size="5.7225" fill="#1a1a1a" text-anchor="end" textLength="2.88" lengthAdjust="spacingAndGlyphs" stroke="#1a1a1a" stroke-width="0.05">2</text>
<text x="636.30" y="263.79" font-size="5.985" fill="#1a1a1a" xml:space="preserve" textLength="24.39" lengthAdjust="spacingAndGlyphs" stroke="#1a1a1a" stroke-width="0.05"> February</text>
<text x="683.55" y="263.79" font-size="5.7225" fill="#1a1a1a" textLength="11.51" lengthAdjust="spacingAndGlyphs" stroke="#1a1a1a" stroke-width="0.05">2014</text>
<path d="M682.55 257.45 L685.15 257.45 L682.55 259.60Z" fill="#1a8a36"/>
<text x="11.90" y="271.89" font-size="5.985" fill="#1a1a1a" clip-path="url(#cc0)" textLength="44.36" lengthAdjust="spacingAndGlyphs" stroke="#1a1a1a" stroke-width="0.05">Channel Partners</text>
<text x="57.80" y="271.89" font-size="5.985" fill="#1a1a1a" clip-path="url(#cc1)" textLength="19.97" lengthAdjust="spacingAndGlyphs" stroke="#1a1a1a" stroke-width="0.05">Canada</text>
<text x="132.90" y="271.89" font-size="5.985" fill="#1a1a1a" xml:space="preserve" textLength="17.75" lengthAdjust="spacingAndGlyphs" stroke="#1a1a1a" stroke-width="0.05"> Paseo</text>
<text x="172.90" y="271.89" font-size="5.985" fill="#1a1a1a" xml:space="preserve" textLength="15.21" lengthAdjust="spacingAndGlyphs" stroke="#1a1a1a" stroke-width="0.05"> None</text>
<text x="260.80" y="271.89" font-size="5.7225" fill="#1a1a1a" text-anchor="end" textLength="11.51" lengthAdjust="spacingAndGlyphs" stroke="#1a1a1a" stroke-width="0.05">2518</text>
<text x="265.20" y="271.89" font-size="5.723" fill="#1a1a1a" textLength="3.03" lengthAdjust="spacingAndGlyphs" stroke="#1a1a1a" stroke-width="0.05">$</text>
<text x="299.60" y="271.89" font-size="5.7225" fill="#1a1a1a" text-anchor="end" textLength="12.95" lengthAdjust="spacingAndGlyphs" stroke="#1a1a1a" stroke-width="0.05">10.00</text>
<text x="305.40" y="271.89" font-size="5.723" fill="#1a1a1a" textLength="3.03" lengthAdjust="spacingAndGlyphs" stroke="#1a1a1a" stroke-width="0.05">$</text>
<text x="334.70" y="271.89" font-size="5.7225" fill="#1a1a1a" text-anchor="end" textLength="12.95" lengthAdjust="spacingAndGlyphs" stroke="#1a1a1a" stroke-width="0.05">12.00</text>
<text x="340.50" y="271.89" font-size="5.723" fill="#1a1a1a" textLength="3.03" lengthAdjust="spacingAndGlyphs" stroke="#1a1a1a" stroke-width="0.05">$</text>
<text x="375.30" y="271.89" font-size="5.7225" fill="#1a1a1a" text-anchor="end" textLength="23.00" lengthAdjust="spacingAndGlyphs" stroke="#1a1a1a" stroke-width="0.05">30,216.00</text>
<text x="418.75" y="271.89" font-size="5.723" fill="#1a1a1a" textLength="3.03" lengthAdjust="spacingAndGlyphs" stroke="#1a1a1a" stroke-width="0.05">$</text>
<text x="462.80" y="271.89" font-size="5.7225" fill="#1a1a1a" text-anchor="end" textLength="23.00" lengthAdjust="spacingAndGlyphs" stroke="#1a1a1a" stroke-width="0.05">30,216.00</text>
<text x="381.10" y="271.89" font-size="5.723" fill="#1a1a1a" textLength="3.03" lengthAdjust="spacingAndGlyphs" stroke="#1a1a1a" stroke-width="0.05">$</text>
<text x="406.75" y="271.89" font-size="5.7225" fill="#1a1a1a" text-anchor="end" textLength="1.74" lengthAdjust="spacingAndGlyphs" stroke="#1a1a1a" stroke-width="0.05">-</text>
<text x="468.60" y="271.89" font-size="5.723" fill="#1a1a1a" textLength="3.03" lengthAdjust="spacingAndGlyphs" stroke="#1a1a1a" stroke-width="0.05">$</text>
<text x="498.45" y="271.89" font-size="5.7225" fill="#1a1a1a" text-anchor="end" textLength="23.00" lengthAdjust="spacingAndGlyphs" stroke="#1a1a1a" stroke-width="0.05">12,590.00</text>
<text x="504.25" y="271.89" font-size="5.723" fill="#1a1a1a" textLength="3.03" lengthAdjust="spacingAndGlyphs" stroke="#1a1a1a" stroke-width="0.05">$</text>
<text x="550.70" y="271.89" font-size="5.7225" fill="#1a1a1a" text-anchor="end" textLength="23.00" lengthAdjust="spacingAndGlyphs" stroke="#1a1a1a" stroke-width="0.05">17,626.00</text>
<text x="585.05" y="271.89" font-size="5.7225" fill="#1a1a1a" text-anchor="end" textLength="22.04" lengthAdjust="spacingAndGlyphs" stroke="#1a1a1a" stroke-width="0.05">6/1/2014</text>
<text x="633.70" y="271.89" font-size="5.7225" fill="#1a1a1a" text-anchor="end" textLength="2.88" lengthAdjust="spacingAndGlyphs" stroke="#1a1a1a" stroke-width="0.05">6</text>
<text x="636.30" y="271.89" font-size="5.985" fill="#1a1a1a" xml:space="preserve" textLength="13.94" lengthAdjust="spacingAndGlyphs" stroke="#1a1a1a" stroke-width="0.05"> June</text>
<text x="683.55" y="271.89" font-size="5.7225" fill="#1a1a1a" textLength="11.51" lengthAdjust="spacingAndGlyphs" stroke="#1a1a1a" stroke-width="0.05">2014</text>
<path d="M682.55 265.54 L685.15 265.54 L682.55 267.69Z" fill="#1a8a36"/>
<text x="11.90" y="279.99" font-size="5.985" fill="#1a1a1a" clip-path="url(#cc0)" textLength="31.36" lengthAdjust="spacingAndGlyphs" stroke="#1a1a1a" stroke-width="0.05">Government</text>
<text x="57.80" y="279.99" font-size="5.985" fill="#1a1a1a" clip-path="url(#cc1)" textLength="23.44" lengthAdjust="spacingAndGlyphs" stroke="#1a1a1a" stroke-width="0.05">Germany</text>
<text x="132.90" y="279.99" font-size="5.985" fill="#1a1a1a" xml:space="preserve" textLength="17.75" lengthAdjust="spacingAndGlyphs" stroke="#1a1a1a" stroke-width="0.05"> Paseo</text>
<text x="172.90" y="279.99" font-size="5.985" fill="#1a1a1a" xml:space="preserve" textLength="15.21" lengthAdjust="spacingAndGlyphs" stroke="#1a1a1a" stroke-width="0.05"> None</text>
<text x="260.80" y="279.99" font-size="5.7225" fill="#1a1a1a" text-anchor="end" textLength="11.51" lengthAdjust="spacingAndGlyphs" stroke="#1a1a1a" stroke-width="0.05">1006</text>
<text x="265.20" y="279.99" font-size="5.723" fill="#1a1a1a" textLength="3.03" lengthAdjust="spacingAndGlyphs" stroke="#1a1a1a" stroke-width="0.05">$</text>
<text x="299.60" y="279.99" font-size="5.7225" fill="#1a1a1a" text-anchor="end" textLength="12.95" lengthAdjust="spacingAndGlyphs" stroke="#1a1a1a" stroke-width="0.05">10.00</text>
<text x="305.40" y="279.99" font-size="5.723" fill="#1a1a1a" textLength="3.03" lengthAdjust="spacingAndGlyphs" stroke="#1a1a1a" stroke-width="0.05">$</text>
<text x="334.70" y="279.99" font-size="5.7225" fill="#1a1a1a" text-anchor="end" textLength="15.83" lengthAdjust="spacingAndGlyphs" stroke="#1a1a1a" stroke-width="0.05">350.00</text>
<text x="340.50" y="279.99" font-size="5.723" fill="#1a1a1a" textLength="3.03" lengthAdjust="spacingAndGlyphs" stroke="#1a1a1a" stroke-width="0.05">$</text>
<text x="375.30" y="279.99" font-size="5.7225" fill="#1a1a1a" text-anchor="end" textLength="25.88" lengthAdjust="spacingAndGlyphs" stroke="#1a1a1a" stroke-width="0.05">352,100.00</text>
<text x="418.75" y="279.99" font-size="5.723" fill="#1a1a1a" textLength="3.03" lengthAdjust="spacingAndGlyphs" stroke="#1a1a1a" stroke-width="0.05">$</text>
<text x="462.80" y="279.99" font-size="5.7225" fill="#1a1a1a" text-anchor="end" textLength="25.88" lengthAdjust="spacingAndGlyphs" stroke="#1a1a1a" stroke-width="0.05">352,100.00</text>
<text x="381.10" y="279.99" font-size="5.723" fill="#1a1a1a" textLength="3.03" lengthAdjust="spacingAndGlyphs" stroke="#1a1a1a" stroke-width="0.05">$</text>
<text x="406.75" y="279.99" font-size="5.7225" fill="#1a1a1a" text-anchor="end" textLength="1.74" lengthAdjust="spacingAndGlyphs" stroke="#1a1a1a" stroke-width="0.05">-</text>
<text x="468.60" y="279.99" font-size="5.723" fill="#1a1a1a" textLength="3.03" lengthAdjust="spacingAndGlyphs" stroke="#1a1a1a" stroke-width="0.05">$</text>
<text x="498.45" y="279.99" font-size="5.7225" fill="#1a1a1a" text-anchor="end" textLength="20.12" lengthAdjust="spacingAndGlyphs" stroke="#1a1a1a" stroke-width="0.05">5,030.00</text>
<text x="504.25" y="279.99" font-size="5.723" fill="#1a1a1a" textLength="3.03" lengthAdjust="spacingAndGlyphs" stroke="#1a1a1a" stroke-width="0.05">$</text>
<text x="550.70" y="279.99" font-size="5.7225" fill="#1a1a1a" text-anchor="end" textLength="25.88" lengthAdjust="spacingAndGlyphs" stroke="#1a1a1a" stroke-width="0.05">347,070.00</text>
<text x="585.05" y="279.99" font-size="5.7225" fill="#1a1a1a" text-anchor="end" textLength="22.04" lengthAdjust="spacingAndGlyphs" stroke="#1a1a1a" stroke-width="0.05">6/1/2014</text>
<text x="633.70" y="279.99" font-size="5.7225" fill="#1a1a1a" text-anchor="end" textLength="2.88" lengthAdjust="spacingAndGlyphs" stroke="#1a1a1a" stroke-width="0.05">6</text>
<text x="636.30" y="279.99" font-size="5.985" fill="#1a1a1a" xml:space="preserve" textLength="13.94" lengthAdjust="spacingAndGlyphs" stroke="#1a1a1a" stroke-width="0.05"> June</text>
<text x="683.55" y="279.99" font-size="5.7225" fill="#1a1a1a" textLength="11.51" lengthAdjust="spacingAndGlyphs" stroke="#1a1a1a" stroke-width="0.05">2014</text>
<path d="M682.55 273.64 L685.15 273.64 L682.55 275.79Z" fill="#1a8a36"/>
<text x="11.90" y="288.08" font-size="5.985" fill="#1a1a1a" clip-path="url(#cc0)" textLength="44.36" lengthAdjust="spacingAndGlyphs" stroke="#1a1a1a" stroke-width="0.05">Channel Partners</text>
<text x="57.80" y="288.08" font-size="5.985" fill="#1a1a1a" clip-path="url(#cc1)" textLength="23.44" lengthAdjust="spacingAndGlyphs" stroke="#1a1a1a" stroke-width="0.05">Germany</text>
<text x="132.90" y="288.08" font-size="5.985" fill="#1a1a1a" xml:space="preserve" textLength="17.75" lengthAdjust="spacingAndGlyphs" stroke="#1a1a1a" stroke-width="0.05"> Paseo</text>
<text x="172.90" y="288.08" font-size="5.985" fill="#1a1a1a" xml:space="preserve" textLength="15.21" lengthAdjust="spacingAndGlyphs" stroke="#1a1a1a" stroke-width="0.05"> None</text>
<text x="260.80" y="288.08" font-size="5.7225" fill="#1a1a1a" text-anchor="end" textLength="8.64" lengthAdjust="spacingAndGlyphs" stroke="#1a1a1a" stroke-width="0.05">367</text>
<text x="265.20" y="288.08" font-size="5.723" fill="#1a1a1a" textLength="3.03" lengthAdjust="spacingAndGlyphs" stroke="#1a1a1a" stroke-width="0.05">$</text>
<text x="299.60" y="288.08" font-size="5.7225" fill="#1a1a1a" text-anchor="end" textLength="12.95" lengthAdjust="spacingAndGlyphs" stroke="#1a1a1a" stroke-width="0.05">10.00</text>
<text x="305.40" y="288.08" font-size="5.723" fill="#1a1a1a" textLength="3.03" lengthAdjust="spacingAndGlyphs" stroke="#1a1a1a" stroke-width="0.05">$</text>
<text x="334.70" y="288.08" font-size="5.7225" fill="#1a1a1a" text-anchor="end" textLength="12.95" lengthAdjust="spacingAndGlyphs" stroke="#1a1a1a" stroke-width="0.05">12.00</text>
<text x="340.50" y="288.08" font-size="5.723" fill="#1a1a1a" textLength="3.03" lengthAdjust="spacingAndGlyphs" stroke="#1a1a1a" stroke-width="0.05">$</text>
<text x="375.30" y="288.08" font-size="5.7225" fill="#1a1a1a" text-anchor="end" textLength="20.12" lengthAdjust="spacingAndGlyphs" stroke="#1a1a1a" stroke-width="0.05">4,404.00</text>
<text x="418.75" y="288.08" font-size="5.723" fill="#1a1a1a" textLength="3.03" lengthAdjust="spacingAndGlyphs" stroke="#1a1a1a" stroke-width="0.05">$</text>
<text x="462.80" y="288.08" font-size="5.7225" fill="#1a1a1a" text-anchor="end" textLength="20.12" lengthAdjust="spacingAndGlyphs" stroke="#1a1a1a" stroke-width="0.05">4,404.00</text>
<text x="381.10" y="288.08" font-size="5.723" fill="#1a1a1a" textLength="3.03" lengthAdjust="spacingAndGlyphs" stroke="#1a1a1a" stroke-width="0.05">$</text>
<text x="406.75" y="288.08" font-size="5.7225" fill="#1a1a1a" text-anchor="end" textLength="1.74" lengthAdjust="spacingAndGlyphs" stroke="#1a1a1a" stroke-width="0.05">-</text>
<text x="468.60" y="288.08" font-size="5.723" fill="#1a1a1a" textLength="3.03" lengthAdjust="spacingAndGlyphs" stroke="#1a1a1a" stroke-width="0.05">$</text>
<text x="498.45" y="288.08" font-size="5.7225" fill="#1a1a1a" text-anchor="end" textLength="20.12" lengthAdjust="spacingAndGlyphs" stroke="#1a1a1a" stroke-width="0.05">1,835.00</text>
<text x="504.25" y="288.08" font-size="5.723" fill="#1a1a1a" textLength="3.03" lengthAdjust="spacingAndGlyphs" stroke="#1a1a1a" stroke-width="0.05">$</text>
<text x="550.70" y="288.08" font-size="5.7225" fill="#1a1a1a" text-anchor="end" textLength="20.12" lengthAdjust="spacingAndGlyphs" stroke="#1a1a1a" stroke-width="0.05">2,569.00</text>
<text x="585.05" y="288.08" font-size="5.7225" fill="#1a1a1a" text-anchor="end" textLength="22.04" lengthAdjust="spacingAndGlyphs" stroke="#1a1a1a" stroke-width="0.05">7/1/2014</text>
<text x="633.70" y="288.08" font-size="5.7225" fill="#1a1a1a" text-anchor="end" textLength="2.88" lengthAdjust="spacingAndGlyphs" stroke="#1a1a1a" stroke-width="0.05">7</text>
<text x="636.30" y="288.08" font-size="5.985" fill="#1a1a1a" xml:space="preserve" textLength="11.72" lengthAdjust="spacingAndGlyphs" stroke="#1a1a1a" stroke-width="0.05"> July</text>
<text x="683.55" y="288.08" font-size="5.7225" fill="#1a1a1a" textLength="11.51" lengthAdjust="spacingAndGlyphs" stroke="#1a1a1a" stroke-width="0.05">2014</text>
<path d="M682.55 281.74 L685.15 281.74 L682.55 283.89Z" fill="#1a8a36"/>
<text x="11.90" y="296.18" font-size="5.985" fill="#1a1a1a" clip-path="url(#cc0)" textLength="31.36" lengthAdjust="spacingAndGlyphs" stroke="#1a1a1a" stroke-width="0.05">Government</text>
<text x="57.80" y="296.18" font-size="5.985" fill="#1a1a1a" clip-path="url(#cc1)" textLength="18.05" lengthAdjust="spacingAndGlyphs" stroke="#1a1a1a" stroke-width="0.05">Mexico</text>
<text x="132.90" y="296.18" font-size="5.985" fill="#1a1a1a" xml:space="preserve" textLength="17.75" lengthAdjust="spacingAndGlyphs" stroke="#1a1a1a" stroke-width="0.05"> Paseo</text>
<text x="172.90" y="296.18" font-size="5.985" fill="#1a1a1a" xml:space="preserve" textLength="15.21" lengthAdjust="spacingAndGlyphs" stroke="#1a1a1a" stroke-width="0.05"> None</text>
<text x="260.80" y="296.18" font-size="5.7225" fill="#1a1a1a" text-anchor="end" textLength="8.64" lengthAdjust="spacingAndGlyphs" stroke="#1a1a1a" stroke-width="0.05">883</text>
<text x="265.20" y="296.18" font-size="5.723" fill="#1a1a1a" textLength="3.03" lengthAdjust="spacingAndGlyphs" stroke="#1a1a1a" stroke-width="0.05">$</text>
<text x="299.60" y="296.18" font-size="5.7225" fill="#1a1a1a" text-anchor="end" textLength="12.95" lengthAdjust="spacingAndGlyphs" stroke="#1a1a1a" stroke-width="0.05">10.00</text>
<text x="305.40" y="296.18" font-size="5.723" fill="#1a1a1a" textLength="3.03" lengthAdjust="spacingAndGlyphs" stroke="#1a1a1a" stroke-width="0.05">$</text>
<text x="334.70" y="296.18" font-size="5.7225" fill="#1a1a1a" text-anchor="end" textLength="10.07" lengthAdjust="spacingAndGlyphs" stroke="#1a1a1a" stroke-width="0.05">7.00</text>
<text x="340.50" y="296.18" font-size="5.723" fill="#1a1a1a" textLength="3.03" lengthAdjust="spacingAndGlyphs" stroke="#1a1a1a" stroke-width="0.05">$</text>
<text x="375.30" y="296.18" font-size="5.7225" fill="#1a1a1a" text-anchor="end" textLength="20.12" lengthAdjust="spacingAndGlyphs" stroke="#1a1a1a" stroke-width="0.05">6,181.00</text>
<text x="418.75" y="296.18" font-size="5.723" fill="#1a1a1a" textLength="3.03" lengthAdjust="spacingAndGlyphs" stroke="#1a1a1a" stroke-width="0.05">$</text>
<text x="462.80" y="296.18" font-size="5.7225" fill="#1a1a1a" text-anchor="end" textLength="20.12" lengthAdjust="spacingAndGlyphs" stroke="#1a1a1a" stroke-width="0.05">6,181.00</text>
<text x="381.10" y="296.18" font-size="5.723" fill="#1a1a1a" textLength="3.03" lengthAdjust="spacingAndGlyphs" stroke="#1a1a1a" stroke-width="0.05">$</text>
<text x="406.75" y="296.18" font-size="5.7225" fill="#1a1a1a" text-anchor="end" textLength="1.74" lengthAdjust="spacingAndGlyphs" stroke="#1a1a1a" stroke-width="0.05">-</text>
<text x="468.60" y="296.18" font-size="5.723" fill="#1a1a1a" textLength="3.03" lengthAdjust="spacingAndGlyphs" stroke="#1a1a1a" stroke-width="0.05">$</text>
<text x="498.45" y="296.18" font-size="5.7225" fill="#1a1a1a" text-anchor="end" textLength="20.12" lengthAdjust="spacingAndGlyphs" stroke="#1a1a1a" stroke-width="0.05">4,415.00</text>
<text x="504.25" y="296.18" font-size="5.723" fill="#1a1a1a" textLength="3.03" lengthAdjust="spacingAndGlyphs" stroke="#1a1a1a" stroke-width="0.05">$</text>
<text x="550.70" y="296.18" font-size="5.7225" fill="#1a1a1a" text-anchor="end" textLength="20.12" lengthAdjust="spacingAndGlyphs" stroke="#1a1a1a" stroke-width="0.05">1,766.00</text>
<text x="585.05" y="296.18" font-size="5.7225" fill="#1a1a1a" text-anchor="end" textLength="22.04" lengthAdjust="spacingAndGlyphs" stroke="#1a1a1a" stroke-width="0.05">8/1/2014</text>
<text x="633.70" y="296.18" font-size="5.7225" fill="#1a1a1a" text-anchor="end" textLength="2.88" lengthAdjust="spacingAndGlyphs" stroke="#1a1a1a" stroke-width="0.05">8</text>
<text x="636.30" y="296.18" font-size="5.985" fill="#1a1a1a" xml:space="preserve" textLength="19.01" lengthAdjust="spacingAndGlyphs" stroke="#1a1a1a" stroke-width="0.05"> August</text>
<text x="683.55" y="296.18" font-size="5.7225" fill="#1a1a1a" textLength="11.51" lengthAdjust="spacingAndGlyphs" stroke="#1a1a1a" stroke-width="0.05">2014</text>
<path d="M682.55 289.83 L685.15 289.83 L682.55 291.98Z" fill="#1a8a36"/>
<text x="11.90" y="304.28" font-size="5.985" fill="#1a1a1a" clip-path="url(#cc0)" textLength="26.60" lengthAdjust="spacingAndGlyphs" stroke="#1a1a1a" stroke-width="0.05">Midmarket</text>
<text x="57.80" y="304.28" font-size="5.985" fill="#1a1a1a" clip-path="url(#cc1)" textLength="17.74" lengthAdjust="spacingAndGlyphs" stroke="#1a1a1a" stroke-width="0.05">France</text>
<text x="132.90" y="304.28" font-size="5.985" fill="#1a1a1a" xml:space="preserve" textLength="17.75" lengthAdjust="spacingAndGlyphs" stroke="#1a1a1a" stroke-width="0.05"> Paseo</text>
<text x="172.90" y="304.28" font-size="5.985" fill="#1a1a1a" xml:space="preserve" textLength="15.21" lengthAdjust="spacingAndGlyphs" stroke="#1a1a1a" stroke-width="0.05"> None</text>
<text x="260.80" y="304.28" font-size="5.7225" fill="#1a1a1a" text-anchor="end" textLength="8.64" lengthAdjust="spacingAndGlyphs" stroke="#1a1a1a" stroke-width="0.05">549</text>
<text x="265.20" y="304.28" font-size="5.723" fill="#1a1a1a" textLength="3.03" lengthAdjust="spacingAndGlyphs" stroke="#1a1a1a" stroke-width="0.05">$</text>
<text x="299.60" y="304.28" font-size="5.7225" fill="#1a1a1a" text-anchor="end" textLength="12.95" lengthAdjust="spacingAndGlyphs" stroke="#1a1a1a" stroke-width="0.05">10.00</text>
<text x="305.40" y="304.28" font-size="5.723" fill="#1a1a1a" textLength="3.03" lengthAdjust="spacingAndGlyphs" stroke="#1a1a1a" stroke-width="0.05">$</text>
<text x="334.70" y="304.28" font-size="5.7225" fill="#1a1a1a" text-anchor="end" textLength="12.95" lengthAdjust="spacingAndGlyphs" stroke="#1a1a1a" stroke-width="0.05">15.00</text>
<text x="340.50" y="304.28" font-size="5.723" fill="#1a1a1a" textLength="3.03" lengthAdjust="spacingAndGlyphs" stroke="#1a1a1a" stroke-width="0.05">$</text>
<text x="375.30" y="304.28" font-size="5.7225" fill="#1a1a1a" text-anchor="end" textLength="20.12" lengthAdjust="spacingAndGlyphs" stroke="#1a1a1a" stroke-width="0.05">8,235.00</text>
<text x="418.75" y="304.28" font-size="5.723" fill="#1a1a1a" textLength="3.03" lengthAdjust="spacingAndGlyphs" stroke="#1a1a1a" stroke-width="0.05">$</text>
<text x="462.80" y="304.28" font-size="5.7225" fill="#1a1a1a" text-anchor="end" textLength="20.12" lengthAdjust="spacingAndGlyphs" stroke="#1a1a1a" stroke-width="0.05">8,235.00</text>
<text x="381.10" y="304.28" font-size="5.723" fill="#1a1a1a" textLength="3.03" lengthAdjust="spacingAndGlyphs" stroke="#1a1a1a" stroke-width="0.05">$</text>
<text x="406.75" y="304.28" font-size="5.7225" fill="#1a1a1a" text-anchor="end" textLength="1.74" lengthAdjust="spacingAndGlyphs" stroke="#1a1a1a" stroke-width="0.05">-</text>
<text x="468.60" y="304.28" font-size="5.723" fill="#1a1a1a" textLength="3.03" lengthAdjust="spacingAndGlyphs" stroke="#1a1a1a" stroke-width="0.05">$</text>
<text x="498.45" y="304.28" font-size="5.7225" fill="#1a1a1a" text-anchor="end" textLength="20.12" lengthAdjust="spacingAndGlyphs" stroke="#1a1a1a" stroke-width="0.05">2,745.00</text>
<text x="504.25" y="304.28" font-size="5.723" fill="#1a1a1a" textLength="3.03" lengthAdjust="spacingAndGlyphs" stroke="#1a1a1a" stroke-width="0.05">$</text>
<text x="550.70" y="304.28" font-size="5.7225" fill="#1a1a1a" text-anchor="end" textLength="20.12" lengthAdjust="spacingAndGlyphs" stroke="#1a1a1a" stroke-width="0.05">5,490.00</text>
<text x="585.05" y="304.28" font-size="5.7225" fill="#1a1a1a" text-anchor="end" textLength="22.04" lengthAdjust="spacingAndGlyphs" stroke="#1a1a1a" stroke-width="0.05">9/1/2013</text>
<text x="633.70" y="304.28" font-size="5.7225" fill="#1a1a1a" text-anchor="end" textLength="2.88" lengthAdjust="spacingAndGlyphs" stroke="#1a1a1a" stroke-width="0.05">9</text>
<text x="636.30" y="304.28" font-size="5.985" fill="#1a1a1a" xml:space="preserve" textLength="29.47" lengthAdjust="spacingAndGlyphs" stroke="#1a1a1a" stroke-width="0.05"> September</text>
<text x="683.55" y="304.28" font-size="5.7225" fill="#1a1a1a" textLength="11.51" lengthAdjust="spacingAndGlyphs" stroke="#1a1a1a" stroke-width="0.05">2013</text>
<path d="M682.55 297.93 L685.15 297.93 L682.55 300.08Z" fill="#1a8a36"/>
<text x="11.90" y="312.37" font-size="5.985" fill="#1a1a1a" clip-path="url(#cc0)" textLength="38.97" lengthAdjust="spacingAndGlyphs" stroke="#1a1a1a" stroke-width="0.05">Small Business</text>
<text x="57.80" y="312.37" font-size="5.985" fill="#1a1a1a" clip-path="url(#cc1)" textLength="18.05" lengthAdjust="spacingAndGlyphs" stroke="#1a1a1a" stroke-width="0.05">Mexico</text>
<text x="132.90" y="312.37" font-size="5.985" fill="#1a1a1a" xml:space="preserve" textLength="17.75" lengthAdjust="spacingAndGlyphs" stroke="#1a1a1a" stroke-width="0.05"> Paseo</text>
<text x="172.90" y="312.37" font-size="5.985" fill="#1a1a1a" xml:space="preserve" textLength="15.21" lengthAdjust="spacingAndGlyphs" stroke="#1a1a1a" stroke-width="0.05"> None</text>
<text x="260.80" y="312.37" font-size="5.7225" fill="#1a1a1a" text-anchor="end" textLength="8.64" lengthAdjust="spacingAndGlyphs" stroke="#1a1a1a" stroke-width="0.05">788</text>
<text x="265.20" y="312.37" font-size="5.723" fill="#1a1a1a" textLength="3.03" lengthAdjust="spacingAndGlyphs" stroke="#1a1a1a" stroke-width="0.05">$</text>
<text x="299.60" y="312.37" font-size="5.7225" fill="#1a1a1a" text-anchor="end" textLength="12.95" lengthAdjust="spacingAndGlyphs" stroke="#1a1a1a" stroke-width="0.05">10.00</text>
<text x="305.40" y="312.37" font-size="5.723" fill="#1a1a1a" textLength="3.03" lengthAdjust="spacingAndGlyphs" stroke="#1a1a1a" stroke-width="0.05">$</text>
<text x="334.70" y="312.37" font-size="5.7225" fill="#1a1a1a" text-anchor="end" textLength="15.83" lengthAdjust="spacingAndGlyphs" stroke="#1a1a1a" stroke-width="0.05">300.00</text>
<text x="340.50" y="312.37" font-size="5.723" fill="#1a1a1a" textLength="3.03" lengthAdjust="spacingAndGlyphs" stroke="#1a1a1a" stroke-width="0.05">$</text>
<text x="375.30" y="312.37" font-size="5.7225" fill="#1a1a1a" text-anchor="end" textLength="25.88" lengthAdjust="spacingAndGlyphs" stroke="#1a1a1a" stroke-width="0.05">236,400.00</text>
<text x="418.75" y="312.37" font-size="5.723" fill="#1a1a1a" textLength="3.03" lengthAdjust="spacingAndGlyphs" stroke="#1a1a1a" stroke-width="0.05">$</text>
<text x="462.80" y="312.37" font-size="5.7225" fill="#1a1a1a" text-anchor="end" textLength="25.88" lengthAdjust="spacingAndGlyphs" stroke="#1a1a1a" stroke-width="0.05">236,400.00</text>
<text x="381.10" y="312.37" font-size="5.723" fill="#1a1a1a" textLength="3.03" lengthAdjust="spacingAndGlyphs" stroke="#1a1a1a" stroke-width="0.05">$</text>
<text x="406.75" y="312.37" font-size="5.7225" fill="#1a1a1a" text-anchor="end" textLength="1.74" lengthAdjust="spacingAndGlyphs" stroke="#1a1a1a" stroke-width="0.05">-</text>
<text x="468.60" y="312.37" font-size="5.723" fill="#1a1a1a" textLength="3.03" lengthAdjust="spacingAndGlyphs" stroke="#1a1a1a" stroke-width="0.05">$</text>
<text x="498.45" y="312.37" font-size="5.7225" fill="#1a1a1a" text-anchor="end" textLength="20.12" lengthAdjust="spacingAndGlyphs" stroke="#1a1a1a" stroke-width="0.05">3,940.00</text>
<text x="504.25" y="312.37" font-size="5.723" fill="#1a1a1a" textLength="3.03" lengthAdjust="spacingAndGlyphs" stroke="#1a1a1a" stroke-width="0.05">$</text>
<text x="550.70" y="312.37" font-size="5.7225" fill="#1a1a1a" text-anchor="end" textLength="25.88" lengthAdjust="spacingAndGlyphs" stroke="#1a1a1a" stroke-width="0.05">232,460.00</text>
<text x="585.05" y="312.37" font-size="5.7225" fill="#1a1a1a" text-anchor="end" textLength="22.04" lengthAdjust="spacingAndGlyphs" stroke="#1a1a1a" stroke-width="0.05">9/1/2013</text>
<text x="633.70" y="312.37" font-size="5.7225" fill="#1a1a1a" text-anchor="end" textLength="2.88" lengthAdjust="spacingAndGlyphs" stroke="#1a1a1a" stroke-width="0.05">9</text>
<text x="636.30" y="312.37" font-size="5.985" fill="#1a1a1a" xml:space="preserve" textLength="29.47" lengthAdjust="spacingAndGlyphs" stroke="#1a1a1a" stroke-width="0.05"> September</text>
<text x="683.55" y="312.37" font-size="5.7225" fill="#1a1a1a" textLength="11.51" lengthAdjust="spacingAndGlyphs" stroke="#1a1a1a" stroke-width="0.05">2013</text>
<path d="M682.55 306.03 L685.15 306.03 L682.55 308.18Z" fill="#1a8a36"/>
<text x="11.90" y="320.47" font-size="5.985" fill="#1a1a1a" clip-path="url(#cc0)" textLength="26.60" lengthAdjust="spacingAndGlyphs" stroke="#1a1a1a" stroke-width="0.05">Midmarket</text>
<text x="57.80" y="320.47" font-size="5.985" fill="#1a1a1a" clip-path="url(#cc1)" textLength="18.05" lengthAdjust="spacingAndGlyphs" stroke="#1a1a1a" stroke-width="0.05">Mexico</text>
<text x="132.90" y="320.47" font-size="5.985" fill="#1a1a1a" xml:space="preserve" textLength="17.75" lengthAdjust="spacingAndGlyphs" stroke="#1a1a1a" stroke-width="0.05"> Paseo</text>
<text x="172.90" y="320.47" font-size="5.985" fill="#1a1a1a" xml:space="preserve" textLength="15.21" lengthAdjust="spacingAndGlyphs" stroke="#1a1a1a" stroke-width="0.05"> None</text>
<text x="260.80" y="320.47" font-size="5.7225" fill="#1a1a1a" text-anchor="end" textLength="11.51" lengthAdjust="spacingAndGlyphs" stroke="#1a1a1a" stroke-width="0.05">2472</text>
<text x="265.20" y="320.47" font-size="5.723" fill="#1a1a1a" textLength="3.03" lengthAdjust="spacingAndGlyphs" stroke="#1a1a1a" stroke-width="0.05">$</text>
<text x="299.60" y="320.47" font-size="5.7225" fill="#1a1a1a" text-anchor="end" textLength="12.95" lengthAdjust="spacingAndGlyphs" stroke="#1a1a1a" stroke-width="0.05">10.00</text>
<text x="305.40" y="320.47" font-size="5.723" fill="#1a1a1a" textLength="3.03" lengthAdjust="spacingAndGlyphs" stroke="#1a1a1a" stroke-width="0.05">$</text>
<text x="334.70" y="320.47" font-size="5.7225" fill="#1a1a1a" text-anchor="end" textLength="12.95" lengthAdjust="spacingAndGlyphs" stroke="#1a1a1a" stroke-width="0.05">15.00</text>
<text x="340.50" y="320.47" font-size="5.723" fill="#1a1a1a" textLength="3.03" lengthAdjust="spacingAndGlyphs" stroke="#1a1a1a" stroke-width="0.05">$</text>
<text x="375.30" y="320.47" font-size="5.7225" fill="#1a1a1a" text-anchor="end" textLength="23.00" lengthAdjust="spacingAndGlyphs" stroke="#1a1a1a" stroke-width="0.05">37,080.00</text>
<text x="418.75" y="320.47" font-size="5.723" fill="#1a1a1a" textLength="3.03" lengthAdjust="spacingAndGlyphs" stroke="#1a1a1a" stroke-width="0.05">$</text>
<text x="462.80" y="320.47" font-size="5.7225" fill="#1a1a1a" text-anchor="end" textLength="23.00" lengthAdjust="spacingAndGlyphs" stroke="#1a1a1a" stroke-width="0.05">37,080.00</text>
<text x="381.10" y="320.47" font-size="5.723" fill="#1a1a1a" textLength="3.03" lengthAdjust="spacingAndGlyphs" stroke="#1a1a1a" stroke-width="0.05">$</text>
<text x="406.75" y="320.47" font-size="5.7225" fill="#1a1a1a" text-anchor="end" textLength="1.74" lengthAdjust="spacingAndGlyphs" stroke="#1a1a1a" stroke-width="0.05">-</text>
<text x="468.60" y="320.47" font-size="5.723" fill="#1a1a1a" textLength="3.03" lengthAdjust="spacingAndGlyphs" stroke="#1a1a1a" stroke-width="0.05">$</text>
<text x="498.45" y="320.47" font-size="5.7225" fill="#1a1a1a" text-anchor="end" textLength="23.00" lengthAdjust="spacingAndGlyphs" stroke="#1a1a1a" stroke-width="0.05">12,360.00</text>
<text x="504.25" y="320.47" font-size="5.723" fill="#1a1a1a" textLength="3.03" lengthAdjust="spacingAndGlyphs" stroke="#1a1a1a" stroke-width="0.05">$</text>
<text x="550.70" y="320.47" font-size="5.7225" fill="#1a1a1a" text-anchor="end" textLength="23.00" lengthAdjust="spacingAndGlyphs" stroke="#1a1a1a" stroke-width="0.05">24,720.00</text>
<text x="585.05" y="320.47" font-size="5.7225" fill="#1a1a1a" text-anchor="end" textLength="22.04" lengthAdjust="spacingAndGlyphs" stroke="#1a1a1a" stroke-width="0.05">9/1/2014</text>
<text x="633.70" y="320.47" font-size="5.7225" fill="#1a1a1a" text-anchor="end" textLength="2.88" lengthAdjust="spacingAndGlyphs" stroke="#1a1a1a" stroke-width="0.05">9</text>
<text x="636.30" y="320.47" font-size="5.985" fill="#1a1a1a" xml:space="preserve" textLength="29.47" lengthAdjust="spacingAndGlyphs" stroke="#1a1a1a" stroke-width="0.05"> September</text>
<text x="683.55" y="320.47" font-size="5.7225" fill="#1a1a1a" textLength="11.51" lengthAdjust="spacingAndGlyphs" stroke="#1a1a1a" stroke-width="0.05">2014</text>
<path d="M682.55 314.12 L685.15 314.12 L682.55 316.27Z" fill="#1a8a36"/>
<text x="11.90" y="328.57" font-size="5.985" fill="#1a1a1a" clip-path="url(#cc0)" textLength="31.36" lengthAdjust="spacingAndGlyphs" stroke="#1a1a1a" stroke-width="0.05">Government</text>
<text x="57.80" y="328.57" font-size="5.985" fill="#1a1a1a" clip-path="url(#cc1)" textLength="62.73" lengthAdjust="spacingAndGlyphs" stroke="#1a1a1a" stroke-width="0.05">United States of America</text>
<text x="132.90" y="328.57" font-size="5.985" fill="#1a1a1a" xml:space="preserve" textLength="17.75" lengthAdjust="spacingAndGlyphs" stroke="#1a1a1a" stroke-width="0.05"> Paseo</text>
<text x="172.90" y="328.57" font-size="5.985" fill="#1a1a1a" xml:space="preserve" textLength="15.21" lengthAdjust="spacingAndGlyphs" stroke="#1a1a1a" stroke-width="0.05"> None</text>
<text x="260.80" y="328.57" font-size="5.7225" fill="#1a1a1a" text-anchor="end" textLength="11.51" lengthAdjust="spacingAndGlyphs" stroke="#1a1a1a" stroke-width="0.05">1143</text>
<text x="265.20" y="328.57" font-size="5.723" fill="#1a1a1a" textLength="3.03" lengthAdjust="spacingAndGlyphs" stroke="#1a1a1a" stroke-width="0.05">$</text>
<text x="299.60" y="328.57" font-size="5.7225" fill="#1a1a1a" text-anchor="end" textLength="12.95" lengthAdjust="spacingAndGlyphs" stroke="#1a1a1a" stroke-width="0.05">10.00</text>
<text x="305.40" y="328.57" font-size="5.723" fill="#1a1a1a" textLength="3.03" lengthAdjust="spacingAndGlyphs" stroke="#1a1a1a" stroke-width="0.05">$</text>
<text x="334.70" y="328.57" font-size="5.7225" fill="#1a1a1a" text-anchor="end" textLength="10.07" lengthAdjust="spacingAndGlyphs" stroke="#1a1a1a" stroke-width="0.05">7.00</text>
<text x="340.50" y="328.57" font-size="5.723" fill="#1a1a1a" textLength="3.03" lengthAdjust="spacingAndGlyphs" stroke="#1a1a1a" stroke-width="0.05">$</text>
<text x="375.30" y="328.57" font-size="5.7225" fill="#1a1a1a" text-anchor="end" textLength="20.12" lengthAdjust="spacingAndGlyphs" stroke="#1a1a1a" stroke-width="0.05">8,001.00</text>
<text x="418.75" y="328.57" font-size="5.723" fill="#1a1a1a" textLength="3.03" lengthAdjust="spacingAndGlyphs" stroke="#1a1a1a" stroke-width="0.05">$</text>
<text x="462.80" y="328.57" font-size="5.7225" fill="#1a1a1a" text-anchor="end" textLength="20.12" lengthAdjust="spacingAndGlyphs" stroke="#1a1a1a" stroke-width="0.05">8,001.00</text>
<text x="381.10" y="328.57" font-size="5.723" fill="#1a1a1a" textLength="3.03" lengthAdjust="spacingAndGlyphs" stroke="#1a1a1a" stroke-width="0.05">$</text>
<text x="406.75" y="328.57" font-size="5.7225" fill="#1a1a1a" text-anchor="end" textLength="1.74" lengthAdjust="spacingAndGlyphs" stroke="#1a1a1a" stroke-width="0.05">-</text>
<text x="468.60" y="328.57" font-size="5.723" fill="#1a1a1a" textLength="3.03" lengthAdjust="spacingAndGlyphs" stroke="#1a1a1a" stroke-width="0.05">$</text>
<text x="498.45" y="328.57" font-size="5.7225" fill="#1a1a1a" text-anchor="end" textLength="20.12" lengthAdjust="spacingAndGlyphs" stroke="#1a1a1a" stroke-width="0.05">5,715.00</text>
<text x="504.25" y="328.57" font-size="5.723" fill="#1a1a1a" textLength="3.03" lengthAdjust="spacingAndGlyphs" stroke="#1a1a1a" stroke-width="0.05">$</text>
<text x="550.70" y="328.57" font-size="5.7225" fill="#1a1a1a" text-anchor="end" textLength="20.12" lengthAdjust="spacingAndGlyphs" stroke="#1a1a1a" stroke-width="0.05">2,286.00</text>
<text x="585.05" y="328.57" font-size="5.7225" fill="#1a1a1a" text-anchor="end" textLength="24.92" lengthAdjust="spacingAndGlyphs" stroke="#1a1a1a" stroke-width="0.05">10/1/2014</text>
<text x="633.70" y="328.57" font-size="5.7225" fill="#1a1a1a" text-anchor="end" textLength="5.76" lengthAdjust="spacingAndGlyphs" stroke="#1a1a1a" stroke-width="0.05">10</text>
<text x="636.30" y="328.57" font-size="5.985" fill="#1a1a1a" xml:space="preserve" textLength="21.86" lengthAdjust="spacingAndGlyphs" stroke="#1a1a1a" stroke-width="0.05"> October</text>
<text x="683.55" y="328.57" font-size="5.7225" fill="#1a1a1a" textLength="11.51" lengthAdjust="spacingAndGlyphs" stroke="#1a1a1a" stroke-width="0.05">2014</text>
<path d="M682.55 322.22 L685.15 322.22 L682.55 324.37Z" fill="#1a8a36"/>
<text x="11.90" y="336.67" font-size="5.985" fill="#1a1a1a" clip-path="url(#cc0)" textLength="31.36" lengthAdjust="spacingAndGlyphs" stroke="#1a1a1a" stroke-width="0.05">Government</text>
<text x="57.80" y="336.67" font-size="5.985" fill="#1a1a1a" clip-path="url(#cc1)" textLength="19.97" lengthAdjust="spacingAndGlyphs" stroke="#1a1a1a" stroke-width="0.05">Canada</text>
<text x="132.90" y="336.67" font-size="5.985" fill="#1a1a1a" xml:space="preserve" textLength="17.75" lengthAdjust="spacingAndGlyphs" stroke="#1a1a1a" stroke-width="0.05"> Paseo</text>
<text x="172.90" y="336.67" font-size="5.985" fill="#1a1a1a" xml:space="preserve" textLength="15.21" lengthAdjust="spacingAndGlyphs" stroke="#1a1a1a" stroke-width="0.05"> None</text>
<text x="260.80" y="336.67" font-size="5.7225" fill="#1a1a1a" text-anchor="end" textLength="11.51" lengthAdjust="spacingAndGlyphs" stroke="#1a1a1a" stroke-width="0.05">1725</text>
<text x="265.20" y="336.67" font-size="5.723" fill="#1a1a1a" textLength="3.03" lengthAdjust="spacingAndGlyphs" stroke="#1a1a1a" stroke-width="0.05">$</text>
<text x="299.60" y="336.67" font-size="5.7225" fill="#1a1a1a" text-anchor="end" textLength="12.95" lengthAdjust="spacingAndGlyphs" stroke="#1a1a1a" stroke-width="0.05">10.00</text>
<text x="305.40" y="336.67" font-size="5.723" fill="#1a1a1a" textLength="3.03" lengthAdjust="spacingAndGlyphs" stroke="#1a1a1a" stroke-width="0.05">$</text>
<text x="334.70" y="336.67" font-size="5.7225" fill="#1a1a1a" text-anchor="end" textLength="15.83" lengthAdjust="spacingAndGlyphs" stroke="#1a1a1a" stroke-width="0.05">350.00</text>
<text x="340.50" y="336.67" font-size="5.723" fill="#1a1a1a" textLength="3.03" lengthAdjust="spacingAndGlyphs" stroke="#1a1a1a" stroke-width="0.05">$</text>
<text x="375.30" y="336.67" font-size="5.7225" fill="#1a1a1a" text-anchor="end" textLength="25.88" lengthAdjust="spacingAndGlyphs" stroke="#1a1a1a" stroke-width="0.05">603,750.00</text>
<text x="418.75" y="336.67" font-size="5.723" fill="#1a1a1a" textLength="3.03" lengthAdjust="spacingAndGlyphs" stroke="#1a1a1a" stroke-width="0.05">$</text>
<text x="462.80" y="336.67" font-size="5.7225" fill="#1a1a1a" text-anchor="end" textLength="25.88" lengthAdjust="spacingAndGlyphs" stroke="#1a1a1a" stroke-width="0.05">603,750.00</text>
<text x="381.10" y="336.67" font-size="5.723" fill="#1a1a1a" textLength="3.03" lengthAdjust="spacingAndGlyphs" stroke="#1a1a1a" stroke-width="0.05">$</text>
<text x="406.75" y="336.67" font-size="5.7225" fill="#1a1a1a" text-anchor="end" textLength="1.74" lengthAdjust="spacingAndGlyphs" stroke="#1a1a1a" stroke-width="0.05">-</text>
<text x="468.60" y="336.67" font-size="5.723" fill="#1a1a1a" textLength="3.03" lengthAdjust="spacingAndGlyphs" stroke="#1a1a1a" stroke-width="0.05">$</text>
<text x="498.45" y="336.67" font-size="5.7225" fill="#1a1a1a" text-anchor="end" textLength="20.12" lengthAdjust="spacingAndGlyphs" stroke="#1a1a1a" stroke-width="0.05">8,625.00</text>
<text x="504.25" y="336.67" font-size="5.723" fill="#1a1a1a" textLength="3.03" lengthAdjust="spacingAndGlyphs" stroke="#1a1a1a" stroke-width="0.05">$</text>
<text x="550.70" y="336.67" font-size="5.7225" fill="#1a1a1a" text-anchor="end" textLength="25.88" lengthAdjust="spacingAndGlyphs" stroke="#1a1a1a" stroke-width="0.05">595,125.00</text>
<text x="585.05" y="336.67" font-size="5.7225" fill="#1a1a1a" text-anchor="end" textLength="24.92" lengthAdjust="spacingAndGlyphs" stroke="#1a1a1a" stroke-width="0.05">11/1/2013</text>
<text x="633.70" y="336.67" font-size="5.7225" fill="#1a1a1a" text-anchor="end" textLength="5.76" lengthAdjust="spacingAndGlyphs" stroke="#1a1a1a" stroke-width="0.05">11</text>
<text x="636.30" y="336.67" font-size="5.985" fill="#1a1a1a" xml:space="preserve" textLength="27.88" lengthAdjust="spacingAndGlyphs" stroke="#1a1a1a" stroke-width="0.05"> November</text>
<text x="683.55" y="336.67" font-size="5.7225" fill="#1a1a1a" textLength="11.51" lengthAdjust="spacingAndGlyphs" stroke="#1a1a1a" stroke-width="0.05">2013</text>
<path d="M682.55 330.32 L685.15 330.32 L682.55 332.47Z" fill="#1a8a36"/>
<text x="11.90" y="344.76" font-size="5.985" fill="#1a1a1a" clip-path="url(#cc0)" textLength="44.36" lengthAdjust="spacingAndGlyphs" stroke="#1a1a1a" stroke-width="0.05">Channel Partners</text>
<text x="57.80" y="344.76" font-size="5.985" fill="#1a1a1a" clip-path="url(#cc1)" textLength="62.73" lengthAdjust="spacingAndGlyphs" stroke="#1a1a1a" stroke-width="0.05">United States of America</text>
<text x="132.90" y="344.76" font-size="5.985" fill="#1a1a1a" xml:space="preserve" textLength="17.75" lengthAdjust="spacingAndGlyphs" stroke="#1a1a1a" stroke-width="0.05"> Paseo</text>
<text x="172.90" y="344.76" font-size="5.985" fill="#1a1a1a" xml:space="preserve" textLength="15.21" lengthAdjust="spacingAndGlyphs" stroke="#1a1a1a" stroke-width="0.05"> None</text>
<text x="260.80" y="344.76" font-size="5.7225" fill="#1a1a1a" text-anchor="end" textLength="8.64" lengthAdjust="spacingAndGlyphs" stroke="#1a1a1a" stroke-width="0.05">912</text>
<text x="265.20" y="344.76" font-size="5.723" fill="#1a1a1a" textLength="3.03" lengthAdjust="spacingAndGlyphs" stroke="#1a1a1a" stroke-width="0.05">$</text>
<text x="299.60" y="344.76" font-size="5.7225" fill="#1a1a1a" text-anchor="end" textLength="12.95" lengthAdjust="spacingAndGlyphs" stroke="#1a1a1a" stroke-width="0.05">10.00</text>
<text x="305.40" y="344.76" font-size="5.723" fill="#1a1a1a" textLength="3.03" lengthAdjust="spacingAndGlyphs" stroke="#1a1a1a" stroke-width="0.05">$</text>
<text x="334.70" y="344.76" font-size="5.7225" fill="#1a1a1a" text-anchor="end" textLength="12.95" lengthAdjust="spacingAndGlyphs" stroke="#1a1a1a" stroke-width="0.05">12.00</text>
<text x="340.50" y="344.76" font-size="5.723" fill="#1a1a1a" textLength="3.03" lengthAdjust="spacingAndGlyphs" stroke="#1a1a1a" stroke-width="0.05">$</text>
<text x="375.30" y="344.76" font-size="5.7225" fill="#1a1a1a" text-anchor="end" textLength="23.00" lengthAdjust="spacingAndGlyphs" stroke="#1a1a1a" stroke-width="0.05">10,944.00</text>
<text x="418.75" y="344.76" font-size="5.723" fill="#1a1a1a" textLength="3.03" lengthAdjust="spacingAndGlyphs" stroke="#1a1a1a" stroke-width="0.05">$</text>
<text x="462.80" y="344.76" font-size="5.7225" fill="#1a1a1a" text-anchor="end" textLength="23.00" lengthAdjust="spacingAndGlyphs" stroke="#1a1a1a" stroke-width="0.05">10,944.00</text>
<text x="381.10" y="344.76" font-size="5.723" fill="#1a1a1a" textLength="3.03" lengthAdjust="spacingAndGlyphs" stroke="#1a1a1a" stroke-width="0.05">$</text>
<text x="406.75" y="344.76" font-size="5.7225" fill="#1a1a1a" text-anchor="end" textLength="1.74" lengthAdjust="spacingAndGlyphs" stroke="#1a1a1a" stroke-width="0.05">-</text>
<text x="468.60" y="344.76" font-size="5.723" fill="#1a1a1a" textLength="3.03" lengthAdjust="spacingAndGlyphs" stroke="#1a1a1a" stroke-width="0.05">$</text>
<text x="498.45" y="344.76" font-size="5.7225" fill="#1a1a1a" text-anchor="end" textLength="20.12" lengthAdjust="spacingAndGlyphs" stroke="#1a1a1a" stroke-width="0.05">4,560.00</text>
<text x="504.25" y="344.76" font-size="5.723" fill="#1a1a1a" textLength="3.03" lengthAdjust="spacingAndGlyphs" stroke="#1a1a1a" stroke-width="0.05">$</text>
<text x="550.70" y="344.76" font-size="5.7225" fill="#1a1a1a" text-anchor="end" textLength="20.12" lengthAdjust="spacingAndGlyphs" stroke="#1a1a1a" stroke-width="0.05">6,384.00</text>
<text x="585.05" y="344.76" font-size="5.7225" fill="#1a1a1a" text-anchor="end" textLength="24.92" lengthAdjust="spacingAndGlyphs" stroke="#1a1a1a" stroke-width="0.05">11/1/2013</text>
<text x="633.70" y="344.76" font-size="5.7225" fill="#1a1a1a" text-anchor="end" textLength="5.76" lengthAdjust="spacingAndGlyphs" stroke="#1a1a1a" stroke-width="0.05">11</text>
<text x="636.30" y="344.76" font-size="5.985" fill="#1a1a1a" xml:space="preserve" textLength="27.88" lengthAdjust="spacingAndGlyphs" stroke="#1a1a1a" stroke-width="0.05"> November</text>
<text x="683.55" y="344.76" font-size="5.7225" fill="#1a1a1a" textLength="11.51" lengthAdjust="spacingAndGlyphs" stroke="#1a1a1a" stroke-width="0.05">2013</text>
<path d="M682.55 338.42 L685.15 338.42 L682.55 340.57Z" fill="#1a8a36"/>
<text x="11.90" y="352.86" font-size="5.985" fill="#1a1a1a" clip-path="url(#cc0)" textLength="26.60" lengthAdjust="spacingAndGlyphs" stroke="#1a1a1a" stroke-width="0.05">Midmarket</text>
<text x="57.80" y="352.86" font-size="5.985" fill="#1a1a1a" clip-path="url(#cc1)" textLength="19.97" lengthAdjust="spacingAndGlyphs" stroke="#1a1a1a" stroke-width="0.05">Canada</text>
<text x="132.90" y="352.86" font-size="5.985" fill="#1a1a1a" xml:space="preserve" textLength="17.75" lengthAdjust="spacingAndGlyphs" stroke="#1a1a1a" stroke-width="0.05"> Paseo</text>
<text x="172.90" y="352.86" font-size="5.985" fill="#1a1a1a" xml:space="preserve" textLength="15.21" lengthAdjust="spacingAndGlyphs" stroke="#1a1a1a" stroke-width="0.05"> None</text>
<text x="260.80" y="352.86" font-size="5.7225" fill="#1a1a1a" text-anchor="end" textLength="11.51" lengthAdjust="spacingAndGlyphs" stroke="#1a1a1a" stroke-width="0.05">2152</text>
<text x="265.20" y="352.86" font-size="5.723" fill="#1a1a1a" textLength="3.03" lengthAdjust="spacingAndGlyphs" stroke="#1a1a1a" stroke-width="0.05">$</text>
<text x="299.60" y="352.86" font-size="5.7225" fill="#1a1a1a" text-anchor="end" textLength="12.95" lengthAdjust="spacingAndGlyphs" stroke="#1a1a1a" stroke-width="0.05">10.00</text>
<text x="305.40" y="352.86" font-size="5.723" fill="#1a1a1a" textLength="3.03" lengthAdjust="spacingAndGlyphs" stroke="#1a1a1a" stroke-width="0.05">$</text>
<text x="334.70" y="352.86" font-size="5.7225" fill="#1a1a1a" text-anchor="end" textLength="12.95" lengthAdjust="spacingAndGlyphs" stroke="#1a1a1a" stroke-width="0.05">15.00</text>
<text x="340.50" y="352.86" font-size="5.723" fill="#1a1a1a" textLength="3.03" lengthAdjust="spacingAndGlyphs" stroke="#1a1a1a" stroke-width="0.05">$</text>
<text x="375.30" y="352.86" font-size="5.7225" fill="#1a1a1a" text-anchor="end" textLength="23.00" lengthAdjust="spacingAndGlyphs" stroke="#1a1a1a" stroke-width="0.05">32,280.00</text>
<text x="418.75" y="352.86" font-size="5.723" fill="#1a1a1a" textLength="3.03" lengthAdjust="spacingAndGlyphs" stroke="#1a1a1a" stroke-width="0.05">$</text>
<text x="462.80" y="352.86" font-size="5.7225" fill="#1a1a1a" text-anchor="end" textLength="23.00" lengthAdjust="spacingAndGlyphs" stroke="#1a1a1a" stroke-width="0.05">32,280.00</text>
<text x="381.10" y="352.86" font-size="5.723" fill="#1a1a1a" textLength="3.03" lengthAdjust="spacingAndGlyphs" stroke="#1a1a1a" stroke-width="0.05">$</text>
<text x="406.75" y="352.86" font-size="5.7225" fill="#1a1a1a" text-anchor="end" textLength="1.74" lengthAdjust="spacingAndGlyphs" stroke="#1a1a1a" stroke-width="0.05">-</text>
<text x="468.60" y="352.86" font-size="5.723" fill="#1a1a1a" textLength="3.03" lengthAdjust="spacingAndGlyphs" stroke="#1a1a1a" stroke-width="0.05">$</text>
<text x="498.45" y="352.86" font-size="5.7225" fill="#1a1a1a" text-anchor="end" textLength="23.00" lengthAdjust="spacingAndGlyphs" stroke="#1a1a1a" stroke-width="0.05">10,760.00</text>
<text x="504.25" y="352.86" font-size="5.723" fill="#1a1a1a" textLength="3.03" lengthAdjust="spacingAndGlyphs" stroke="#1a1a1a" stroke-width="0.05">$</text>
<text x="550.70" y="352.86" font-size="5.7225" fill="#1a1a1a" text-anchor="end" textLength="23.00" lengthAdjust="spacingAndGlyphs" stroke="#1a1a1a" stroke-width="0.05">21,520.00</text>
<text x="585.05" y="352.86" font-size="5.7225" fill="#1a1a1a" text-anchor="end" textLength="24.92" lengthAdjust="spacingAndGlyphs" stroke="#1a1a1a" stroke-width="0.05">12/1/2013</text>
<text x="633.70" y="352.86" font-size="5.7225" fill="#1a1a1a" text-anchor="end" textLength="5.76" lengthAdjust="spacingAndGlyphs" stroke="#1a1a1a" stroke-width="0.05">12</text>
<text x="636.30" y="352.86" font-size="5.985" fill="#1a1a1a" xml:space="preserve" textLength="27.88" lengthAdjust="spacingAndGlyphs" stroke="#1a1a1a" stroke-width="0.05"> December</text>
<text x="683.55" y="352.86" font-size="5.7225" fill="#1a1a1a" textLength="11.51" lengthAdjust="spacingAndGlyphs" stroke="#1a1a1a" stroke-width="0.05">2013</text>
<path d="M682.55 346.51 L685.15 346.51 L682.55 348.66Z" fill="#1a8a36"/>
<text x="11.90" y="360.96" font-size="5.985" fill="#1a1a1a" clip-path="url(#cc0)" textLength="31.36" lengthAdjust="spacingAndGlyphs" stroke="#1a1a1a" stroke-width="0.05">Government</text>
<text x="57.80" y="360.96" font-size="5.985" fill="#1a1a1a" clip-path="url(#cc1)" textLength="19.97" lengthAdjust="spacingAndGlyphs" stroke="#1a1a1a" stroke-width="0.05">Canada</text>
<text x="132.90" y="360.96" font-size="5.985" fill="#1a1a1a" xml:space="preserve" textLength="17.75" lengthAdjust="spacingAndGlyphs" stroke="#1a1a1a" stroke-width="0.05"> Paseo</text>
<text x="172.90" y="360.96" font-size="5.985" fill="#1a1a1a" xml:space="preserve" textLength="15.21" lengthAdjust="spacingAndGlyphs" stroke="#1a1a1a" stroke-width="0.05"> None</text>
<text x="260.80" y="360.96" font-size="5.7225" fill="#1a1a1a" text-anchor="end" textLength="11.51" lengthAdjust="spacingAndGlyphs" stroke="#1a1a1a" stroke-width="0.05">1817</text>
<text x="265.20" y="360.96" font-size="5.723" fill="#1a1a1a" textLength="3.03" lengthAdjust="spacingAndGlyphs" stroke="#1a1a1a" stroke-width="0.05">$</text>
<text x="299.60" y="360.96" font-size="5.7225" fill="#1a1a1a" text-anchor="end" textLength="12.95" lengthAdjust="spacingAndGlyphs" stroke="#1a1a1a" stroke-width="0.05">10.00</text>
<text x="305.40" y="360.96" font-size="5.723" fill="#1a1a1a" textLength="3.03" lengthAdjust="spacingAndGlyphs" stroke="#1a1a1a" stroke-width="0.05">$</text>
<text x="334.70" y="360.96" font-size="5.7225" fill="#1a1a1a" text-anchor="end" textLength="12.95" lengthAdjust="spacingAndGlyphs" stroke="#1a1a1a" stroke-width="0.05">20.00</text>
<text x="340.50" y="360.96" font-size="5.723" fill="#1a1a1a" textLength="3.03" lengthAdjust="spacingAndGlyphs" stroke="#1a1a1a" stroke-width="0.05">$</text>
<text x="375.30" y="360.96" font-size="5.7225" fill="#1a1a1a" text-anchor="end" textLength="23.00" lengthAdjust="spacingAndGlyphs" stroke="#1a1a1a" stroke-width="0.05">36,340.00</text>
<text x="418.75" y="360.96" font-size="5.723" fill="#1a1a1a" textLength="3.03" lengthAdjust="spacingAndGlyphs" stroke="#1a1a1a" stroke-width="0.05">$</text>
<text x="462.80" y="360.96" font-size="5.7225" fill="#1a1a1a" text-anchor="end" textLength="23.00" lengthAdjust="spacingAndGlyphs" stroke="#1a1a1a" stroke-width="0.05">36,340.00</text>
<text x="381.10" y="360.96" font-size="5.723" fill="#1a1a1a" textLength="3.03" lengthAdjust="spacingAndGlyphs" stroke="#1a1a1a" stroke-width="0.05">$</text>
<text x="406.75" y="360.96" font-size="5.7225" fill="#1a1a1a" text-anchor="end" textLength="1.74" lengthAdjust="spacingAndGlyphs" stroke="#1a1a1a" stroke-width="0.05">-</text>
<text x="468.60" y="360.96" font-size="5.723" fill="#1a1a1a" textLength="3.03" lengthAdjust="spacingAndGlyphs" stroke="#1a1a1a" stroke-width="0.05">$</text>
<text x="498.45" y="360.96" font-size="5.7225" fill="#1a1a1a" text-anchor="end" textLength="20.12" lengthAdjust="spacingAndGlyphs" stroke="#1a1a1a" stroke-width="0.05">9,085.00</text>
<text x="504.25" y="360.96" font-size="5.723" fill="#1a1a1a" textLength="3.03" lengthAdjust="spacingAndGlyphs" stroke="#1a1a1a" stroke-width="0.05">$</text>
<text x="550.70" y="360.96" font-size="5.7225" fill="#1a1a1a" text-anchor="end" textLength="23.00" lengthAdjust="spacingAndGlyphs" stroke="#1a1a1a" stroke-width="0.05">27,255.00</text>
<text x="585.05" y="360.96" font-size="5.7225" fill="#1a1a1a" text-anchor="end" textLength="24.92" lengthAdjust="spacingAndGlyphs" stroke="#1a1a1a" stroke-width="0.05">12/1/2014</text>
<text x="633.70" y="360.96" font-size="5.7225" fill="#1a1a1a" text-anchor="end" textLength="5.76" lengthAdjust="spacingAndGlyphs" stroke="#1a1a1a" stroke-width="0.05">12</text>
<text x="636.30" y="360.96" font-size="5.985" fill="#1a1a1a" xml:space="preserve" textLength="27.88" lengthAdjust="spacingAndGlyphs" stroke="#1a1a1a" stroke-width="0.05"> December</text>
<text x="683.55" y="360.96" font-size="5.7225" fill="#1a1a1a" textLength="11.51" lengthAdjust="spacingAndGlyphs" stroke="#1a1a1a" stroke-width="0.05">2014</text>
<path d="M682.55 354.61 L685.15 354.61 L682.55 356.76Z" fill="#1a8a36"/>
<text x="11.90" y="369.05" font-size="5.985" fill="#1a1a1a" clip-path="url(#cc0)" textLength="31.36" lengthAdjust="spacingAndGlyphs" stroke="#1a1a1a" stroke-width="0.05">Government</text>
<text x="57.80" y="369.05" font-size="5.985" fill="#1a1a1a" clip-path="url(#cc1)" textLength="23.44" lengthAdjust="spacingAndGlyphs" stroke="#1a1a1a" stroke-width="0.05">Germany</text>
<text x="132.90" y="369.05" font-size="5.985" fill="#1a1a1a" xml:space="preserve" textLength="17.75" lengthAdjust="spacingAndGlyphs" stroke="#1a1a1a" stroke-width="0.05"> Paseo</text>
<text x="172.90" y="369.05" font-size="5.985" fill="#1a1a1a" xml:space="preserve" textLength="15.21" lengthAdjust="spacingAndGlyphs" stroke="#1a1a1a" stroke-width="0.05"> None</text>
<text x="260.80" y="369.05" font-size="5.7225" fill="#1a1a1a" text-anchor="end" textLength="11.51" lengthAdjust="spacingAndGlyphs" stroke="#1a1a1a" stroke-width="0.05">1513</text>
<text x="265.20" y="369.05" font-size="5.723" fill="#1a1a1a" textLength="3.03" lengthAdjust="spacingAndGlyphs" stroke="#1a1a1a" stroke-width="0.05">$</text>
<text x="299.60" y="369.05" font-size="5.7225" fill="#1a1a1a" text-anchor="end" textLength="12.95" lengthAdjust="spacingAndGlyphs" stroke="#1a1a1a" stroke-width="0.05">10.00</text>
<text x="305.40" y="369.05" font-size="5.723" fill="#1a1a1a" textLength="3.03" lengthAdjust="spacingAndGlyphs" stroke="#1a1a1a" stroke-width="0.05">$</text>
<text x="334.70" y="369.05" font-size="5.7225" fill="#1a1a1a" text-anchor="end" textLength="15.83" lengthAdjust="spacingAndGlyphs" stroke="#1a1a1a" stroke-width="0.05">350.00</text>
<text x="340.50" y="369.05" font-size="5.723" fill="#1a1a1a" textLength="3.03" lengthAdjust="spacingAndGlyphs" stroke="#1a1a1a" stroke-width="0.05">$</text>
<text x="375.30" y="369.05" font-size="5.7225" fill="#1a1a1a" text-anchor="end" textLength="25.88" lengthAdjust="spacingAndGlyphs" stroke="#1a1a1a" stroke-width="0.05">529,550.00</text>
<text x="418.75" y="369.05" font-size="5.723" fill="#1a1a1a" textLength="3.03" lengthAdjust="spacingAndGlyphs" stroke="#1a1a1a" stroke-width="0.05">$</text>
<text x="462.80" y="369.05" font-size="5.7225" fill="#1a1a1a" text-anchor="end" textLength="25.88" lengthAdjust="spacingAndGlyphs" stroke="#1a1a1a" stroke-width="0.05">529,550.00</text>
<text x="381.10" y="369.05" font-size="5.723" fill="#1a1a1a" textLength="3.03" lengthAdjust="spacingAndGlyphs" stroke="#1a1a1a" stroke-width="0.05">$</text>
<text x="406.75" y="369.05" font-size="5.7225" fill="#1a1a1a" text-anchor="end" textLength="1.74" lengthAdjust="spacingAndGlyphs" stroke="#1a1a1a" stroke-width="0.05">-</text>
<text x="468.60" y="369.05" font-size="5.723" fill="#1a1a1a" textLength="3.03" lengthAdjust="spacingAndGlyphs" stroke="#1a1a1a" stroke-width="0.05">$</text>
<text x="498.45" y="369.05" font-size="5.7225" fill="#1a1a1a" text-anchor="end" textLength="20.12" lengthAdjust="spacingAndGlyphs" stroke="#1a1a1a" stroke-width="0.05">7,565.00</text>
<text x="504.25" y="369.05" font-size="5.723" fill="#1a1a1a" textLength="3.03" lengthAdjust="spacingAndGlyphs" stroke="#1a1a1a" stroke-width="0.05">$</text>
<text x="550.70" y="369.05" font-size="5.7225" fill="#1a1a1a" text-anchor="end" textLength="25.88" lengthAdjust="spacingAndGlyphs" stroke="#1a1a1a" stroke-width="0.05">521,985.00</text>
<text x="585.05" y="369.05" font-size="5.7225" fill="#1a1a1a" text-anchor="end" textLength="24.92" lengthAdjust="spacingAndGlyphs" stroke="#1a1a1a" stroke-width="0.05">12/1/2014</text>
<text x="633.70" y="369.05" font-size="5.7225" fill="#1a1a1a" text-anchor="end" textLength="5.76" lengthAdjust="spacingAndGlyphs" stroke="#1a1a1a" stroke-width="0.05">12</text>
<text x="636.30" y="369.05" font-size="5.985" fill="#1a1a1a" xml:space="preserve" textLength="27.88" lengthAdjust="spacingAndGlyphs" stroke="#1a1a1a" stroke-width="0.05"> December</text>
<text x="683.55" y="369.05" font-size="5.7225" fill="#1a1a1a" textLength="11.51" lengthAdjust="spacingAndGlyphs" stroke="#1a1a1a" stroke-width="0.05">2014</text>
<path d="M682.55 362.71 L685.15 362.71 L682.55 364.86Z" fill="#1a8a36"/>
<text x="11.90" y="377.15" font-size="5.985" fill="#1a1a1a" clip-path="url(#cc0)" textLength="31.36" lengthAdjust="spacingAndGlyphs" stroke="#1a1a1a" stroke-width="0.05">Government</text>
<text x="57.80" y="377.15" font-size="5.985" fill="#1a1a1a" clip-path="url(#cc1)" textLength="18.05" lengthAdjust="spacingAndGlyphs" stroke="#1a1a1a" stroke-width="0.05">Mexico</text>
<text x="132.90" y="377.15" font-size="5.985" fill="#1a1a1a" xml:space="preserve" textLength="12.68" lengthAdjust="spacingAndGlyphs" stroke="#1a1a1a" stroke-width="0.05"> Velo</text>
<text x="172.90" y="377.15" font-size="5.985" fill="#1a1a1a" xml:space="preserve" textLength="15.21" lengthAdjust="spacingAndGlyphs" stroke="#1a1a1a" stroke-width="0.05"> None</text>
<text x="260.80" y="377.15" font-size="5.7225" fill="#1a1a1a" text-anchor="end" textLength="11.51" lengthAdjust="spacingAndGlyphs" stroke="#1a1a1a" stroke-width="0.05">1493</text>
<text x="265.20" y="377.15" font-size="5.723" fill="#1a1a1a" textLength="3.03" lengthAdjust="spacingAndGlyphs" stroke="#1a1a1a" stroke-width="0.05">$</text>
<text x="299.60" y="377.15" font-size="5.7225" fill="#1a1a1a" text-anchor="end" textLength="15.83" lengthAdjust="spacingAndGlyphs" stroke="#1a1a1a" stroke-width="0.05">120.00</text>
<text x="305.40" y="377.15" font-size="5.723" fill="#1a1a1a" textLength="3.03" lengthAdjust="spacingAndGlyphs" stroke="#1a1a1a" stroke-width="0.05">$</text>
<text x="334.70" y="377.15" font-size="5.7225" fill="#1a1a1a" text-anchor="end" textLength="10.07" lengthAdjust="spacingAndGlyphs" stroke="#1a1a1a" stroke-width="0.05">7.00</text>
<text x="340.50" y="377.15" font-size="5.723" fill="#1a1a1a" textLength="3.03" lengthAdjust="spacingAndGlyphs" stroke="#1a1a1a" stroke-width="0.05">$</text>
<text x="375.30" y="377.15" font-size="5.7225" fill="#1a1a1a" text-anchor="end" textLength="23.00" lengthAdjust="spacingAndGlyphs" stroke="#1a1a1a" stroke-width="0.05">10,451.00</text>
<text x="418.75" y="377.15" font-size="5.723" fill="#1a1a1a" textLength="3.03" lengthAdjust="spacingAndGlyphs" stroke="#1a1a1a" stroke-width="0.05">$</text>
<text x="462.80" y="377.15" font-size="5.7225" fill="#1a1a1a" text-anchor="end" textLength="23.00" lengthAdjust="spacingAndGlyphs" stroke="#1a1a1a" stroke-width="0.05">10,451.00</text>
<text x="381.10" y="377.15" font-size="5.723" fill="#1a1a1a" textLength="3.03" lengthAdjust="spacingAndGlyphs" stroke="#1a1a1a" stroke-width="0.05">$</text>
<text x="406.75" y="377.15" font-size="5.7225" fill="#1a1a1a" text-anchor="end" textLength="1.74" lengthAdjust="spacingAndGlyphs" stroke="#1a1a1a" stroke-width="0.05">-</text>
<text x="468.60" y="377.15" font-size="5.723" fill="#1a1a1a" textLength="3.03" lengthAdjust="spacingAndGlyphs" stroke="#1a1a1a" stroke-width="0.05">$</text>
<text x="498.45" y="377.15" font-size="5.7225" fill="#1a1a1a" text-anchor="end" textLength="25.88" lengthAdjust="spacingAndGlyphs" stroke="#1a1a1a" stroke-width="0.05">179,160.00</text>
<text x="504.25" y="377.15" font-size="5.723" fill="#1a1a1a" textLength="3.03" lengthAdjust="spacingAndGlyphs" stroke="#1a1a1a" stroke-width="0.05">$</text>
<text x="550.70" y="377.15" font-size="5.7225" fill="#1a1a1a" text-anchor="end" textLength="27.62" lengthAdjust="spacingAndGlyphs" stroke="#1a1a1a" stroke-width="0.05">-168,709.00</text>
<text x="585.05" y="377.15" font-size="5.7225" fill="#1a1a1a" text-anchor="end" textLength="22.04" lengthAdjust="spacingAndGlyphs" stroke="#1a1a1a" stroke-width="0.05">1/1/2014</text>
<text x="633.70" y="377.15" font-size="5.7225" fill="#1a1a1a" text-anchor="end" textLength="2.88" lengthAdjust="spacingAndGlyphs" stroke="#1a1a1a" stroke-width="0.05">1</text>
<text x="636.30" y="377.15" font-size="5.985" fill="#1a1a1a" xml:space="preserve" textLength="21.86" lengthAdjust="spacingAndGlyphs" stroke="#1a1a1a" stroke-width="0.05"> January</text>
<text x="683.55" y="377.15" font-size="5.7225" fill="#1a1a1a" textLength="11.51" lengthAdjust="spacingAndGlyphs" stroke="#1a1a1a" stroke-width="0.05">2014</text>
<path d="M682.55 370.80 L685.15 370.80 L682.55 372.95Z" fill="#1a8a36"/>
<text x="11.90" y="385.25" font-size="5.985" fill="#1a1a1a" clip-path="url(#cc0)" textLength="25.98" lengthAdjust="spacingAndGlyphs" stroke="#1a1a1a" stroke-width="0.05">Enterprise</text>
<text x="57.80" y="385.25" font-size="5.985" fill="#1a1a1a" clip-path="url(#cc1)" textLength="17.74" lengthAdjust="spacingAndGlyphs" stroke="#1a1a1a" stroke-width="0.05">France</text>
<text x="132.90" y="385.25" font-size="5.985" fill="#1a1a1a" xml:space="preserve" textLength="12.68" lengthAdjust="spacingAndGlyphs" stroke="#1a1a1a" stroke-width="0.05"> Velo</text>
<text x="172.90" y="385.25" font-size="5.985" fill="#1a1a1a" xml:space="preserve" textLength="15.21" lengthAdjust="spacingAndGlyphs" stroke="#1a1a1a" stroke-width="0.05"> None</text>
<text x="260.80" y="385.25" font-size="5.7225" fill="#1a1a1a" text-anchor="end" textLength="11.51" lengthAdjust="spacingAndGlyphs" stroke="#1a1a1a" stroke-width="0.05">1804</text>
<text x="265.20" y="385.25" font-size="5.723" fill="#1a1a1a" textLength="3.03" lengthAdjust="spacingAndGlyphs" stroke="#1a1a1a" stroke-width="0.05">$</text>
<text x="299.60" y="385.25" font-size="5.7225" fill="#1a1a1a" text-anchor="end" textLength="15.83" lengthAdjust="spacingAndGlyphs" stroke="#1a1a1a" stroke-width="0.05">120.00</text>
<text x="305.40" y="385.25" font-size="5.723" fill="#1a1a1a" textLength="3.03" lengthAdjust="spacingAndGlyphs" stroke="#1a1a1a" stroke-width="0.05">$</text>
<text x="334.70" y="385.25" font-size="5.7225" fill="#1a1a1a" text-anchor="end" textLength="15.83" lengthAdjust="spacingAndGlyphs" stroke="#1a1a1a" stroke-width="0.05">125.00</text>
<text x="340.50" y="385.25" font-size="5.723" fill="#1a1a1a" textLength="3.03" lengthAdjust="spacingAndGlyphs" stroke="#1a1a1a" stroke-width="0.05">$</text>
<text x="375.30" y="385.25" font-size="5.7225" fill="#1a1a1a" text-anchor="end" textLength="25.88" lengthAdjust="spacingAndGlyphs" stroke="#1a1a1a" stroke-width="0.05">225,500.00</text>
<text x="418.75" y="385.25" font-size="5.723" fill="#1a1a1a" textLength="3.03" lengthAdjust="spacingAndGlyphs" stroke="#1a1a1a" stroke-width="0.05">$</text>
<text x="462.80" y="385.25" font-size="5.7225" fill="#1a1a1a" text-anchor="end" textLength="25.88" lengthAdjust="spacingAndGlyphs" stroke="#1a1a1a" stroke-width="0.05">225,500.00</text>
<text x="381.10" y="385.25" font-size="5.723" fill="#1a1a1a" textLength="3.03" lengthAdjust="spacingAndGlyphs" stroke="#1a1a1a" stroke-width="0.05">$</text>
<text x="406.75" y="385.25" font-size="5.7225" fill="#1a1a1a" text-anchor="end" textLength="1.74" lengthAdjust="spacingAndGlyphs" stroke="#1a1a1a" stroke-width="0.05">-</text>
<text x="468.60" y="385.25" font-size="5.723" fill="#1a1a1a" textLength="3.03" lengthAdjust="spacingAndGlyphs" stroke="#1a1a1a" stroke-width="0.05">$</text>
<text x="498.45" y="385.25" font-size="5.7225" fill="#1a1a1a" text-anchor="end" textLength="25.88" lengthAdjust="spacingAndGlyphs" stroke="#1a1a1a" stroke-width="0.05">216,480.00</text>
<text x="504.25" y="385.25" font-size="5.723" fill="#1a1a1a" textLength="3.03" lengthAdjust="spacingAndGlyphs" stroke="#1a1a1a" stroke-width="0.05">$</text>
<text x="550.70" y="385.25" font-size="5.7225" fill="#1a1a1a" text-anchor="end" textLength="20.12" lengthAdjust="spacingAndGlyphs" stroke="#1a1a1a" stroke-width="0.05">9,020.00</text>
<text x="585.05" y="385.25" font-size="5.7225" fill="#1a1a1a" text-anchor="end" textLength="22.04" lengthAdjust="spacingAndGlyphs" stroke="#1a1a1a" stroke-width="0.05">2/1/2014</text>
<text x="633.70" y="385.25" font-size="5.7225" fill="#1a1a1a" text-anchor="end" textLength="2.88" lengthAdjust="spacingAndGlyphs" stroke="#1a1a1a" stroke-width="0.05">2</text>
<text x="636.30" y="385.25" font-size="5.985" fill="#1a1a1a" xml:space="preserve" textLength="24.39" lengthAdjust="spacingAndGlyphs" stroke="#1a1a1a" stroke-width="0.05"> February</text>
<text x="683.55" y="385.25" font-size="5.7225" fill="#1a1a1a" textLength="11.51" lengthAdjust="spacingAndGlyphs" stroke="#1a1a1a" stroke-width="0.05">2014</text>
<path d="M682.55 378.90 L685.15 378.90 L682.55 381.05Z" fill="#1a8a36"/>
<text x="11.90" y="393.34" font-size="5.985" fill="#1a1a1a" clip-path="url(#cc0)" textLength="44.36" lengthAdjust="spacingAndGlyphs" stroke="#1a1a1a" stroke-width="0.05">Channel Partners</text>
<text x="57.80" y="393.34" font-size="5.985" fill="#1a1a1a" clip-path="url(#cc1)" textLength="23.44" lengthAdjust="spacingAndGlyphs" stroke="#1a1a1a" stroke-width="0.05">Germany</text>
<text x="132.90" y="393.34" font-size="5.985" fill="#1a1a1a" xml:space="preserve" textLength="12.68" lengthAdjust="spacingAndGlyphs" stroke="#1a1a1a" stroke-width="0.05"> Velo</text>
<text x="172.90" y="393.34" font-size="5.985" fill="#1a1a1a" xml:space="preserve" textLength="15.21" lengthAdjust="spacingAndGlyphs" stroke="#1a1a1a" stroke-width="0.05"> None</text>
<text x="260.80" y="393.34" font-size="5.7225" fill="#1a1a1a" text-anchor="end" textLength="11.51" lengthAdjust="spacingAndGlyphs" stroke="#1a1a1a" stroke-width="0.05">2161</text>
<text x="265.20" y="393.34" font-size="5.723" fill="#1a1a1a" textLength="3.03" lengthAdjust="spacingAndGlyphs" stroke="#1a1a1a" stroke-width="0.05">$</text>
<text x="299.60" y="393.34" font-size="5.7225" fill="#1a1a1a" text-anchor="end" textLength="15.83" lengthAdjust="spacingAndGlyphs" stroke="#1a1a1a" stroke-width="0.05">120.00</text>
<text x="305.40" y="393.34" font-size="5.723" fill="#1a1a1a" textLength="3.03" lengthAdjust="spacingAndGlyphs" stroke="#1a1a1a" stroke-width="0.05">$</text>
<text x="334.70" y="393.34" font-size="5.7225" fill="#1a1a1a" text-anchor="end" textLength="12.95" lengthAdjust="spacingAndGlyphs" stroke="#1a1a1a" stroke-width="0.05">12.00</text>
<text x="340.50" y="393.34" font-size="5.723" fill="#1a1a1a" textLength="3.03" lengthAdjust="spacingAndGlyphs" stroke="#1a1a1a" stroke-width="0.05">$</text>
<text x="375.30" y="393.34" font-size="5.7225" fill="#1a1a1a" text-anchor="end" textLength="23.00" lengthAdjust="spacingAndGlyphs" stroke="#1a1a1a" stroke-width="0.05">25,932.00</text>
<text x="418.75" y="393.34" font-size="5.723" fill="#1a1a1a" textLength="3.03" lengthAdjust="spacingAndGlyphs" stroke="#1a1a1a" stroke-width="0.05">$</text>
<text x="462.80" y="393.34" font-size="5.7225" fill="#1a1a1a" text-anchor="end" textLength="23.00" lengthAdjust="spacingAndGlyphs" stroke="#1a1a1a" stroke-width="0.05">25,932.00</text>
<text x="381.10" y="393.34" font-size="5.723" fill="#1a1a1a" textLength="3.03" lengthAdjust="spacingAndGlyphs" stroke="#1a1a1a" stroke-width="0.05">$</text>
<text x="406.75" y="393.34" font-size="5.7225" fill="#1a1a1a" text-anchor="end" textLength="1.74" lengthAdjust="spacingAndGlyphs" stroke="#1a1a1a" stroke-width="0.05">-</text>
<text x="468.60" y="393.34" font-size="5.723" fill="#1a1a1a" textLength="3.03" lengthAdjust="spacingAndGlyphs" stroke="#1a1a1a" stroke-width="0.05">$</text>
<text x="498.45" y="393.34" font-size="5.7225" fill="#1a1a1a" text-anchor="end" textLength="25.88" lengthAdjust="spacingAndGlyphs" stroke="#1a1a1a" stroke-width="0.05">259,320.00</text>
<text x="504.25" y="393.34" font-size="5.723" fill="#1a1a1a" textLength="3.03" lengthAdjust="spacingAndGlyphs" stroke="#1a1a1a" stroke-width="0.05">$</text>
<text x="550.70" y="393.34" font-size="5.7225" fill="#1a1a1a" text-anchor="end" textLength="27.62" lengthAdjust="spacingAndGlyphs" stroke="#1a1a1a" stroke-width="0.05">-233,388.00</text>
<text x="585.05" y="393.34" font-size="5.7225" fill="#1a1a1a" text-anchor="end" textLength="22.04" lengthAdjust="spacingAndGlyphs" stroke="#1a1a1a" stroke-width="0.05">3/1/2014</text>
<text x="633.70" y="393.34" font-size="5.7225" fill="#1a1a1a" text-anchor="end" textLength="2.88" lengthAdjust="spacingAndGlyphs" stroke="#1a1a1a" stroke-width="0.05">3</text>
<text x="636.30" y="393.34" font-size="5.985" fill="#1a1a1a" xml:space="preserve" textLength="17.42" lengthAdjust="spacingAndGlyphs" stroke="#1a1a1a" stroke-width="0.05"> March</text>
<text x="683.55" y="393.34" font-size="5.7225" fill="#1a1a1a" textLength="11.51" lengthAdjust="spacingAndGlyphs" stroke="#1a1a1a" stroke-width="0.05">2014</text>
<path d="M682.55 387.00 L685.15 387.00 L682.55 389.15Z" fill="#1a8a36"/>
<text x="11.90" y="401.44" font-size="5.985" fill="#1a1a1a" clip-path="url(#cc0)" textLength="31.36" lengthAdjust="spacingAndGlyphs" stroke="#1a1a1a" stroke-width="0.05">Government</text>
<text x="57.80" y="401.44" font-size="5.985" fill="#1a1a1a" clip-path="url(#cc1)" textLength="23.44" lengthAdjust="spacingAndGlyphs" stroke="#1a1a1a" stroke-width="0.05">Germany</text>
<text x="132.90" y="401.44" font-size="5.985" fill="#1a1a1a" xml:space="preserve" textLength="12.68" lengthAdjust="spacingAndGlyphs" stroke="#1a1a1a" stroke-width="0.05"> Velo</text>
<text x="172.90" y="401.44" font-size="5.985" fill="#1a1a1a" xml:space="preserve" textLength="15.21" lengthAdjust="spacingAndGlyphs" stroke="#1a1a1a" stroke-width="0.05"> None</text>
<text x="260.80" y="401.44" font-size="5.7225" fill="#1a1a1a" text-anchor="end" textLength="11.51" lengthAdjust="spacingAndGlyphs" stroke="#1a1a1a" stroke-width="0.05">1006</text>
<text x="265.20" y="401.44" font-size="5.723" fill="#1a1a1a" textLength="3.03" lengthAdjust="spacingAndGlyphs" stroke="#1a1a1a" stroke-width="0.05">$</text>
<text x="299.60" y="401.44" font-size="5.7225" fill="#1a1a1a" text-anchor="end" textLength="15.83" lengthAdjust="spacingAndGlyphs" stroke="#1a1a1a" stroke-width="0.05">120.00</text>
<text x="305.40" y="401.44" font-size="5.723" fill="#1a1a1a" textLength="3.03" lengthAdjust="spacingAndGlyphs" stroke="#1a1a1a" stroke-width="0.05">$</text>
<text x="334.70" y="401.44" font-size="5.7225" fill="#1a1a1a" text-anchor="end" textLength="15.83" lengthAdjust="spacingAndGlyphs" stroke="#1a1a1a" stroke-width="0.05">350.00</text>
<text x="340.50" y="401.44" font-size="5.723" fill="#1a1a1a" textLength="3.03" lengthAdjust="spacingAndGlyphs" stroke="#1a1a1a" stroke-width="0.05">$</text>
<text x="375.30" y="401.44" font-size="5.7225" fill="#1a1a1a" text-anchor="end" textLength="25.88" lengthAdjust="spacingAndGlyphs" stroke="#1a1a1a" stroke-width="0.05">352,100.00</text>
<text x="418.75" y="401.44" font-size="5.723" fill="#1a1a1a" textLength="3.03" lengthAdjust="spacingAndGlyphs" stroke="#1a1a1a" stroke-width="0.05">$</text>
<text x="462.80" y="401.44" font-size="5.7225" fill="#1a1a1a" text-anchor="end" textLength="25.88" lengthAdjust="spacingAndGlyphs" stroke="#1a1a1a" stroke-width="0.05">352,100.00</text>
<text x="381.10" y="401.44" font-size="5.723" fill="#1a1a1a" textLength="3.03" lengthAdjust="spacingAndGlyphs" stroke="#1a1a1a" stroke-width="0.05">$</text>
<text x="406.75" y="401.44" font-size="5.7225" fill="#1a1a1a" text-anchor="end" textLength="1.74" lengthAdjust="spacingAndGlyphs" stroke="#1a1a1a" stroke-width="0.05">-</text>
<text x="468.60" y="401.44" font-size="5.723" fill="#1a1a1a" textLength="3.03" lengthAdjust="spacingAndGlyphs" stroke="#1a1a1a" stroke-width="0.05">$</text>
<text x="498.45" y="401.44" font-size="5.7225" fill="#1a1a1a" text-anchor="end" textLength="25.88" lengthAdjust="spacingAndGlyphs" stroke="#1a1a1a" stroke-width="0.05">120,720.00</text>
<text x="504.25" y="401.44" font-size="5.723" fill="#1a1a1a" textLength="3.03" lengthAdjust="spacingAndGlyphs" stroke="#1a1a1a" stroke-width="0.05">$</text>
<text x="550.70" y="401.44" font-size="5.7225" fill="#1a1a1a" text-anchor="end" textLength="25.88" lengthAdjust="spacingAndGlyphs" stroke="#1a1a1a" stroke-width="0.05">231,380.00</text>
<text x="585.05" y="401.44" font-size="5.7225" fill="#1a1a1a" text-anchor="end" textLength="22.04" lengthAdjust="spacingAndGlyphs" stroke="#1a1a1a" stroke-width="0.05">6/1/2014</text>
<text x="633.70" y="401.44" font-size="5.7225" fill="#1a1a1a" text-anchor="end" textLength="2.88" lengthAdjust="spacingAndGlyphs" stroke="#1a1a1a" stroke-width="0.05">6</text>
<text x="636.30" y="401.44" font-size="5.985" fill="#1a1a1a" xml:space="preserve" textLength="13.94" lengthAdjust="spacingAndGlyphs" stroke="#1a1a1a" stroke-width="0.05"> June</text>
<text x="683.55" y="401.44" font-size="5.7225" fill="#1a1a1a" textLength="11.51" lengthAdjust="spacingAndGlyphs" stroke="#1a1a1a" stroke-width="0.05">2014</text>
<path d="M682.55 395.09 L685.15 395.09 L682.55 397.25Z" fill="#1a8a36"/>
<text x="11.90" y="409.54" font-size="5.985" fill="#1a1a1a" clip-path="url(#cc0)" textLength="44.36" lengthAdjust="spacingAndGlyphs" stroke="#1a1a1a" stroke-width="0.05">Channel Partners</text>
<text x="57.80" y="409.54" font-size="5.985" fill="#1a1a1a" clip-path="url(#cc1)" textLength="23.44" lengthAdjust="spacingAndGlyphs" stroke="#1a1a1a" stroke-width="0.05">Germany</text>
<text x="132.90" y="409.54" font-size="5.985" fill="#1a1a1a" xml:space="preserve" textLength="12.68" lengthAdjust="spacingAndGlyphs" stroke="#1a1a1a" stroke-width="0.05"> Velo</text>
<text x="172.90" y="409.54" font-size="5.985" fill="#1a1a1a" xml:space="preserve" textLength="15.21" lengthAdjust="spacingAndGlyphs" stroke="#1a1a1a" stroke-width="0.05"> None</text>
<text x="260.80" y="409.54" font-size="5.7225" fill="#1a1a1a" text-anchor="end" textLength="11.51" lengthAdjust="spacingAndGlyphs" stroke="#1a1a1a" stroke-width="0.05">1545</text>
<text x="265.20" y="409.54" font-size="5.723" fill="#1a1a1a" textLength="3.03" lengthAdjust="spacingAndGlyphs" stroke="#1a1a1a" stroke-width="0.05">$</text>
<text x="299.60" y="409.54" font-size="5.7225" fill="#1a1a1a" text-anchor="end" textLength="15.83" lengthAdjust="spacingAndGlyphs" stroke="#1a1a1a" stroke-width="0.05">120.00</text>
<text x="305.40" y="409.54" font-size="5.723" fill="#1a1a1a" textLength="3.03" lengthAdjust="spacingAndGlyphs" stroke="#1a1a1a" stroke-width="0.05">$</text>
<text x="334.70" y="409.54" font-size="5.7225" fill="#1a1a1a" text-anchor="end" textLength="12.95" lengthAdjust="spacingAndGlyphs" stroke="#1a1a1a" stroke-width="0.05">12.00</text>
<text x="340.50" y="409.54" font-size="5.723" fill="#1a1a1a" textLength="3.03" lengthAdjust="spacingAndGlyphs" stroke="#1a1a1a" stroke-width="0.05">$</text>
<text x="375.30" y="409.54" font-size="5.7225" fill="#1a1a1a" text-anchor="end" textLength="23.00" lengthAdjust="spacingAndGlyphs" stroke="#1a1a1a" stroke-width="0.05">18,540.00</text>
<text x="418.75" y="409.54" font-size="5.723" fill="#1a1a1a" textLength="3.03" lengthAdjust="spacingAndGlyphs" stroke="#1a1a1a" stroke-width="0.05">$</text>
<text x="462.80" y="409.54" font-size="5.7225" fill="#1a1a1a" text-anchor="end" textLength="23.00" lengthAdjust="spacingAndGlyphs" stroke="#1a1a1a" stroke-width="0.05">18,540.00</text>
<text x="381.10" y="409.54" font-size="5.723" fill="#1a1a1a" textLength="3.03" lengthAdjust="spacingAndGlyphs" stroke="#1a1a1a" stroke-width="0.05">$</text>
<text x="406.75" y="409.54" font-size="5.7225" fill="#1a1a1a" text-anchor="end" textLength="1.74" lengthAdjust="spacingAndGlyphs" stroke="#1a1a1a" stroke-width="0.05">-</text>
<text x="468.60" y="409.54" font-size="5.723" fill="#1a1a1a" textLength="3.03" lengthAdjust="spacingAndGlyphs" stroke="#1a1a1a" stroke-width="0.05">$</text>
<text x="498.45" y="409.54" font-size="5.7225" fill="#1a1a1a" text-anchor="end" textLength="25.88" lengthAdjust="spacingAndGlyphs" stroke="#1a1a1a" stroke-width="0.05">185,400.00</text>
<text x="504.25" y="409.54" font-size="5.723" fill="#1a1a1a" textLength="3.03" lengthAdjust="spacingAndGlyphs" stroke="#1a1a1a" stroke-width="0.05">$</text>
<text x="550.70" y="409.54" font-size="5.7225" fill="#1a1a1a" text-anchor="end" textLength="27.62" lengthAdjust="spacingAndGlyphs" stroke="#1a1a1a" stroke-width="0.05">-166,860.00</text>
<text x="585.05" y="409.54" font-size="5.7225" fill="#1a1a1a" text-anchor="end" textLength="22.04" lengthAdjust="spacingAndGlyphs" stroke="#1a1a1a" stroke-width="0.05">6/1/2014</text>
<text x="633.70" y="409.54" font-size="5.7225" fill="#1a1a1a" text-anchor="end" textLength="2.88" lengthAdjust="spacingAndGlyphs" stroke="#1a1a1a" stroke-width="0.05">6</text>
<text x="636.30" y="409.54" font-size="5.985" fill="#1a1a1a" xml:space="preserve" textLength="13.94" lengthAdjust="spacingAndGlyphs" stroke="#1a1a1a" stroke-width="0.05"> June</text>
<text x="683.55" y="409.54" font-size="5.7225" fill="#1a1a1a" textLength="11.51" lengthAdjust="spacingAndGlyphs" stroke="#1a1a1a" stroke-width="0.05">2014</text>
<path d="M682.55 403.19 L685.15 403.19 L682.55 405.34Z" fill="#1a8a36"/>
<text x="11.90" y="417.64" font-size="5.985" fill="#1a1a1a" clip-path="url(#cc0)" textLength="25.98" lengthAdjust="spacingAndGlyphs" stroke="#1a1a1a" stroke-width="0.05">Enterprise</text>
<text x="57.80" y="417.64" font-size="5.985" fill="#1a1a1a" clip-path="url(#cc1)" textLength="62.73" lengthAdjust="spacingAndGlyphs" stroke="#1a1a1a" stroke-width="0.05">United States of America</text>
<text x="132.90" y="417.64" font-size="5.985" fill="#1a1a1a" xml:space="preserve" textLength="12.68" lengthAdjust="spacingAndGlyphs" stroke="#1a1a1a" stroke-width="0.05"> Velo</text>
<text x="172.90" y="417.64" font-size="5.985" fill="#1a1a1a" xml:space="preserve" textLength="15.21" lengthAdjust="spacingAndGlyphs" stroke="#1a1a1a" stroke-width="0.05"> None</text>
<text x="260.80" y="417.64" font-size="5.7225" fill="#1a1a1a" text-anchor="end" textLength="11.51" lengthAdjust="spacingAndGlyphs" stroke="#1a1a1a" stroke-width="0.05">2821</text>
<text x="265.20" y="417.64" font-size="5.723" fill="#1a1a1a" textLength="3.03" lengthAdjust="spacingAndGlyphs" stroke="#1a1a1a" stroke-width="0.05">$</text>
<text x="299.60" y="417.64" font-size="5.7225" fill="#1a1a1a" text-anchor="end" textLength="15.83" lengthAdjust="spacingAndGlyphs" stroke="#1a1a1a" stroke-width="0.05">120.00</text>
<text x="305.40" y="417.64" font-size="5.723" fill="#1a1a1a" textLength="3.03" lengthAdjust="spacingAndGlyphs" stroke="#1a1a1a" stroke-width="0.05">$</text>
<text x="334.70" y="417.64" font-size="5.7225" fill="#1a1a1a" text-anchor="end" textLength="15.83" lengthAdjust="spacingAndGlyphs" stroke="#1a1a1a" stroke-width="0.05">125.00</text>
<text x="340.50" y="417.64" font-size="5.723" fill="#1a1a1a" textLength="3.03" lengthAdjust="spacingAndGlyphs" stroke="#1a1a1a" stroke-width="0.05">$</text>
<text x="375.30" y="417.64" font-size="5.7225" fill="#1a1a1a" text-anchor="end" textLength="25.88" lengthAdjust="spacingAndGlyphs" stroke="#1a1a1a" stroke-width="0.05">352,625.00</text>
<text x="418.75" y="417.64" font-size="5.723" fill="#1a1a1a" textLength="3.03" lengthAdjust="spacingAndGlyphs" stroke="#1a1a1a" stroke-width="0.05">$</text>
<text x="462.80" y="417.64" font-size="5.7225" fill="#1a1a1a" text-anchor="end" textLength="25.88" lengthAdjust="spacingAndGlyphs" stroke="#1a1a1a" stroke-width="0.05">352,625.00</text>
<text x="381.10" y="417.64" font-size="5.723" fill="#1a1a1a" textLength="3.03" lengthAdjust="spacingAndGlyphs" stroke="#1a1a1a" stroke-width="0.05">$</text>
<text x="406.75" y="417.64" font-size="5.7225" fill="#1a1a1a" text-anchor="end" textLength="1.74" lengthAdjust="spacingAndGlyphs" stroke="#1a1a1a" stroke-width="0.05">-</text>
<text x="468.60" y="417.64" font-size="5.723" fill="#1a1a1a" textLength="3.03" lengthAdjust="spacingAndGlyphs" stroke="#1a1a1a" stroke-width="0.05">$</text>
<text x="498.45" y="417.64" font-size="5.7225" fill="#1a1a1a" text-anchor="end" textLength="25.88" lengthAdjust="spacingAndGlyphs" stroke="#1a1a1a" stroke-width="0.05">338,520.00</text>
<text x="504.25" y="417.64" font-size="5.723" fill="#1a1a1a" textLength="3.03" lengthAdjust="spacingAndGlyphs" stroke="#1a1a1a" stroke-width="0.05">$</text>
<text x="550.70" y="417.64" font-size="5.7225" fill="#1a1a1a" text-anchor="end" textLength="23.00" lengthAdjust="spacingAndGlyphs" stroke="#1a1a1a" stroke-width="0.05">14,105.00</text>
<text x="585.05" y="417.64" font-size="5.7225" fill="#1a1a1a" text-anchor="end" textLength="22.04" lengthAdjust="spacingAndGlyphs" stroke="#1a1a1a" stroke-width="0.05">8/1/2014</text>
<text x="633.70" y="417.64" font-size="5.7225" fill="#1a1a1a" text-anchor="end" textLength="2.88" lengthAdjust="spacingAndGlyphs" stroke="#1a1a1a" stroke-width="0.05">8</text>
<text x="636.30" y="417.64" font-size="5.985" fill="#1a1a1a" xml:space="preserve" textLength="19.01" lengthAdjust="spacingAndGlyphs" stroke="#1a1a1a" stroke-width="0.05"> August</text>
<text x="683.55" y="417.64" font-size="5.7225" fill="#1a1a1a" textLength="11.51" lengthAdjust="spacingAndGlyphs" stroke="#1a1a1a" stroke-width="0.05">2014</text>
<path d="M682.55 411.29 L685.15 411.29 L682.55 413.44Z" fill="#1a8a36"/>
<text x="11.90" y="425.73" font-size="5.985" fill="#1a1a1a" clip-path="url(#cc0)" textLength="25.98" lengthAdjust="spacingAndGlyphs" stroke="#1a1a1a" stroke-width="0.05">Enterprise</text>
<text x="57.80" y="425.73" font-size="5.985" fill="#1a1a1a" clip-path="url(#cc1)" textLength="19.97" lengthAdjust="spacingAndGlyphs" stroke="#1a1a1a" stroke-width="0.05">Canada</text>
<text x="132.90" y="425.73" font-size="5.985" fill="#1a1a1a" xml:space="preserve" textLength="12.68" lengthAdjust="spacingAndGlyphs" stroke="#1a1a1a" stroke-width="0.05"> Velo</text>
<text x="172.90" y="425.73" font-size="5.985" fill="#1a1a1a" xml:space="preserve" textLength="15.21" lengthAdjust="spacingAndGlyphs" stroke="#1a1a1a" stroke-width="0.05"> None</text>
<text x="260.80" y="425.73" font-size="5.7225" fill="#1a1a1a" text-anchor="end" textLength="8.64" lengthAdjust="spacingAndGlyphs" stroke="#1a1a1a" stroke-width="0.05">345</text>
<text x="265.20" y="425.73" font-size="5.723" fill="#1a1a1a" textLength="3.03" lengthAdjust="spacingAndGlyphs" stroke="#1a1a1a" stroke-width="0.05">$</text>
<text x="299.60" y="425.73" font-size="5.7225" fill="#1a1a1a" text-anchor="end" textLength="15.83" lengthAdjust="spacingAndGlyphs" stroke="#1a1a1a" stroke-width="0.05">120.00</text>
<text x="305.40" y="425.73" font-size="5.723" fill="#1a1a1a" textLength="3.03" lengthAdjust="spacingAndGlyphs" stroke="#1a1a1a" stroke-width="0.05">$</text>
<text x="334.70" y="425.73" font-size="5.7225" fill="#1a1a1a" text-anchor="end" textLength="15.83" lengthAdjust="spacingAndGlyphs" stroke="#1a1a1a" stroke-width="0.05">125.00</text>
<text x="340.50" y="425.73" font-size="5.723" fill="#1a1a1a" textLength="3.03" lengthAdjust="spacingAndGlyphs" stroke="#1a1a1a" stroke-width="0.05">$</text>
<text x="375.30" y="425.73" font-size="5.7225" fill="#1a1a1a" text-anchor="end" textLength="23.00" lengthAdjust="spacingAndGlyphs" stroke="#1a1a1a" stroke-width="0.05">43,125.00</text>
<text x="418.75" y="425.73" font-size="5.723" fill="#1a1a1a" textLength="3.03" lengthAdjust="spacingAndGlyphs" stroke="#1a1a1a" stroke-width="0.05">$</text>
<text x="462.80" y="425.73" font-size="5.7225" fill="#1a1a1a" text-anchor="end" textLength="23.00" lengthAdjust="spacingAndGlyphs" stroke="#1a1a1a" stroke-width="0.05">43,125.00</text>
<text x="381.10" y="425.73" font-size="5.723" fill="#1a1a1a" textLength="3.03" lengthAdjust="spacingAndGlyphs" stroke="#1a1a1a" stroke-width="0.05">$</text>
<text x="406.75" y="425.73" font-size="5.7225" fill="#1a1a1a" text-anchor="end" textLength="1.74" lengthAdjust="spacingAndGlyphs" stroke="#1a1a1a" stroke-width="0.05">-</text>
<text x="468.60" y="425.73" font-size="5.723" fill="#1a1a1a" textLength="3.03" lengthAdjust="spacingAndGlyphs" stroke="#1a1a1a" stroke-width="0.05">$</text>
<text x="498.45" y="425.73" font-size="5.7225" fill="#1a1a1a" text-anchor="end" textLength="23.00" lengthAdjust="spacingAndGlyphs" stroke="#1a1a1a" stroke-width="0.05">41,400.00</text>
<text x="504.25" y="425.73" font-size="5.723" fill="#1a1a1a" textLength="3.03" lengthAdjust="spacingAndGlyphs" stroke="#1a1a1a" stroke-width="0.05">$</text>
<text x="550.70" y="425.73" font-size="5.7225" fill="#1a1a1a" text-anchor="end" textLength="20.12" lengthAdjust="spacingAndGlyphs" stroke="#1a1a1a" stroke-width="0.05">1,725.00</text>
<text x="585.05" y="425.73" font-size="5.7225" fill="#1a1a1a" text-anchor="end" textLength="24.92" lengthAdjust="spacingAndGlyphs" stroke="#1a1a1a" stroke-width="0.05">10/1/2013</text>
<text x="633.70" y="425.73" font-size="5.7225" fill="#1a1a1a" text-anchor="end" textLength="5.76" lengthAdjust="spacingAndGlyphs" stroke="#1a1a1a" stroke-width="0.05">10</text>
<text x="636.30" y="425.73" font-size="5.985" fill="#1a1a1a" xml:space="preserve" textLength="21.86" lengthAdjust="spacingAndGlyphs" stroke="#1a1a1a" stroke-width="0.05"> October</text>
<text x="683.55" y="425.73" font-size="5.7225" fill="#1a1a1a" textLength="11.51" lengthAdjust="spacingAndGlyphs" stroke="#1a1a1a" stroke-width="0.05">2013</text>
<path d="M682.55 419.39 L685.15 419.39 L682.55 421.54Z" fill="#1a8a36"/>
<text x="11.90" y="433.83" font-size="5.985" fill="#1a1a1a" clip-path="url(#cc0)" textLength="38.97" lengthAdjust="spacingAndGlyphs" stroke="#1a1a1a" stroke-width="0.05">Small Business</text>
<text x="57.80" y="433.83" font-size="5.985" fill="#1a1a1a" clip-path="url(#cc1)" textLength="19.97" lengthAdjust="spacingAndGlyphs" stroke="#1a1a1a" stroke-width="0.05">Canada</text>
<text x="132.90" y="433.83" font-size="5.985" fill="#1a1a1a" xml:space="preserve" textLength="12.35" lengthAdjust="spacingAndGlyphs" stroke="#1a1a1a" stroke-width="0.05"> VTT</text>
<text x="172.90" y="433.83" font-size="5.985" fill="#1a1a1a" xml:space="preserve" textLength="15.21" lengthAdjust="spacingAndGlyphs" stroke="#1a1a1a" stroke-width="0.05"> None</text>
<text x="260.80" y="433.83" font-size="5.7225" fill="#1a1a1a" text-anchor="end" textLength="11.51" lengthAdjust="spacingAndGlyphs" stroke="#1a1a1a" stroke-width="0.05">2001</text>
<text x="265.20" y="433.83" font-size="5.723" fill="#1a1a1a" textLength="3.03" lengthAdjust="spacingAndGlyphs" stroke="#1a1a1a" stroke-width="0.05">$</text>
<text x="299.60" y="433.83" font-size="5.7225" fill="#1a1a1a" text-anchor="end" textLength="15.83" lengthAdjust="spacingAndGlyphs" stroke="#1a1a1a" stroke-width="0.05">250.00</text>
<text x="305.40" y="433.83" font-size="5.723" fill="#1a1a1a" textLength="3.03" lengthAdjust="spacingAndGlyphs" stroke="#1a1a1a" stroke-width="0.05">$</text>
<text x="334.70" y="433.83" font-size="5.7225" fill="#1a1a1a" text-anchor="end" textLength="15.83" lengthAdjust="spacingAndGlyphs" stroke="#1a1a1a" stroke-width="0.05">300.00</text>
<text x="340.50" y="433.83" font-size="5.723" fill="#1a1a1a" textLength="3.03" lengthAdjust="spacingAndGlyphs" stroke="#1a1a1a" stroke-width="0.05">$</text>
<text x="375.30" y="433.83" font-size="5.7225" fill="#1a1a1a" text-anchor="end" textLength="25.88" lengthAdjust="spacingAndGlyphs" stroke="#1a1a1a" stroke-width="0.05">600,300.00</text>
<text x="418.75" y="433.83" font-size="5.723" fill="#1a1a1a" textLength="3.03" lengthAdjust="spacingAndGlyphs" stroke="#1a1a1a" stroke-width="0.05">$</text>
<text x="462.80" y="433.83" font-size="5.7225" fill="#1a1a1a" text-anchor="end" textLength="25.88" lengthAdjust="spacingAndGlyphs" stroke="#1a1a1a" stroke-width="0.05">600,300.00</text>
<text x="381.10" y="433.83" font-size="5.723" fill="#1a1a1a" textLength="3.03" lengthAdjust="spacingAndGlyphs" stroke="#1a1a1a" stroke-width="0.05">$</text>
<text x="406.75" y="433.83" font-size="5.7225" fill="#1a1a1a" text-anchor="end" textLength="1.74" lengthAdjust="spacingAndGlyphs" stroke="#1a1a1a" stroke-width="0.05">-</text>
<text x="468.60" y="433.83" font-size="5.723" fill="#1a1a1a" textLength="3.03" lengthAdjust="spacingAndGlyphs" stroke="#1a1a1a" stroke-width="0.05">$</text>
<text x="498.45" y="433.83" font-size="5.7225" fill="#1a1a1a" text-anchor="end" textLength="25.88" lengthAdjust="spacingAndGlyphs" stroke="#1a1a1a" stroke-width="0.05">500,250.00</text>
<text x="504.25" y="433.83" font-size="5.723" fill="#1a1a1a" textLength="3.03" lengthAdjust="spacingAndGlyphs" stroke="#1a1a1a" stroke-width="0.05">$</text>
<text x="550.70" y="433.83" font-size="5.7225" fill="#1a1a1a" text-anchor="end" textLength="25.88" lengthAdjust="spacingAndGlyphs" stroke="#1a1a1a" stroke-width="0.05">100,050.00</text>
<text x="585.05" y="433.83" font-size="5.7225" fill="#1a1a1a" text-anchor="end" textLength="22.04" lengthAdjust="spacingAndGlyphs" stroke="#1a1a1a" stroke-width="0.05">2/1/2014</text>
<text x="633.70" y="433.83" font-size="5.7225" fill="#1a1a1a" text-anchor="end" textLength="2.88" lengthAdjust="spacingAndGlyphs" stroke="#1a1a1a" stroke-width="0.05">2</text>
<text x="636.30" y="433.83" font-size="5.985" fill="#1a1a1a" xml:space="preserve" textLength="24.39" lengthAdjust="spacingAndGlyphs" stroke="#1a1a1a" stroke-width="0.05"> February</text>
<text x="683.55" y="433.83" font-size="5.7225" fill="#1a1a1a" textLength="11.51" lengthAdjust="spacingAndGlyphs" stroke="#1a1a1a" stroke-width="0.05">2014</text>
<path d="M682.55 427.48 L685.15 427.48 L682.55 429.63Z" fill="#1a8a36"/>
<text x="11.90" y="441.93" font-size="5.985" fill="#1a1a1a" clip-path="url(#cc0)" textLength="44.36" lengthAdjust="spacingAndGlyphs" stroke="#1a1a1a" stroke-width="0.05">Channel Partners</text>
<text x="57.80" y="441.93" font-size="5.985" fill="#1a1a1a" clip-path="url(#cc1)" textLength="23.44" lengthAdjust="spacingAndGlyphs" stroke="#1a1a1a" stroke-width="0.05">Germany</text>
<text x="132.90" y="441.93" font-size="5.985" fill="#1a1a1a" xml:space="preserve" textLength="12.35" lengthAdjust="spacingAndGlyphs" stroke="#1a1a1a" stroke-width="0.05"> VTT</text>
<text x="172.90" y="441.93" font-size="5.985" fill="#1a1a1a" xml:space="preserve" textLength="15.21" lengthAdjust="spacingAndGlyphs" stroke="#1a1a1a" stroke-width="0.05"> None</text>
<text x="260.80" y="441.93" font-size="5.7225" fill="#1a1a1a" text-anchor="end" textLength="11.51" lengthAdjust="spacingAndGlyphs" stroke="#1a1a1a" stroke-width="0.05">2838</text>
<text x="265.20" y="441.93" font-size="5.723" fill="#1a1a1a" textLength="3.03" lengthAdjust="spacingAndGlyphs" stroke="#1a1a1a" stroke-width="0.05">$</text>
<text x="299.60" y="441.93" font-size="5.7225" fill="#1a1a1a" text-anchor="end" textLength="15.83" lengthAdjust="spacingAndGlyphs" stroke="#1a1a1a" stroke-width="0.05">250.00</text>
<text x="305.40" y="441.93" font-size="5.723" fill="#1a1a1a" textLength="3.03" lengthAdjust="spacingAndGlyphs" stroke="#1a1a1a" stroke-width="0.05">$</text>
<text x="334.70" y="441.93" font-size="5.7225" fill="#1a1a1a" text-anchor="end" textLength="12.95" lengthAdjust="spacingAndGlyphs" stroke="#1a1a1a" stroke-width="0.05">12.00</text>
<text x="340.50" y="441.93" font-size="5.723" fill="#1a1a1a" textLength="3.03" lengthAdjust="spacingAndGlyphs" stroke="#1a1a1a" stroke-width="0.05">$</text>
<text x="375.30" y="441.93" font-size="5.7225" fill="#1a1a1a" text-anchor="end" textLength="23.00" lengthAdjust="spacingAndGlyphs" stroke="#1a1a1a" stroke-width="0.05">34,056.00</text>
<text x="418.75" y="441.93" font-size="5.723" fill="#1a1a1a" textLength="3.03" lengthAdjust="spacingAndGlyphs" stroke="#1a1a1a" stroke-width="0.05">$</text>
<text x="462.80" y="441.93" font-size="5.7225" fill="#1a1a1a" text-anchor="end" textLength="23.00" lengthAdjust="spacingAndGlyphs" stroke="#1a1a1a" stroke-width="0.05">34,056.00</text>
<text x="381.10" y="441.93" font-size="5.723" fill="#1a1a1a" textLength="3.03" lengthAdjust="spacingAndGlyphs" stroke="#1a1a1a" stroke-width="0.05">$</text>
<text x="406.75" y="441.93" font-size="5.7225" fill="#1a1a1a" text-anchor="end" textLength="1.74" lengthAdjust="spacingAndGlyphs" stroke="#1a1a1a" stroke-width="0.05">-</text>
<text x="468.60" y="441.93" font-size="5.723" fill="#1a1a1a" textLength="3.03" lengthAdjust="spacingAndGlyphs" stroke="#1a1a1a" stroke-width="0.05">$</text>
<text x="498.45" y="441.93" font-size="5.7225" fill="#1a1a1a" text-anchor="end" textLength="25.88" lengthAdjust="spacingAndGlyphs" stroke="#1a1a1a" stroke-width="0.05">709,500.00</text>
<text x="504.25" y="441.93" font-size="5.723" fill="#1a1a1a" textLength="3.03" lengthAdjust="spacingAndGlyphs" stroke="#1a1a1a" stroke-width="0.05">$</text>
<text x="550.70" y="441.93" font-size="5.7225" fill="#1a1a1a" text-anchor="end" textLength="27.62" lengthAdjust="spacingAndGlyphs" stroke="#1a1a1a" stroke-width="0.05">-675,444.00</text>
<text x="585.05" y="441.93" font-size="5.7225" fill="#1a1a1a" text-anchor="end" textLength="22.04" lengthAdjust="spacingAndGlyphs" stroke="#1a1a1a" stroke-width="0.05">4/1/2014</text>
<text x="633.70" y="441.93" font-size="5.7225" fill="#1a1a1a" text-anchor="end" textLength="2.88" lengthAdjust="spacingAndGlyphs" stroke="#1a1a1a" stroke-width="0.05">4</text>
<text x="636.30" y="441.93" font-size="5.985" fill="#1a1a1a" xml:space="preserve" textLength="12.67" lengthAdjust="spacingAndGlyphs" stroke="#1a1a1a" stroke-width="0.05"> April</text>
<text x="683.55" y="441.93" font-size="5.7225" fill="#1a1a1a" textLength="11.51" lengthAdjust="spacingAndGlyphs" stroke="#1a1a1a" stroke-width="0.05">2014</text>
<path d="M682.55 435.58 L685.15 435.58 L682.55 437.73Z" fill="#1a8a36"/>
<text x="11.90" y="450.02" font-size="5.985" fill="#1a1a1a" clip-path="url(#cc0)" textLength="26.60" lengthAdjust="spacingAndGlyphs" stroke="#1a1a1a" stroke-width="0.05">Midmarket</text>
<text x="57.80" y="450.02" font-size="5.985" fill="#1a1a1a" clip-path="url(#cc1)" textLength="17.74" lengthAdjust="spacingAndGlyphs" stroke="#1a1a1a" stroke-width="0.05">France</text>
<text x="132.90" y="450.02" font-size="5.985" fill="#1a1a1a" xml:space="preserve" textLength="12.35" lengthAdjust="spacingAndGlyphs" stroke="#1a1a1a" stroke-width="0.05"> VTT</text>
<text x="172.90" y="450.02" font-size="5.985" fill="#1a1a1a" xml:space="preserve" textLength="15.21" lengthAdjust="spacingAndGlyphs" stroke="#1a1a1a" stroke-width="0.05"> None</text>
<text x="260.80" y="450.02" font-size="5.7225" fill="#1a1a1a" text-anchor="end" textLength="11.51" lengthAdjust="spacingAndGlyphs" stroke="#1a1a1a" stroke-width="0.05">2178</text>
<text x="265.20" y="450.02" font-size="5.723" fill="#1a1a1a" textLength="3.03" lengthAdjust="spacingAndGlyphs" stroke="#1a1a1a" stroke-width="0.05">$</text>
<text x="299.60" y="450.02" font-size="5.7225" fill="#1a1a1a" text-anchor="end" textLength="15.83" lengthAdjust="spacingAndGlyphs" stroke="#1a1a1a" stroke-width="0.05">250.00</text>
<text x="305.40" y="450.02" font-size="5.723" fill="#1a1a1a" textLength="3.03" lengthAdjust="spacingAndGlyphs" stroke="#1a1a1a" stroke-width="0.05">$</text>
<text x="334.70" y="450.02" font-size="5.7225" fill="#1a1a1a" text-anchor="end" textLength="12.95" lengthAdjust="spacingAndGlyphs" stroke="#1a1a1a" stroke-width="0.05">15.00</text>
<text x="340.50" y="450.02" font-size="5.723" fill="#1a1a1a" textLength="3.03" lengthAdjust="spacingAndGlyphs" stroke="#1a1a1a" stroke-width="0.05">$</text>
<text x="375.30" y="450.02" font-size="5.7225" fill="#1a1a1a" text-anchor="end" textLength="23.00" lengthAdjust="spacingAndGlyphs" stroke="#1a1a1a" stroke-width="0.05">32,670.00</text>
<text x="418.75" y="450.02" font-size="5.723" fill="#1a1a1a" textLength="3.03" lengthAdjust="spacingAndGlyphs" stroke="#1a1a1a" stroke-width="0.05">$</text>
<text x="462.80" y="450.02" font-size="5.7225" fill="#1a1a1a" text-anchor="end" textLength="23.00" lengthAdjust="spacingAndGlyphs" stroke="#1a1a1a" stroke-width="0.05">32,670.00</text>
<text x="381.10" y="450.02" font-size="5.723" fill="#1a1a1a" textLength="3.03" lengthAdjust="spacingAndGlyphs" stroke="#1a1a1a" stroke-width="0.05">$</text>
<text x="406.75" y="450.02" font-size="5.7225" fill="#1a1a1a" text-anchor="end" textLength="1.74" lengthAdjust="spacingAndGlyphs" stroke="#1a1a1a" stroke-width="0.05">-</text>
<text x="468.60" y="450.02" font-size="5.723" fill="#1a1a1a" textLength="3.03" lengthAdjust="spacingAndGlyphs" stroke="#1a1a1a" stroke-width="0.05">$</text>
<text x="498.45" y="450.02" font-size="5.7225" fill="#1a1a1a" text-anchor="end" textLength="25.88" lengthAdjust="spacingAndGlyphs" stroke="#1a1a1a" stroke-width="0.05">544,500.00</text>
<text x="504.25" y="450.02" font-size="5.723" fill="#1a1a1a" textLength="3.03" lengthAdjust="spacingAndGlyphs" stroke="#1a1a1a" stroke-width="0.05">$</text>
<text x="550.70" y="450.02" font-size="5.7225" fill="#1a1a1a" text-anchor="end" textLength="27.62" lengthAdjust="spacingAndGlyphs" stroke="#1a1a1a" stroke-width="0.05">-511,830.00</text>
<text x="585.05" y="450.02" font-size="5.7225" fill="#1a1a1a" text-anchor="end" textLength="22.04" lengthAdjust="spacingAndGlyphs" stroke="#1a1a1a" stroke-width="0.05">6/1/2014</text>
<text x="633.70" y="450.02" font-size="5.7225" fill="#1a1a1a" text-anchor="end" textLength="2.88" lengthAdjust="spacingAndGlyphs" stroke="#1a1a1a" stroke-width="0.05">6</text>
<text x="636.30" y="450.02" font-size="5.985" fill="#1a1a1a" xml:space="preserve" textLength="13.94" lengthAdjust="spacingAndGlyphs" stroke="#1a1a1a" stroke-width="0.05"> June</text>
<text x="683.55" y="450.02" font-size="5.7225" fill="#1a1a1a" textLength="11.51" lengthAdjust="spacingAndGlyphs" stroke="#1a1a1a" stroke-width="0.05">2014</text>
<path d="M682.55 443.68 L685.15 443.68 L682.55 445.83Z" fill="#1a8a36"/>
<text x="11.90" y="458.12" font-size="5.985" fill="#1a1a1a" clip-path="url(#cc0)" textLength="26.60" lengthAdjust="spacingAndGlyphs" stroke="#1a1a1a" stroke-width="0.05">Midmarket</text>
<text x="57.80" y="458.12" font-size="5.985" fill="#1a1a1a" clip-path="url(#cc1)" textLength="23.44" lengthAdjust="spacingAndGlyphs" stroke="#1a1a1a" stroke-width="0.05">Germany</text>
<text x="132.90" y="458.12" font-size="5.985" fill="#1a1a1a" xml:space="preserve" textLength="12.35" lengthAdjust="spacingAndGlyphs" stroke="#1a1a1a" stroke-width="0.05"> VTT</text>
<text x="172.90" y="458.12" font-size="5.985" fill="#1a1a1a" xml:space="preserve" textLength="15.21" lengthAdjust="spacingAndGlyphs" stroke="#1a1a1a" stroke-width="0.05"> None</text>
<text x="260.80" y="458.12" font-size="5.7225" fill="#1a1a1a" text-anchor="end" textLength="8.64" lengthAdjust="spacingAndGlyphs" stroke="#1a1a1a" stroke-width="0.05">888</text>
<text x="265.20" y="458.12" font-size="5.723" fill="#1a1a1a" textLength="3.03" lengthAdjust="spacingAndGlyphs" stroke="#1a1a1a" stroke-width="0.05">$</text>
<text x="299.60" y="458.12" font-size="5.7225" fill="#1a1a1a" text-anchor="end" textLength="15.83" lengthAdjust="spacingAndGlyphs" stroke="#1a1a1a" stroke-width="0.05">250.00</text>
<text x="305.40" y="458.12" font-size="5.723" fill="#1a1a1a" textLength="3.03" lengthAdjust="spacingAndGlyphs" stroke="#1a1a1a" stroke-width="0.05">$</text>
<text x="334.70" y="458.12" font-size="5.7225" fill="#1a1a1a" text-anchor="end" textLength="12.95" lengthAdjust="spacingAndGlyphs" stroke="#1a1a1a" stroke-width="0.05">15.00</text>
<text x="340.50" y="458.12" font-size="5.723" fill="#1a1a1a" textLength="3.03" lengthAdjust="spacingAndGlyphs" stroke="#1a1a1a" stroke-width="0.05">$</text>
<text x="375.30" y="458.12" font-size="5.7225" fill="#1a1a1a" text-anchor="end" textLength="23.00" lengthAdjust="spacingAndGlyphs" stroke="#1a1a1a" stroke-width="0.05">13,320.00</text>
<text x="418.75" y="458.12" font-size="5.723" fill="#1a1a1a" textLength="3.03" lengthAdjust="spacingAndGlyphs" stroke="#1a1a1a" stroke-width="0.05">$</text>
<text x="462.80" y="458.12" font-size="5.7225" fill="#1a1a1a" text-anchor="end" textLength="23.00" lengthAdjust="spacingAndGlyphs" stroke="#1a1a1a" stroke-width="0.05">13,320.00</text>
<text x="381.10" y="458.12" font-size="5.723" fill="#1a1a1a" textLength="3.03" lengthAdjust="spacingAndGlyphs" stroke="#1a1a1a" stroke-width="0.05">$</text>
<text x="406.75" y="458.12" font-size="5.7225" fill="#1a1a1a" text-anchor="end" textLength="1.74" lengthAdjust="spacingAndGlyphs" stroke="#1a1a1a" stroke-width="0.05">-</text>
<text x="468.60" y="458.12" font-size="5.723" fill="#1a1a1a" textLength="3.03" lengthAdjust="spacingAndGlyphs" stroke="#1a1a1a" stroke-width="0.05">$</text>
<text x="498.45" y="458.12" font-size="5.7225" fill="#1a1a1a" text-anchor="end" textLength="25.88" lengthAdjust="spacingAndGlyphs" stroke="#1a1a1a" stroke-width="0.05">222,000.00</text>
<text x="504.25" y="458.12" font-size="5.723" fill="#1a1a1a" textLength="3.03" lengthAdjust="spacingAndGlyphs" stroke="#1a1a1a" stroke-width="0.05">$</text>
<text x="550.70" y="458.12" font-size="5.7225" fill="#1a1a1a" text-anchor="end" textLength="27.62" lengthAdjust="spacingAndGlyphs" stroke="#1a1a1a" stroke-width="0.05">-208,680.00</text>
<text x="585.05" y="458.12" font-size="5.7225" fill="#1a1a1a" text-anchor="end" textLength="22.04" lengthAdjust="spacingAndGlyphs" stroke="#1a1a1a" stroke-width="0.05">6/1/2014</text>
<text x="633.70" y="458.12" font-size="5.7225" fill="#1a1a1a" text-anchor="end" textLength="2.88" lengthAdjust="spacingAndGlyphs" stroke="#1a1a1a" stroke-width="0.05">6</text>
<text x="636.30" y="458.12" font-size="5.985" fill="#1a1a1a" xml:space="preserve" textLength="13.94" lengthAdjust="spacingAndGlyphs" stroke="#1a1a1a" stroke-width="0.05"> June</text>
<text x="683.55" y="458.12" font-size="5.7225" fill="#1a1a1a" textLength="11.51" lengthAdjust="spacingAndGlyphs" stroke="#1a1a1a" stroke-width="0.05">2014</text>
<path d="M682.55 451.77 L685.15 451.77 L682.55 453.92Z" fill="#1a8a36"/>
<text x="11.90" y="466.22" font-size="5.985" fill="#1a1a1a" clip-path="url(#cc0)" textLength="31.36" lengthAdjust="spacingAndGlyphs" stroke="#1a1a1a" stroke-width="0.05">Government</text>
<text x="57.80" y="466.22" font-size="5.985" fill="#1a1a1a" clip-path="url(#cc1)" textLength="17.74" lengthAdjust="spacingAndGlyphs" stroke="#1a1a1a" stroke-width="0.05">France</text>
<text x="132.90" y="466.22" font-size="5.985" fill="#1a1a1a" xml:space="preserve" textLength="12.35" lengthAdjust="spacingAndGlyphs" stroke="#1a1a1a" stroke-width="0.05"> VTT</text>
<text x="172.90" y="466.22" font-size="5.985" fill="#1a1a1a" xml:space="preserve" textLength="15.21" lengthAdjust="spacingAndGlyphs" stroke="#1a1a1a" stroke-width="0.05"> None</text>
<text x="260.80" y="466.22" font-size="5.7225" fill="#1a1a1a" text-anchor="end" textLength="11.51" lengthAdjust="spacingAndGlyphs" stroke="#1a1a1a" stroke-width="0.05">1527</text>
<text x="265.20" y="466.22" font-size="5.723" fill="#1a1a1a" textLength="3.03" lengthAdjust="spacingAndGlyphs" stroke="#1a1a1a" stroke-width="0.05">$</text>
<text x="299.60" y="466.22" font-size="5.7225" fill="#1a1a1a" text-anchor="end" textLength="15.83" lengthAdjust="spacingAndGlyphs" stroke="#1a1a1a" stroke-width="0.05">250.00</text>
<text x="305.40" y="466.22" font-size="5.723" fill="#1a1a1a" textLength="3.03" lengthAdjust="spacingAndGlyphs" stroke="#1a1a1a" stroke-width="0.05">$</text>
<text x="334.70" y="466.22" font-size="5.7225" fill="#1a1a1a" text-anchor="end" textLength="15.83" lengthAdjust="spacingAndGlyphs" stroke="#1a1a1a" stroke-width="0.05">350.00</text>
<text x="340.50" y="466.22" font-size="5.723" fill="#1a1a1a" textLength="3.03" lengthAdjust="spacingAndGlyphs" stroke="#1a1a1a" stroke-width="0.05">$</text>
<text x="375.30" y="466.22" font-size="5.7225" fill="#1a1a1a" text-anchor="end" textLength="25.88" lengthAdjust="spacingAndGlyphs" stroke="#1a1a1a" stroke-width="0.05">534,450.00</text>
<text x="418.75" y="466.22" font-size="5.723" fill="#1a1a1a" textLength="3.03" lengthAdjust="spacingAndGlyphs" stroke="#1a1a1a" stroke-width="0.05">$</text>
<text x="462.80" y="466.22" font-size="5.7225" fill="#1a1a1a" text-anchor="end" textLength="25.88" lengthAdjust="spacingAndGlyphs" stroke="#1a1a1a" stroke-width="0.05">534,450.00</text>
<text x="381.10" y="466.22" font-size="5.723" fill="#1a1a1a" textLength="3.03" lengthAdjust="spacingAndGlyphs" stroke="#1a1a1a" stroke-width="0.05">$</text>
<text x="406.75" y="466.22" font-size="5.7225" fill="#1a1a1a" text-anchor="end" textLength="1.74" lengthAdjust="spacingAndGlyphs" stroke="#1a1a1a" stroke-width="0.05">-</text>
<text x="468.60" y="466.22" font-size="5.723" fill="#1a1a1a" textLength="3.03" lengthAdjust="spacingAndGlyphs" stroke="#1a1a1a" stroke-width="0.05">$</text>
<text x="498.45" y="466.22" font-size="5.7225" fill="#1a1a1a" text-anchor="end" textLength="25.88" lengthAdjust="spacingAndGlyphs" stroke="#1a1a1a" stroke-width="0.05">381,750.00</text>
<text x="504.25" y="466.22" font-size="5.723" fill="#1a1a1a" textLength="3.03" lengthAdjust="spacingAndGlyphs" stroke="#1a1a1a" stroke-width="0.05">$</text>
<text x="550.70" y="466.22" font-size="5.7225" fill="#1a1a1a" text-anchor="end" textLength="25.88" lengthAdjust="spacingAndGlyphs" stroke="#1a1a1a" stroke-width="0.05">152,700.00</text>
<text x="585.05" y="466.22" font-size="5.7225" fill="#1a1a1a" text-anchor="end" textLength="22.04" lengthAdjust="spacingAndGlyphs" stroke="#1a1a1a" stroke-width="0.05">9/1/2013</text>
<text x="633.70" y="466.22" font-size="5.7225" fill="#1a1a1a" text-anchor="end" textLength="2.88" lengthAdjust="spacingAndGlyphs" stroke="#1a1a1a" stroke-width="0.05">9</text>
<text x="636.30" y="466.22" font-size="5.985" fill="#1a1a1a" xml:space="preserve" textLength="29.47" lengthAdjust="spacingAndGlyphs" stroke="#1a1a1a" stroke-width="0.05"> September</text>
<text x="683.55" y="466.22" font-size="5.7225" fill="#1a1a1a" textLength="11.51" lengthAdjust="spacingAndGlyphs" stroke="#1a1a1a" stroke-width="0.05">2013</text>
<path d="M682.55 459.87 L685.15 459.87 L682.55 462.02Z" fill="#1a8a36"/>
</g>
<rect x="0.00" y="465.20" width="913.00" height="15.00" fill="#ececec"/>
<rect x="0.00" y="480.20" width="913.00" height="10.80" fill="#f0f0f0"/>
<line x1="0.00" y1="465.20" x2="902.40" y2="465.20" stroke="#d6d6d6" stroke-width="0.5"/>
<path d="M16 470.6 L14.2 472.5 L16 474.4 M29.6 470.6 L31.4 472.5 L29.6 474.4" fill="none" stroke="#9a9a9a" stroke-width="0.7"/>
<text x="59.30" y="475.20" font-size="6.858" fill="#3a3a3a" textLength="18.70" lengthAdjust="spacingAndGlyphs" stroke="#3a3a3a" stroke-width="0.06">Charts</text>
<line x1="84.30" y1="469.00" x2="84.30" y2="476.50" stroke="#cfcfcf" stroke-width="0.6"/>
<text x="89.90" y="475.20" font-size="6.815" fill="#3a3a3a" textLength="20.00" lengthAdjust="spacingAndGlyphs" stroke="#3a3a3a" stroke-width="0.06">Sheet3</text>
<line x1="115.50" y1="469.00" x2="115.50" y2="476.50" stroke="#cfcfcf" stroke-width="0.6"/>
<rect x="118.60" y="465.00" width="27.10" height="13.20" fill="#ffffff" rx="1.5"/>
<text x="122.20" y="474.00" font-size="6.361" fill="#242424" font-weight="700" textLength="19.32" lengthAdjust="spacingAndGlyphs">Sheet1</text>
<rect x="122.20" y="476.00" width="19.30" height="1.00" fill="#107c41" rx="0.5"/>
<line x1="147.40" y1="469.00" x2="147.40" y2="476.50" stroke="#cfcfcf" stroke-width="0.6"/>
<path d="M170.7 469.6 L170.7 475.6 M167.7 472.6 L173.7 472.6" stroke="#555" stroke-width="0.6"/>
<path d="M562.2 470.4 L559.4 472.5 L562.2 474.6Z" fill="#6b6b6b"/>
<rect x="565.00" y="470.60" width="323.80" height="4.20" fill="#6e6e6e" rx="2.1"/>
<path d="M898.6 470.4 L901.4 472.5 L898.6 474.6Z" fill="#6b6b6b"/>
<path d="M906.4 109.6 L908.6 106.8 L910.8 109.6Z" fill="#6b6b6b"/>
<rect x="905.90" y="112.50" width="4.30" height="7.60" fill="#6e6e6e" rx="2.1"/>
<path d="M906.4 461.4 L908.6 464.2 L910.8 461.4Z" fill="#6b6b6b"/>
<text x="5.20" y="488.00" font-size="5.454" fill="#3a3a3a" textLength="14.60" lengthAdjust="spacingAndGlyphs" stroke="#3a3a3a" stroke-width="0.06">Ready</text>
<g fill="none" stroke="#6b6b6b" stroke-width="0.55"><rect x="29.6" y="483" width="6.4" height="5.8"/><path d="M29.6 485 L36 485 M29.6 487 L36 487 M31.8 483 L31.8 488.8 M33.8 483 L33.8 488.8"/></g>
<g fill="none" stroke="#4a4a4a" stroke-width="0.55"><circle cx="47.6" cy="482.8" r="0.9"/><path d="M44.6 484.6 L50.6 484.6 M47.6 484.6 L47.6 486.8 L45.6 489.2 M47.6 486.8 L49.6 489.2"/></g>
<text x="53.50" y="488.00" font-size="5.378" fill="#3a3a3a" font-weight="700" textLength="59.51" lengthAdjust="spacingAndGlyphs">Accessibility: Investigate</text>
<g fill="none" stroke="#555" stroke-width="0.55"><rect x="714.2" y="483.2" width="6.0" height="4.4" rx="0.4"/><path d="M716.4 489 L718.4 489"/></g><rect x="717.6" y="485.6" width="3.2" height="3.2" rx="0.5" fill="#555"/>
<text x="722.20" y="488.00" font-size="5.875" fill="#3a3a3a" textLength="39.00" lengthAdjust="spacingAndGlyphs" stroke="#3a3a3a" stroke-width="0.06">Display Settings</text>
<rect x="770.20" y="481.00" width="18.80" height="10.00" fill="#dedede"/>
<rect x="776.0" y="482.4" width="6.8" height="6.6" rx="1.0" fill="#505050"/>
<rect x="776.70" y="483.10" width="1.35" height="1.30" fill="#e4e4e4"/>
<rect x="776.70" y="485.10" width="1.35" height="1.30" fill="#e4e4e4"/>
<rect x="776.70" y="487.10" width="1.35" height="1.30" fill="#e4e4e4"/>
<rect x="778.75" y="483.10" width="1.35" height="1.30" fill="#e4e4e4"/>
<rect x="778.75" y="485.10" width="1.35" height="1.30" fill="#e4e4e4"/>
<rect x="778.75" y="487.10" width="1.35" height="1.30" fill="#e4e4e4"/>
<rect x="780.80" y="483.10" width="1.35" height="1.30" fill="#e4e4e4"/>
<rect x="780.80" y="485.10" width="1.35" height="1.30" fill="#e4e4e4"/>
<rect x="780.80" y="487.10" width="1.35" height="1.30" fill="#e4e4e4"/>
<rect x="795.4" y="482.6" width="7.2" height="6.4" rx="1.1" fill="#c4c4c4" stroke="#555" stroke-width="0.6"/><path d="M797.0 482.6 V489 M801.0 482.6 V489" stroke="#777" stroke-width="0.5"/>
<rect x="814.4" y="482.6" width="7.2" height="6.4" rx="1.1" fill="none" stroke="#555" stroke-width="0.6"/><path d="M816.2 482.8 V485.4 H819.8 V482.8 M818.0 482.8 V484.6" fill="none" stroke="#555" stroke-width="0.55"/>
<line x1="829.80" y1="486.00" x2="833.20" y2="486.00" stroke="#444" stroke-width="0.7"/>
<rect x="836.50" y="485.50" width="47.50" height="1.00" fill="#bdbdbd"/>
<rect x="856.50" y="483.40" width="2.20" height="5.40" fill="#555" rx="0.6"/>
<line x1="860.60" y1="485.20" x2="860.60" y2="486.80" stroke="#555" stroke-width="0.5"/>
<path d="M888.5 483.8 L888.5 488.2 M886.3 486 L890.7 486" stroke="#555" stroke-width="0.6"/>
<text x="896.00" y="488.00" font-size="5.616" fill="#3a3a3a" textLength="10.41" lengthAdjust="spacingAndGlyphs" stroke="#3a3a3a" stroke-width="0.06">85%</text>
<rect x="323.80" y="156.00" width="232.40" height="330.90" fill="#000" rx="4" opacity="0.30" filter="url(#shd)"/>
<rect x="325.30" y="154.50" width="229.40" height="328.90" fill="#ffffff" rx="3" stroke="#5fa37e" stroke-width="0.9"/>
<path d="M544.9 158.9 L549.7 163.7 M549.7 158.9 L544.9 163.7" stroke="#333" stroke-width="0.7"/>
<text x="337.40" y="192.40" font-size="9.25" fill="#242424" stroke="#242424" stroke-width="0.3">Manage Access</text>
<g><path d="M342.4 201.2 L346.4 201.2 L348.2 203 L348.2 208.4 L342.4 208.4 Z" fill="#fff" stroke="#9a9a9a" stroke-width="0.45"/><rect x="345.6" y="203.6" width="2.0" height="4.0" fill="#6fcf97"/><rect x="340.1" y="203.2" width="5.0" height="5.0" rx="0.5" fill="#107c41"/><path d="M341.6 204.4 L343.6 207 M343.6 204.4 L341.6 207" stroke="#fff" stroke-width="0.55"/></g>
<text x="351.80" y="207.80" font-size="5.83" fill="#3a3a3a" textLength="53.19" lengthAdjust="spacingAndGlyphs" stroke="#3a3a3a" stroke-width="0.06">Financial Sample.xlsx</text>
<g fill="none" stroke="#3a86d0" stroke-width="0.55"><circle cx="343.6" cy="215.8" r="1.2"/><path d="M341.6 220.2 C341.6 218.4 342.4 217.6 343.6 217.6 C344.3 217.6 344.8 217.9 345.1 218.3"/><circle cx="346.4" cy="216.6" r="1.0"/><path d="M344.8 220.4 L348.2 220.4 M345.6 219.2 L348.2 219.2"/></g>
<text x="352.00" y="219.20" font-size="6.678" fill="#1f74c5" textLength="16.81" lengthAdjust="spacingAndGlyphs" stroke="#1f74c5" stroke-width="0.06">Share</text>
<text x="342.80" y="240.80" font-size="6.837" fill="#424242" textLength="29.51" lengthAdjust="spacingAndGlyphs" stroke="#424242" stroke-width="0.06">People • 1</text>
<text x="384.20" y="240.80" font-size="6.837" fill="#424242" textLength="21.15" lengthAdjust="spacingAndGlyphs" stroke="#424242" stroke-width="0.06">Groups</text>
<rect x="411.40" y="227.50" width="27.60" height="21.90" fill="none" rx="2.4" stroke="#1a1a1a" stroke-width="1.05"/>
<text x="417.20" y="240.80" font-size="6.466" fill="#242424" textLength="14.24" lengthAdjust="spacingAndGlyphs" stroke="#242424" stroke-width="0.28">Links</text>
<rect x="417.90" y="247.30" width="15.00" height="1.80" fill="#0f6cbd" rx="0.9"/>
<text x="337.30" y="267.50" font-size="7.017" fill="#303030" textLength="204.23" lengthAdjust="spacingAndGlyphs" stroke="#303030" stroke-width="0.06">A sharing link hasn’t been created for this file yet. Create a new link to</text>
<text x="337.30" y="276.20" font-size="7.017" fill="#303030" textLength="72.12" lengthAdjust="spacingAndGlyphs" stroke="#303030" stroke-width="0.06">start sharing with others.</text>
<g fill="none" stroke="#1f74c5" stroke-width="0.55"><circle cx="341.1" cy="286.0" r="2.9"/><path d="M341.1 284.4 L341.1 287.6 M339.5 286 L342.7 286"/></g>
<text x="348.50" y="288.20" font-size="6.858" fill="#1f74c5" textLength="80.56" lengthAdjust="spacingAndGlyphs" stroke="#1f74c5" stroke-width="0.06">Create and share a new link</text>
<rect x="527.80" y="180.60" width="14.40" height="14.00" fill="#f0f0f0" rx="2"/>
<g fill="none" stroke="#2a7bd0" stroke-width="0.6"><circle cx="534.2" cy="185.2" r="1.6"/><path d="M531.4 190.8 C531.4 188.4 532.6 187.4 534.2 187.4 C535 187.4 535.6 187.6 536 188"/></g><circle cx="536.8" cy="189.6" r="1.9" fill="#0f6cbd"/><path d="M536.8 188.6 L536.8 190.6 M535.8 189.6 L537.8 189.6" stroke="#fff" stroke-width="0.5"/>
<path d="M510.6 201.2 L552.8 201.2 L552.8 214.2 L510.6 214.2Z" fill="#000" opacity="0.18" filter="url(#shd2)"/>
<rect x="509.90" y="200.00" width="42.70" height="13.10" fill="#ffffff" rx="2"/>
<path d="M533.2 200.1 L535.7 197.2 L538.2 200.1Z" fill="#fff"/>
<text x="515.90" y="208.60" font-size="5.671" fill="#424242" textLength="31.82" lengthAdjust="spacingAndGlyphs" stroke="#424242" stroke-width="0.06">Grant Access</text>
</svg>
</body></html>
